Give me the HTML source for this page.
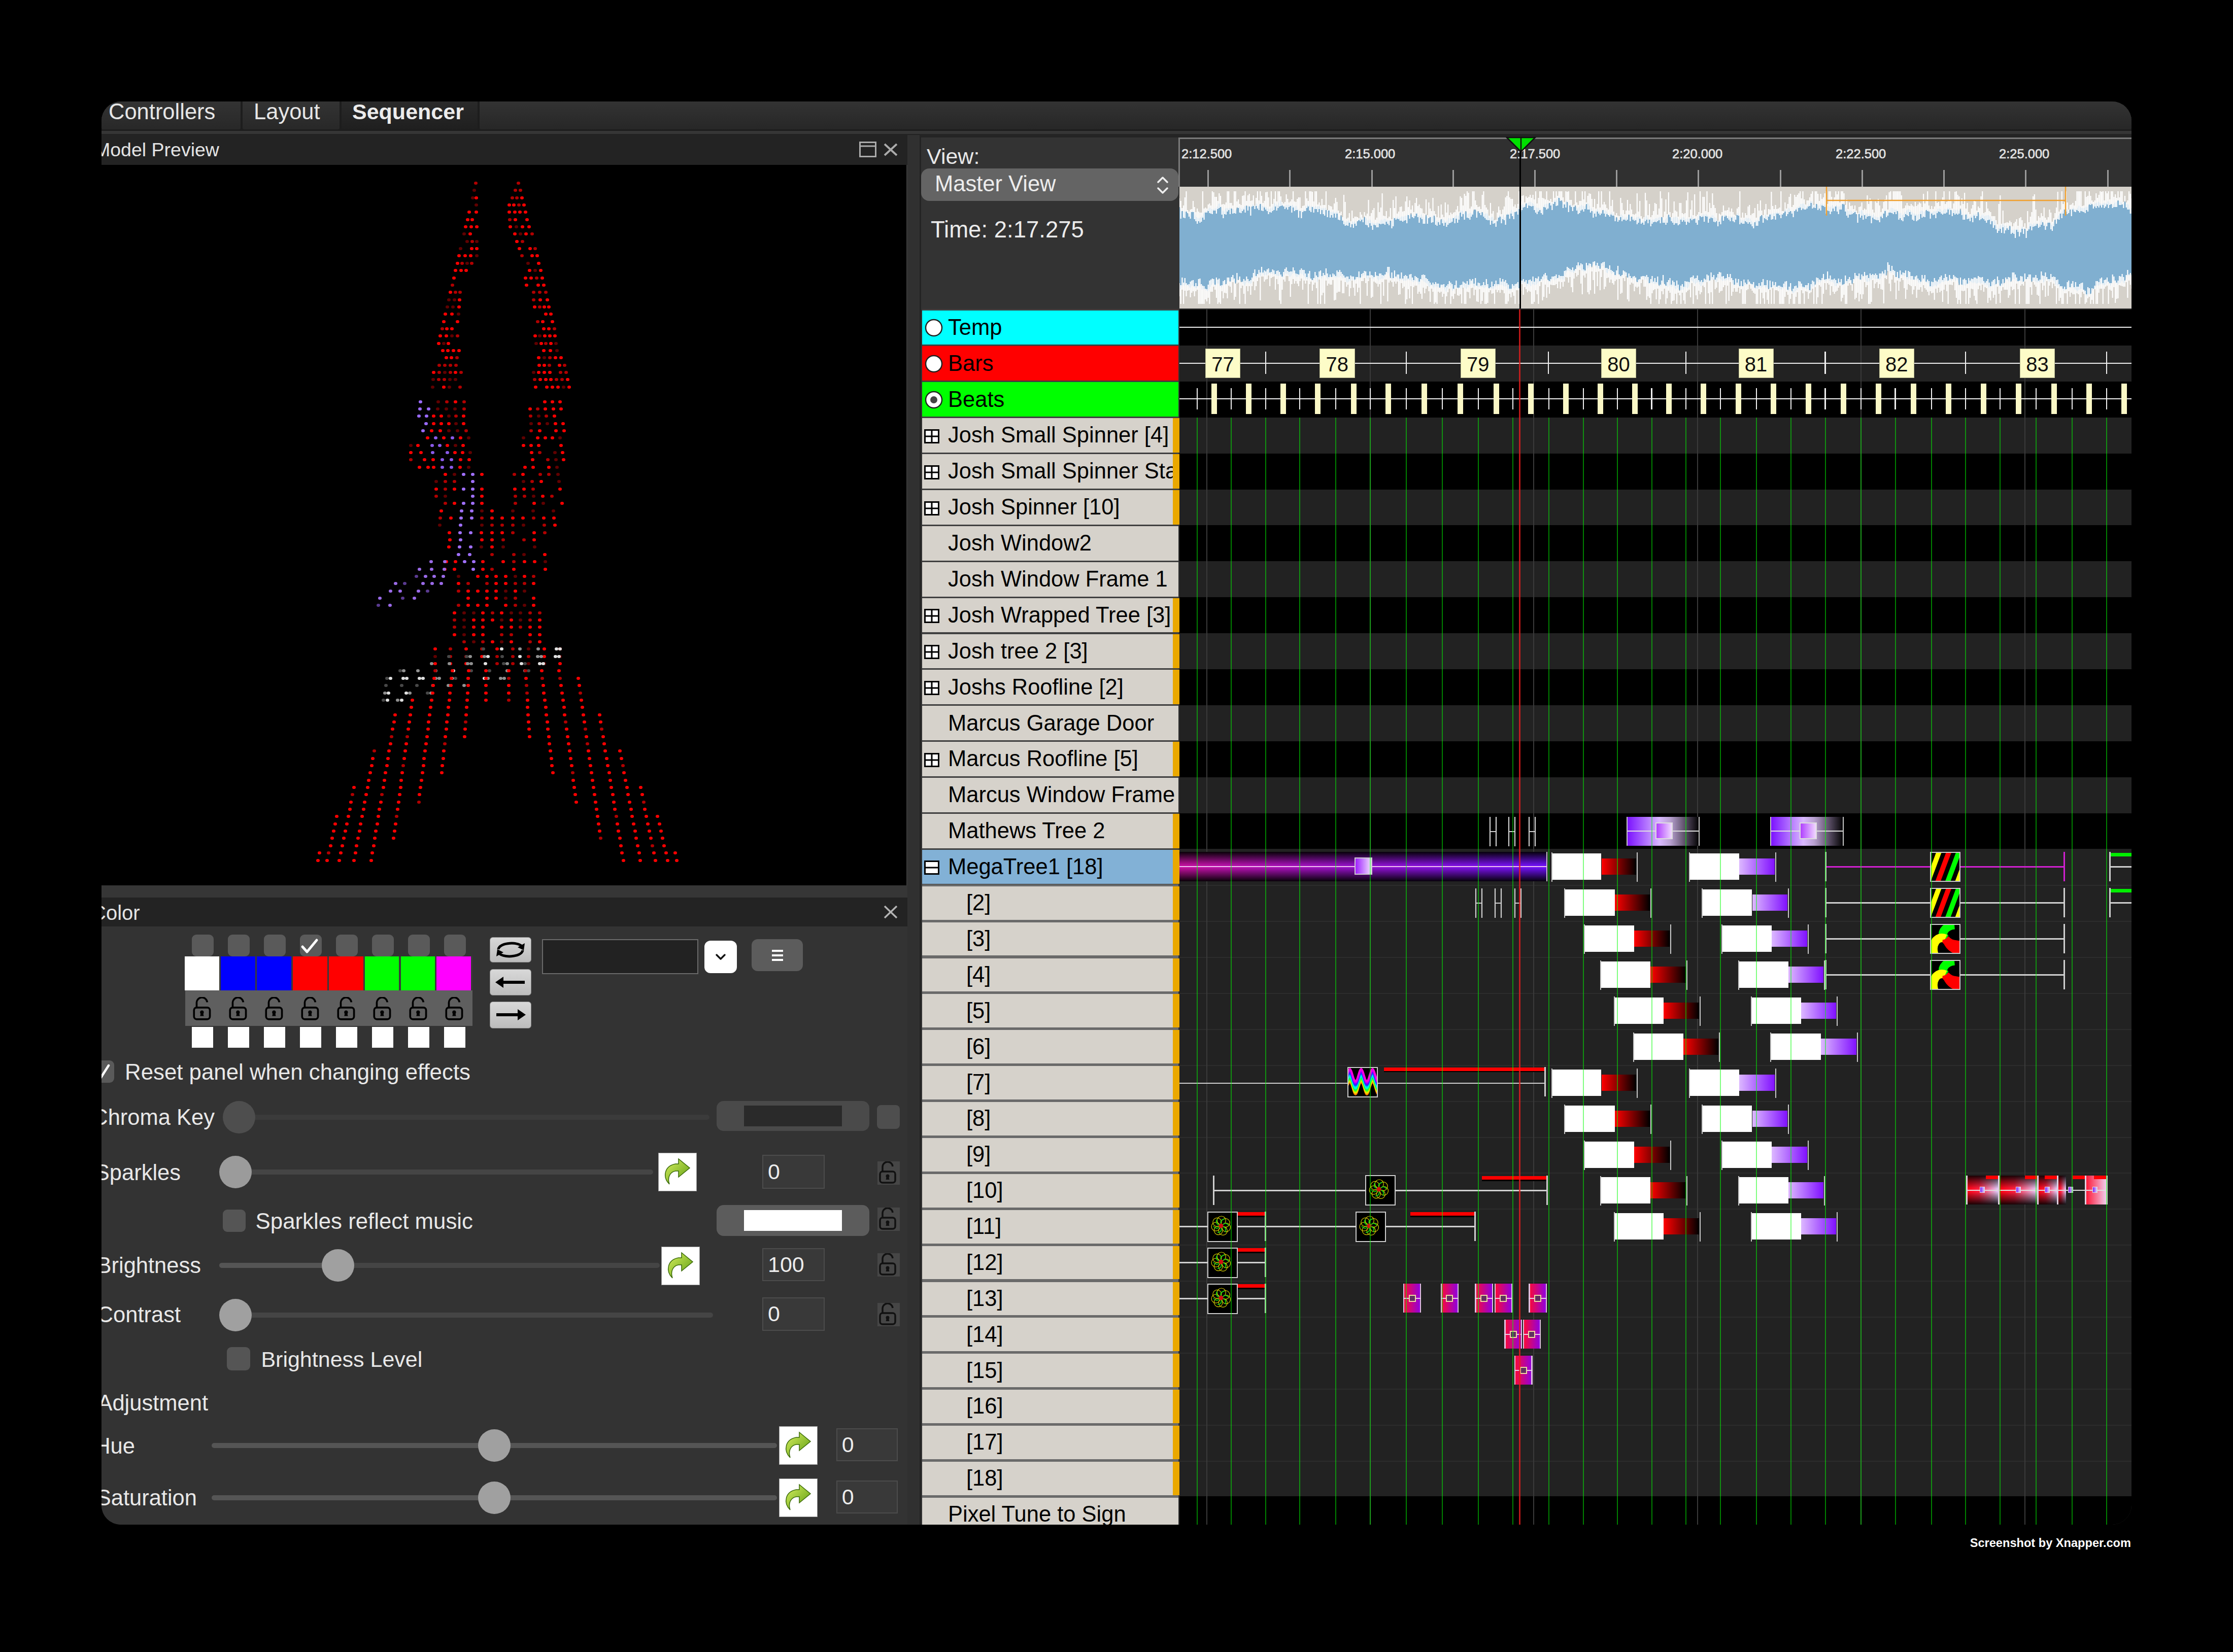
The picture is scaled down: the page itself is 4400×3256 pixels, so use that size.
<!DOCTYPE html>
<html><head><meta charset="utf-8"><style>
html,body{margin:0;padding:0;background:#000;}
body{width:4400px;height:3256px;position:relative;overflow:hidden;font-family:"Liberation Sans",sans-serif;}
body div, body svg{position:absolute;}
#win{left:0;top:0;width:4400px;height:3256px;background:#333;clip-path:inset(200px 200px 251px 200px round 38px);}
.t{white-space:nowrap;}
</style></head><body>
<div id="win">
<div style="left:200.0px;top:200.0px;width:4000.0px;height:66.0px;background:#1d1d1d;"></div>
<div style="left:200px;top:200px;width:274px;height:55px;background:linear-gradient(180deg,#333,#282828);border-radius:0 0 3px 3px"></div>
<div style="left:478px;top:200px;width:191px;height:55px;background:linear-gradient(180deg,#333,#282828);border-radius:0 0 3px 3px"></div>
<div style="left:673px;top:200px;width:268px;height:55px;background:linear-gradient(180deg,#2a2a2a,#1f1f1f);border-radius:0 0 3px 3px"></div>
<div style="left:945px;top:200px;width:3255px;height:55px;background:linear-gradient(180deg,#333,#272727);border-radius:0 0 3px 3px"></div>
<div class="t" style="left:214.0px;top:198.7px;font-size:43.5px;line-height:43.5px;color:#e6e6e6;font-weight:400;">Controllers</div>
<div class="t" style="left:500.0px;top:198.7px;font-size:43.5px;line-height:43.5px;color:#e6e6e6;font-weight:400;">Layout</div>
<div class="t" style="left:694.0px;top:199.1px;font-size:43px;line-height:43px;color:#ececec;font-weight:700;">Sequencer</div>
<div style="left:200.0px;top:258.0px;width:4000.0px;height:6.0px;background:#363636;"></div>
<div style="left:200.0px;top:264.0px;width:4000.0px;height:2.0px;background:#222;"></div>
<div style="left:200.0px;top:266.0px;width:1588.0px;height:59.0px;background:#232323;"></div>
<div class="t" style="left:186.0px;top:277.3px;font-size:37.5px;line-height:37.5px;color:#e4e4e4;font-weight:400;">Model Preview</div>
<svg style="left:1693px;top:279px" width="34" height="31"><rect x="1.5" y="1.5" width="31" height="28" fill="none" stroke="#ababab" stroke-width="3"/><line x1="1" y1="9" x2="33" y2="9" stroke="#ababab" stroke-width="3"/></svg>
<svg style="left:1740px;top:281px" width="30" height="28"><path d="M3 3 L27 25 M27 3 L3 25" stroke="#ababab" stroke-width="3.8" fill="none"/></svg>
<div style="left:200.0px;top:325.0px;width:1587.0px;height:1420.0px;background:#000;"></div>
<div style="left:1786.0px;top:325.0px;width:2.5px;height:1420.0px;background:#3a3a3a;"></div>
<div style="left:200.0px;top:1745.0px;width:1588.0px;height:24.0px;background:#363636;"></div>
<div style="left:200.0px;top:1769.0px;width:1588.0px;height:57.0px;background:#232323;"></div>
<div class="t" style="left:180.0px;top:1779.1px;font-size:40px;line-height:40px;color:#e4e4e4;font-weight:400;">Color</div>
<svg style="left:1740px;top:1783px" width="30" height="29"><path d="M3 3 L27 26 M27 3 L3 26" stroke="#b4b4b4" stroke-width="3.5" fill="none"/></svg>
<div style="left:200.0px;top:1826.0px;width:1588.0px;height:1179.0px;background:#333333;"></div>
<div style="left:1788.0px;top:266.0px;width:24.0px;height:2739.0px;background:#303030;"></div>
<div style="left:1812.0px;top:266.0px;width:3.0px;height:2739.0px;background:#232323;"></div>
<svg style="left:200px;top:325px" width="1586" height="1416"><rect x="734" y="33" width="7" height="6" rx="3" fill="#b00000"/><rect x="731" y="47" width="7" height="6" rx="3" fill="#600000"/><rect x="728" y="62" width="7" height="6" rx="3" fill="#600000"/><rect x="735" y="62" width="7" height="6" rx="3" fill="#ff0000"/><rect x="735" y="76" width="7" height="6" rx="3" fill="#600000"/><rect x="721" y="90" width="7" height="6" rx="3" fill="#ff0000"/><rect x="735" y="90" width="7" height="6" rx="3" fill="#ff0000"/><rect x="718" y="105" width="7" height="6" rx="3" fill="#ff0000"/><rect x="727" y="105" width="7" height="6" rx="3" fill="#ff0000"/><rect x="714" y="119" width="7" height="6" rx="3" fill="#ff0000"/><rect x="725" y="119" width="7" height="6" rx="3" fill="#ff0000"/><rect x="736" y="119" width="7" height="6" rx="3" fill="#ff0000"/><rect x="711" y="133" width="7" height="6" rx="3" fill="#600000"/><rect x="723" y="133" width="7" height="6" rx="3" fill="#ff0000"/><rect x="717" y="148" width="7" height="6" rx="3" fill="#600000"/><rect x="727" y="148" width="7" height="6" rx="3" fill="#b00000"/><rect x="736" y="148" width="7" height="6" rx="3" fill="#600000"/><rect x="704" y="162" width="7" height="6" rx="3" fill="#600000"/><rect x="726" y="162" width="7" height="6" rx="3" fill="#ff0000"/><rect x="736" y="162" width="7" height="6" rx="3" fill="#ff0000"/><rect x="701" y="176" width="7" height="6" rx="3" fill="#ff0000"/><rect x="713" y="176" width="7" height="6" rx="3" fill="#ff0000"/><rect x="724" y="176" width="7" height="6" rx="3" fill="#ff0000"/><rect x="736" y="176" width="7" height="6" rx="3" fill="#600000"/><rect x="698" y="191" width="7" height="6" rx="3" fill="#ff0000"/><rect x="707" y="191" width="7" height="6" rx="3" fill="#b00000"/><rect x="717" y="191" width="7" height="6" rx="3" fill="#600000"/><rect x="726" y="191" width="7" height="6" rx="3" fill="#b00000"/><rect x="694" y="205" width="7" height="6" rx="3" fill="#ff0000"/><rect x="705" y="205" width="7" height="6" rx="3" fill="#ff0000"/><rect x="715" y="205" width="7" height="6" rx="3" fill="#ff0000"/><rect x="691" y="220" width="7" height="6" rx="3" fill="#ff0000"/><rect x="688" y="234" width="7" height="6" rx="3" fill="#b00000"/><rect x="684" y="248" width="7" height="6" rx="3" fill="#ff0000"/><rect x="694" y="248" width="7" height="6" rx="3" fill="#b00000"/><rect x="703" y="248" width="7" height="6" rx="3" fill="#b00000"/><rect x="681" y="263" width="7" height="6" rx="3" fill="#600000"/><rect x="692" y="263" width="7" height="6" rx="3" fill="#600000"/><rect x="702" y="263" width="7" height="6" rx="3" fill="#ff0000"/><rect x="678" y="277" width="7" height="6" rx="3" fill="#600000"/><rect x="689" y="277" width="7" height="6" rx="3" fill="#600000"/><rect x="701" y="277" width="7" height="6" rx="3" fill="#ff0000"/><rect x="674" y="291" width="7" height="6" rx="3" fill="#ff0000"/><rect x="687" y="291" width="7" height="6" rx="3" fill="#ff0000"/><rect x="700" y="291" width="7" height="6" rx="3" fill="#600000"/><rect x="671" y="306" width="7" height="6" rx="3" fill="#ff0000"/><rect x="698" y="306" width="7" height="6" rx="3" fill="#ff0000"/><rect x="668" y="320" width="7" height="6" rx="3" fill="#b00000"/><rect x="677" y="320" width="7" height="6" rx="3" fill="#ff0000"/><rect x="687" y="320" width="7" height="6" rx="3" fill="#ff0000"/><rect x="664" y="334" width="7" height="6" rx="3" fill="#ff0000"/><rect x="676" y="334" width="7" height="6" rx="3" fill="#ff0000"/><rect x="687" y="334" width="7" height="6" rx="3" fill="#600000"/><rect x="698" y="334" width="7" height="6" rx="3" fill="#b00000"/><rect x="661" y="349" width="7" height="6" rx="3" fill="#ff0000"/><rect x="671" y="349" width="7" height="6" rx="3" fill="#600000"/><rect x="680" y="349" width="7" height="6" rx="3" fill="#ff0000"/><rect x="669" y="363" width="7" height="6" rx="3" fill="#ff0000"/><rect x="679" y="363" width="7" height="6" rx="3" fill="#ff0000"/><rect x="690" y="363" width="7" height="6" rx="3" fill="#ff0000"/><rect x="701" y="363" width="7" height="6" rx="3" fill="#ff0000"/><rect x="676" y="377" width="7" height="6" rx="3" fill="#ff0000"/><rect x="686" y="377" width="7" height="6" rx="3" fill="#ff0000"/><rect x="697" y="377" width="7" height="6" rx="3" fill="#b00000"/><rect x="662" y="392" width="7" height="6" rx="3" fill="#b00000"/><rect x="673" y="392" width="7" height="6" rx="3" fill="#b00000"/><rect x="684" y="392" width="7" height="6" rx="3" fill="#b00000"/><rect x="695" y="392" width="7" height="6" rx="3" fill="#b00000"/><rect x="651" y="406" width="7" height="6" rx="3" fill="#ff0000"/><rect x="662" y="406" width="7" height="6" rx="3" fill="#b00000"/><rect x="673" y="406" width="7" height="6" rx="3" fill="#600000"/><rect x="684" y="406" width="7" height="6" rx="3" fill="#b00000"/><rect x="694" y="406" width="7" height="6" rx="3" fill="#ff0000"/><rect x="705" y="406" width="7" height="6" rx="3" fill="#b00000"/><rect x="650" y="420" width="7" height="6" rx="3" fill="#600000"/><rect x="661" y="420" width="7" height="6" rx="3" fill="#b00000"/><rect x="672" y="420" width="7" height="6" rx="3" fill="#b00000"/><rect x="683" y="420" width="7" height="6" rx="3" fill="#600000"/><rect x="694" y="420" width="7" height="6" rx="3" fill="#600000"/><rect x="649" y="435" width="7" height="6" rx="3" fill="#600000"/><rect x="671" y="435" width="7" height="6" rx="3" fill="#ff0000"/><rect x="682" y="435" width="7" height="6" rx="3" fill="#600000"/><rect x="703" y="435" width="7" height="6" rx="3" fill="#b00000"/><rect x="818" y="33" width="7" height="6" rx="3" fill="#b00000"/><rect x="812" y="47" width="7" height="6" rx="3" fill="#b00000"/><rect x="822" y="47" width="7" height="6" rx="3" fill="#b00000"/><rect x="806" y="62" width="7" height="6" rx="3" fill="#b00000"/><rect x="815" y="62" width="7" height="6" rx="3" fill="#b00000"/><rect x="825" y="62" width="7" height="6" rx="3" fill="#ff0000"/><rect x="800" y="76" width="7" height="6" rx="3" fill="#ff0000"/><rect x="809" y="76" width="7" height="6" rx="3" fill="#ff0000"/><rect x="819" y="76" width="7" height="6" rx="3" fill="#b00000"/><rect x="829" y="76" width="7" height="6" rx="3" fill="#ff0000"/><rect x="800" y="90" width="7" height="6" rx="3" fill="#ff0000"/><rect x="811" y="90" width="7" height="6" rx="3" fill="#ff0000"/><rect x="821" y="90" width="7" height="6" rx="3" fill="#ff0000"/><rect x="832" y="90" width="7" height="6" rx="3" fill="#ff0000"/><rect x="801" y="105" width="7" height="6" rx="3" fill="#b00000"/><rect x="812" y="105" width="7" height="6" rx="3" fill="#ff0000"/><rect x="835" y="105" width="7" height="6" rx="3" fill="#ff0000"/><rect x="802" y="119" width="7" height="6" rx="3" fill="#ff0000"/><rect x="814" y="119" width="7" height="6" rx="3" fill="#600000"/><rect x="826" y="119" width="7" height="6" rx="3" fill="#ff0000"/><rect x="839" y="119" width="7" height="6" rx="3" fill="#ff0000"/><rect x="811" y="133" width="7" height="6" rx="3" fill="#ff0000"/><rect x="822" y="133" width="7" height="6" rx="3" fill="#600000"/><rect x="833" y="133" width="7" height="6" rx="3" fill="#ff0000"/><rect x="845" y="133" width="7" height="6" rx="3" fill="#b00000"/><rect x="815" y="148" width="7" height="6" rx="3" fill="#ff0000"/><rect x="826" y="148" width="7" height="6" rx="3" fill="#b00000"/><rect x="820" y="162" width="7" height="6" rx="3" fill="#ff0000"/><rect x="841" y="162" width="7" height="6" rx="3" fill="#ff0000"/><rect x="851" y="162" width="7" height="6" rx="3" fill="#b00000"/><rect x="825" y="176" width="7" height="6" rx="3" fill="#b00000"/><rect x="845" y="176" width="7" height="6" rx="3" fill="#ff0000"/><rect x="855" y="176" width="7" height="6" rx="3" fill="#ff0000"/><rect x="837" y="191" width="7" height="6" rx="3" fill="#600000"/><rect x="858" y="191" width="7" height="6" rx="3" fill="#ff0000"/><rect x="840" y="205" width="7" height="6" rx="3" fill="#ff0000"/><rect x="851" y="205" width="7" height="6" rx="3" fill="#600000"/><rect x="862" y="205" width="7" height="6" rx="3" fill="#ff0000"/><rect x="832" y="220" width="7" height="6" rx="3" fill="#ff0000"/><rect x="843" y="220" width="7" height="6" rx="3" fill="#ff0000"/><rect x="854" y="220" width="7" height="6" rx="3" fill="#b00000"/><rect x="865" y="220" width="7" height="6" rx="3" fill="#ff0000"/><rect x="834" y="234" width="7" height="6" rx="3" fill="#ff0000"/><rect x="857" y="234" width="7" height="6" rx="3" fill="#ff0000"/><rect x="868" y="234" width="7" height="6" rx="3" fill="#ff0000"/><rect x="848" y="248" width="7" height="6" rx="3" fill="#b00000"/><rect x="860" y="248" width="7" height="6" rx="3" fill="#b00000"/><rect x="872" y="248" width="7" height="6" rx="3" fill="#b00000"/><rect x="848" y="263" width="7" height="6" rx="3" fill="#b00000"/><rect x="861" y="263" width="7" height="6" rx="3" fill="#ff0000"/><rect x="875" y="263" width="7" height="6" rx="3" fill="#ff0000"/><rect x="850" y="277" width="7" height="6" rx="3" fill="#ff0000"/><rect x="860" y="277" width="7" height="6" rx="3" fill="#b00000"/><rect x="869" y="277" width="7" height="6" rx="3" fill="#ff0000"/><rect x="878" y="277" width="7" height="6" rx="3" fill="#ff0000"/><rect x="872" y="291" width="7" height="6" rx="3" fill="#ff0000"/><rect x="882" y="291" width="7" height="6" rx="3" fill="#ff0000"/><rect x="856" y="306" width="7" height="6" rx="3" fill="#b00000"/><rect x="866" y="306" width="7" height="6" rx="3" fill="#ff0000"/><rect x="885" y="306" width="7" height="6" rx="3" fill="#ff0000"/><rect x="868" y="320" width="7" height="6" rx="3" fill="#ff0000"/><rect x="878" y="320" width="7" height="6" rx="3" fill="#ff0000"/><rect x="889" y="320" width="7" height="6" rx="3" fill="#b00000"/><rect x="851" y="334" width="7" height="6" rx="3" fill="#ff0000"/><rect x="860" y="334" width="7" height="6" rx="3" fill="#600000"/><rect x="870" y="334" width="7" height="6" rx="3" fill="#ff0000"/><rect x="880" y="334" width="7" height="6" rx="3" fill="#ff0000"/><rect x="890" y="334" width="7" height="6" rx="3" fill="#ff0000"/><rect x="853" y="349" width="7" height="6" rx="3" fill="#600000"/><rect x="863" y="349" width="7" height="6" rx="3" fill="#ff0000"/><rect x="872" y="349" width="7" height="6" rx="3" fill="#b00000"/><rect x="882" y="349" width="7" height="6" rx="3" fill="#ff0000"/><rect x="892" y="349" width="7" height="6" rx="3" fill="#600000"/><rect x="868" y="363" width="7" height="6" rx="3" fill="#ff0000"/><rect x="881" y="363" width="7" height="6" rx="3" fill="#ff0000"/><rect x="894" y="363" width="7" height="6" rx="3" fill="#600000"/><rect x="858" y="377" width="7" height="6" rx="3" fill="#ff0000"/><rect x="869" y="377" width="7" height="6" rx="3" fill="#600000"/><rect x="880" y="377" width="7" height="6" rx="3" fill="#b00000"/><rect x="891" y="377" width="7" height="6" rx="3" fill="#ff0000"/><rect x="902" y="377" width="7" height="6" rx="3" fill="#ff0000"/><rect x="859" y="392" width="7" height="6" rx="3" fill="#ff0000"/><rect x="869" y="392" width="7" height="6" rx="3" fill="#ff0000"/><rect x="879" y="392" width="7" height="6" rx="3" fill="#b00000"/><rect x="899" y="392" width="7" height="6" rx="3" fill="#ff0000"/><rect x="909" y="392" width="7" height="6" rx="3" fill="#b00000"/><rect x="848" y="406" width="7" height="6" rx="3" fill="#600000"/><rect x="858" y="406" width="7" height="6" rx="3" fill="#ff0000"/><rect x="869" y="406" width="7" height="6" rx="3" fill="#ff0000"/><rect x="880" y="406" width="7" height="6" rx="3" fill="#ff0000"/><rect x="901" y="406" width="7" height="6" rx="3" fill="#b00000"/><rect x="912" y="406" width="7" height="6" rx="3" fill="#b00000"/><rect x="850" y="420" width="7" height="6" rx="3" fill="#b00000"/><rect x="861" y="420" width="7" height="6" rx="3" fill="#ff0000"/><rect x="872" y="420" width="7" height="6" rx="3" fill="#ff0000"/><rect x="882" y="420" width="7" height="6" rx="3" fill="#ff0000"/><rect x="893" y="420" width="7" height="6" rx="3" fill="#b00000"/><rect x="904" y="420" width="7" height="6" rx="3" fill="#b00000"/><rect x="915" y="420" width="7" height="6" rx="3" fill="#ff0000"/><rect x="852" y="435" width="7" height="6" rx="3" fill="#ff0000"/><rect x="874" y="435" width="7" height="6" rx="3" fill="#ff0000"/><rect x="885" y="435" width="7" height="6" rx="3" fill="#ff0000"/><rect x="896" y="435" width="7" height="6" rx="3" fill="#ff0000"/><rect x="907" y="435" width="7" height="6" rx="3" fill="#600000"/><rect x="918" y="435" width="7" height="6" rx="3" fill="#ff0000"/><rect x="625" y="464" width="7" height="6" rx="3" fill="#9a6aff"/><rect x="660" y="464" width="7" height="6" rx="3" fill="#600000"/><rect x="677" y="464" width="7" height="6" rx="3" fill="#b00000"/><rect x="694" y="464" width="7" height="6" rx="3" fill="#ff0000"/><rect x="711" y="464" width="7" height="6" rx="3" fill="#b00000"/><rect x="624" y="478" width="7" height="6" rx="3" fill="#9a6aff"/><rect x="641" y="478" width="7" height="6" rx="3" fill="#9a6aff"/><rect x="659" y="478" width="7" height="6" rx="3" fill="#600000"/><rect x="676" y="478" width="7" height="6" rx="3" fill="#600000"/><rect x="693" y="478" width="7" height="6" rx="3" fill="#600000"/><rect x="711" y="478" width="7" height="6" rx="3" fill="#b00000"/><rect x="622" y="492" width="7" height="6" rx="3" fill="#9a6aff"/><rect x="637" y="492" width="7" height="6" rx="3" fill="#9a6aff"/><rect x="651" y="492" width="7" height="6" rx="3" fill="#ff0000"/><rect x="666" y="492" width="7" height="6" rx="3" fill="#ff0000"/><rect x="681" y="492" width="7" height="6" rx="3" fill="#600000"/><rect x="695" y="492" width="7" height="6" rx="3" fill="#b00000"/><rect x="710" y="492" width="7" height="6" rx="3" fill="#ff0000"/><rect x="636" y="507" width="7" height="6" rx="3" fill="#9a6aff"/><rect x="651" y="507" width="7" height="6" rx="3" fill="#ff0000"/><rect x="666" y="507" width="7" height="6" rx="3" fill="#ff0000"/><rect x="681" y="507" width="7" height="6" rx="3" fill="#ff0000"/><rect x="695" y="507" width="7" height="6" rx="3" fill="#600000"/><rect x="710" y="507" width="7" height="6" rx="3" fill="#ff0000"/><rect x="630" y="521" width="7" height="6" rx="3" fill="#9a6aff"/><rect x="647" y="521" width="7" height="6" rx="3" fill="#ff0000"/><rect x="664" y="521" width="7" height="6" rx="3" fill="#ff0000"/><rect x="681" y="521" width="7" height="6" rx="3" fill="#600000"/><rect x="698" y="521" width="7" height="6" rx="3" fill="#600000"/><rect x="715" y="521" width="7" height="6" rx="3" fill="#b00000"/><rect x="639" y="535" width="7" height="6" rx="3" fill="#ff0000"/><rect x="655" y="535" width="7" height="6" rx="3" fill="#8a5ae8"/><rect x="671" y="535" width="7" height="6" rx="3" fill="#ff0000"/><rect x="688" y="535" width="7" height="6" rx="3" fill="#8a5ae8"/><rect x="704" y="535" width="7" height="6" rx="3" fill="#ff0000"/><rect x="720" y="535" width="7" height="6" rx="3" fill="#600000"/><rect x="648" y="550" width="7" height="6" rx="3" fill="#8a5ae8"/><rect x="663" y="550" width="7" height="6" rx="3" fill="#8a5ae8"/><rect x="678" y="550" width="7" height="6" rx="3" fill="#ff0000"/><rect x="694" y="550" width="7" height="6" rx="3" fill="#600000"/><rect x="709" y="550" width="7" height="6" rx="3" fill="#ff0000"/><rect x="649" y="564" width="7" height="6" rx="3" fill="#8a5ae8"/><rect x="678" y="564" width="7" height="6" rx="3" fill="#8a5ae8"/><rect x="693" y="564" width="7" height="6" rx="3" fill="#ff0000"/><rect x="708" y="564" width="7" height="6" rx="3" fill="#ff0000"/><rect x="723" y="564" width="7" height="6" rx="3" fill="#600000"/><rect x="650" y="578" width="7" height="6" rx="3" fill="#ff0000"/><rect x="668" y="578" width="7" height="6" rx="3" fill="#8a5ae8"/><rect x="686" y="578" width="7" height="6" rx="3" fill="#8a5ae8"/><rect x="704" y="578" width="7" height="6" rx="3" fill="#ff0000"/><rect x="721" y="578" width="7" height="6" rx="3" fill="#ff0000"/><rect x="651" y="593" width="7" height="6" rx="3" fill="#ff0000"/><rect x="668" y="593" width="7" height="6" rx="3" fill="#8a5ae8"/><rect x="686" y="593" width="7" height="6" rx="3" fill="#8a5ae8"/><rect x="703" y="593" width="7" height="6" rx="3" fill="#ff0000"/><rect x="720" y="593" width="7" height="6" rx="3" fill="#600000"/><rect x="606" y="550" width="7" height="6" rx="3" fill="#600000"/><rect x="620" y="550" width="7" height="6" rx="3" fill="#ff0000"/><rect x="606" y="564" width="7" height="6" rx="3" fill="#ff0000"/><rect x="626" y="564" width="7" height="6" rx="3" fill="#ff0000"/><rect x="606" y="578" width="7" height="6" rx="3" fill="#b00000"/><rect x="633" y="578" width="7" height="6" rx="3" fill="#ff0000"/><rect x="623" y="593" width="7" height="6" rx="3" fill="#ff0000"/><rect x="640" y="593" width="7" height="6" rx="3" fill="#ff0000"/><rect x="870" y="464" width="7" height="6" rx="3" fill="#ff0000"/><rect x="885" y="464" width="7" height="6" rx="3" fill="#ff0000"/><rect x="900" y="464" width="7" height="6" rx="3" fill="#ff0000"/><rect x="841" y="478" width="7" height="6" rx="3" fill="#ff0000"/><rect x="856" y="478" width="7" height="6" rx="3" fill="#b00000"/><rect x="871" y="478" width="7" height="6" rx="3" fill="#ff0000"/><rect x="887" y="478" width="7" height="6" rx="3" fill="#ff0000"/><rect x="902" y="478" width="7" height="6" rx="3" fill="#ff0000"/><rect x="842" y="492" width="7" height="6" rx="3" fill="#b00000"/><rect x="858" y="492" width="7" height="6" rx="3" fill="#600000"/><rect x="873" y="492" width="7" height="6" rx="3" fill="#b00000"/><rect x="889" y="492" width="7" height="6" rx="3" fill="#ff0000"/><rect x="843" y="507" width="7" height="6" rx="3" fill="#600000"/><rect x="859" y="507" width="7" height="6" rx="3" fill="#b00000"/><rect x="875" y="507" width="7" height="6" rx="3" fill="#600000"/><rect x="891" y="507" width="7" height="6" rx="3" fill="#ff0000"/><rect x="906" y="507" width="7" height="6" rx="3" fill="#ff0000"/><rect x="843" y="521" width="7" height="6" rx="3" fill="#b00000"/><rect x="860" y="521" width="7" height="6" rx="3" fill="#ff0000"/><rect x="892" y="521" width="7" height="6" rx="3" fill="#ff0000"/><rect x="908" y="521" width="7" height="6" rx="3" fill="#ff0000"/><rect x="828" y="535" width="7" height="6" rx="3" fill="#600000"/><rect x="856" y="535" width="7" height="6" rx="3" fill="#ff0000"/><rect x="871" y="535" width="7" height="6" rx="3" fill="#ff0000"/><rect x="885" y="535" width="7" height="6" rx="3" fill="#ff0000"/><rect x="900" y="535" width="7" height="6" rx="3" fill="#600000"/><rect x="828" y="550" width="7" height="6" rx="3" fill="#ff0000"/><rect x="843" y="550" width="7" height="6" rx="3" fill="#ff0000"/><rect x="858" y="550" width="7" height="6" rx="3" fill="#ff0000"/><rect x="902" y="550" width="7" height="6" rx="3" fill="#ff0000"/><rect x="844" y="564" width="7" height="6" rx="3" fill="#ff0000"/><rect x="860" y="564" width="7" height="6" rx="3" fill="#b00000"/><rect x="890" y="564" width="7" height="6" rx="3" fill="#600000"/><rect x="905" y="564" width="7" height="6" rx="3" fill="#ff0000"/><rect x="846" y="578" width="7" height="6" rx="3" fill="#ff0000"/><rect x="876" y="578" width="7" height="6" rx="3" fill="#b00000"/><rect x="892" y="578" width="7" height="6" rx="3" fill="#600000"/><rect x="907" y="578" width="7" height="6" rx="3" fill="#ff0000"/><rect x="831" y="593" width="7" height="6" rx="3" fill="#ff0000"/><rect x="847" y="593" width="7" height="6" rx="3" fill="#ff0000"/><rect x="878" y="593" width="7" height="6" rx="3" fill="#ff0000"/><rect x="894" y="593" width="7" height="6" rx="3" fill="#600000"/><rect x="674" y="607" width="7" height="6" rx="3" fill="#ff0000"/><rect x="692" y="607" width="7" height="6" rx="3" fill="#600000"/><rect x="710" y="607" width="7" height="6" rx="3" fill="#a070ff"/><rect x="728" y="607" width="7" height="6" rx="3" fill="#a070ff"/><rect x="746" y="607" width="7" height="6" rx="3" fill="#ff0000"/><rect x="656" y="621" width="7" height="6" rx="3" fill="#600000"/><rect x="674" y="621" width="7" height="6" rx="3" fill="#b00000"/><rect x="692" y="621" width="7" height="6" rx="3" fill="#b00000"/><rect x="728" y="621" width="7" height="6" rx="3" fill="#a070ff"/><rect x="656" y="636" width="7" height="6" rx="3" fill="#ff0000"/><rect x="674" y="636" width="7" height="6" rx="3" fill="#b00000"/><rect x="692" y="636" width="7" height="6" rx="3" fill="#ff0000"/><rect x="710" y="636" width="7" height="6" rx="3" fill="#a070ff"/><rect x="728" y="636" width="7" height="6" rx="3" fill="#a070ff"/><rect x="746" y="636" width="7" height="6" rx="3" fill="#ff0000"/><rect x="656" y="650" width="7" height="6" rx="3" fill="#b00000"/><rect x="674" y="650" width="7" height="6" rx="3" fill="#600000"/><rect x="728" y="650" width="7" height="6" rx="3" fill="#a070ff"/><rect x="746" y="650" width="7" height="6" rx="3" fill="#ff0000"/><rect x="674" y="664" width="7" height="6" rx="3" fill="#b00000"/><rect x="692" y="664" width="7" height="6" rx="3" fill="#ff0000"/><rect x="710" y="664" width="7" height="6" rx="3" fill="#a070ff"/><rect x="728" y="664" width="7" height="6" rx="3" fill="#a070ff"/><rect x="746" y="664" width="7" height="6" rx="3" fill="#ff0000"/><rect x="810" y="607" width="7" height="6" rx="3" fill="#b00000"/><rect x="827" y="607" width="7" height="6" rx="3" fill="#ff0000"/><rect x="861" y="607" width="7" height="6" rx="3" fill="#b00000"/><rect x="878" y="607" width="7" height="6" rx="3" fill="#b00000"/><rect x="896" y="607" width="7" height="6" rx="3" fill="#600000"/><rect x="828" y="621" width="7" height="6" rx="3" fill="#600000"/><rect x="845" y="621" width="7" height="6" rx="3" fill="#b00000"/><rect x="863" y="621" width="7" height="6" rx="3" fill="#ff0000"/><rect x="898" y="621" width="7" height="6" rx="3" fill="#600000"/><rect x="811" y="636" width="7" height="6" rx="3" fill="#ff0000"/><rect x="829" y="636" width="7" height="6" rx="3" fill="#ff0000"/><rect x="847" y="636" width="7" height="6" rx="3" fill="#b00000"/><rect x="900" y="636" width="7" height="6" rx="3" fill="#ff0000"/><rect x="812" y="650" width="7" height="6" rx="3" fill="#b00000"/><rect x="830" y="650" width="7" height="6" rx="3" fill="#b00000"/><rect x="848" y="650" width="7" height="6" rx="3" fill="#600000"/><rect x="866" y="650" width="7" height="6" rx="3" fill="#ff0000"/><rect x="884" y="650" width="7" height="6" rx="3" fill="#b00000"/><rect x="812" y="664" width="7" height="6" rx="3" fill="#b00000"/><rect x="849" y="664" width="7" height="6" rx="3" fill="#ff0000"/><rect x="867" y="664" width="7" height="6" rx="3" fill="#600000"/><rect x="904" y="664" width="7" height="6" rx="3" fill="#ff0000"/><rect x="666" y="679" width="7" height="6" rx="3" fill="#ff0000"/><rect x="706" y="679" width="7" height="6" rx="3" fill="#a070ff"/><rect x="726" y="679" width="7" height="6" rx="3" fill="#a070ff"/><rect x="746" y="679" width="7" height="6" rx="3" fill="#600000"/><rect x="766" y="679" width="7" height="6" rx="3" fill="#ff0000"/><rect x="664" y="693" width="7" height="6" rx="3" fill="#b00000"/><rect x="685" y="693" width="7" height="6" rx="3" fill="#ff0000"/><rect x="705" y="693" width="7" height="6" rx="3" fill="#a070ff"/><rect x="726" y="693" width="7" height="6" rx="3" fill="#a070ff"/><rect x="746" y="693" width="7" height="6" rx="3" fill="#b00000"/><rect x="766" y="693" width="7" height="6" rx="3" fill="#ff0000"/><rect x="663" y="707" width="7" height="6" rx="3" fill="#600000"/><rect x="704" y="707" width="7" height="6" rx="3" fill="#a070ff"/><rect x="746" y="707" width="7" height="6" rx="3" fill="#600000"/><rect x="766" y="707" width="7" height="6" rx="3" fill="#b00000"/><rect x="682" y="722" width="7" height="6" rx="3" fill="#ff0000"/><rect x="703" y="722" width="7" height="6" rx="3" fill="#a070ff"/><rect x="724" y="722" width="7" height="6" rx="3" fill="#a070ff"/><rect x="745" y="722" width="7" height="6" rx="3" fill="#ff0000"/><rect x="766" y="722" width="7" height="6" rx="3" fill="#ff0000"/><rect x="807" y="679" width="7" height="6" rx="3" fill="#600000"/><rect x="847" y="679" width="7" height="6" rx="3" fill="#600000"/><rect x="887" y="679" width="7" height="6" rx="3" fill="#600000"/><rect x="786" y="693" width="7" height="6" rx="3" fill="#ff0000"/><rect x="807" y="693" width="7" height="6" rx="3" fill="#ff0000"/><rect x="827" y="693" width="7" height="6" rx="3" fill="#ff0000"/><rect x="848" y="693" width="7" height="6" rx="3" fill="#b00000"/><rect x="868" y="693" width="7" height="6" rx="3" fill="#ff0000"/><rect x="888" y="693" width="7" height="6" rx="3" fill="#ff0000"/><rect x="786" y="707" width="7" height="6" rx="3" fill="#b00000"/><rect x="807" y="707" width="7" height="6" rx="3" fill="#b00000"/><rect x="828" y="707" width="7" height="6" rx="3" fill="#600000"/><rect x="869" y="707" width="7" height="6" rx="3" fill="#b00000"/><rect x="890" y="707" width="7" height="6" rx="3" fill="#ff0000"/><rect x="786" y="722" width="7" height="6" rx="3" fill="#ff0000"/><rect x="807" y="722" width="7" height="6" rx="3" fill="#b00000"/><rect x="849" y="722" width="7" height="6" rx="3" fill="#ff0000"/><rect x="870" y="722" width="7" height="6" rx="3" fill="#b00000"/><rect x="683" y="736" width="7" height="6" rx="3" fill="#ff0000"/><rect x="704" y="736" width="7" height="6" rx="3" fill="#a070ff"/><rect x="746" y="736" width="7" height="6" rx="3" fill="#ff0000"/><rect x="766" y="736" width="7" height="6" rx="3" fill="#ff0000"/><rect x="681" y="750" width="7" height="6" rx="3" fill="#ff0000"/><rect x="702" y="750" width="7" height="6" rx="3" fill="#a070ff"/><rect x="724" y="750" width="7" height="6" rx="3" fill="#a070ff"/><rect x="745" y="750" width="7" height="6" rx="3" fill="#600000"/><rect x="766" y="750" width="7" height="6" rx="3" fill="#ff0000"/><rect x="700" y="765" width="7" height="6" rx="3" fill="#a070ff"/><rect x="722" y="765" width="7" height="6" rx="3" fill="#a070ff"/><rect x="766" y="765" width="7" height="6" rx="3" fill="#b00000"/><rect x="676" y="779" width="7" height="6" rx="3" fill="#ff0000"/><rect x="694" y="779" width="7" height="6" rx="3" fill="#ff0000"/><rect x="712" y="779" width="7" height="6" rx="3" fill="#a070ff"/><rect x="730" y="779" width="7" height="6" rx="3" fill="#a070ff"/><rect x="748" y="779" width="7" height="6" rx="3" fill="#ff0000"/><rect x="673" y="794" width="7" height="6" rx="3" fill="#ff0000"/><rect x="692" y="794" width="7" height="6" rx="3" fill="#ff0000"/><rect x="729" y="794" width="7" height="6" rx="3" fill="#a070ff"/><rect x="748" y="794" width="7" height="6" rx="3" fill="#ff0000"/><rect x="766" y="794" width="7" height="6" rx="3" fill="#b00000"/><rect x="788" y="736" width="7" height="6" rx="3" fill="#b00000"/><rect x="829" y="736" width="7" height="6" rx="3" fill="#b00000"/><rect x="849" y="736" width="7" height="6" rx="3" fill="#ff0000"/><rect x="788" y="750" width="7" height="6" rx="3" fill="#600000"/><rect x="850" y="750" width="7" height="6" rx="3" fill="#600000"/><rect x="809" y="765" width="7" height="6" rx="3" fill="#b00000"/><rect x="829" y="765" width="7" height="6" rx="3" fill="#600000"/><rect x="870" y="765" width="7" height="6" rx="3" fill="#ff0000"/><rect x="788" y="779" width="7" height="6" rx="3" fill="#ff0000"/><rect x="809" y="779" width="7" height="6" rx="3" fill="#b00000"/><rect x="830" y="779" width="7" height="6" rx="3" fill="#ff0000"/><rect x="850" y="779" width="7" height="6" rx="3" fill="#ff0000"/><rect x="871" y="779" width="7" height="6" rx="3" fill="#600000"/><rect x="809" y="794" width="7" height="6" rx="3" fill="#ff0000"/><rect x="871" y="794" width="7" height="6" rx="3" fill="#ff0000"/><rect x="700" y="808" width="7" height="6" rx="3" fill="#600000"/><rect x="738" y="808" width="7" height="6" rx="3" fill="#ff0000"/><rect x="756" y="808" width="7" height="6" rx="3" fill="#ff0000"/><rect x="774" y="808" width="7" height="6" rx="3" fill="#ff0000"/><rect x="793" y="808" width="7" height="6" rx="3" fill="#ff0000"/><rect x="812" y="808" width="7" height="6" rx="3" fill="#600000"/><rect x="830" y="808" width="7" height="6" rx="3" fill="#ff0000"/><rect x="848" y="808" width="7" height="6" rx="3" fill="#b00000"/><rect x="700" y="822" width="7" height="6" rx="3" fill="#ff0000"/><rect x="719" y="822" width="7" height="6" rx="3" fill="#b00000"/><rect x="756" y="822" width="7" height="6" rx="3" fill="#b00000"/><rect x="774" y="822" width="7" height="6" rx="3" fill="#ff0000"/><rect x="793" y="822" width="7" height="6" rx="3" fill="#ff0000"/><rect x="812" y="822" width="7" height="6" rx="3" fill="#b00000"/><rect x="830" y="822" width="7" height="6" rx="3" fill="#b00000"/><rect x="848" y="822" width="7" height="6" rx="3" fill="#ff0000"/><rect x="700" y="837" width="7" height="6" rx="3" fill="#b00000"/><rect x="719" y="837" width="7" height="6" rx="3" fill="#ff0000"/><rect x="738" y="837" width="7" height="6" rx="3" fill="#ff0000"/><rect x="756" y="837" width="7" height="6" rx="3" fill="#ff0000"/><rect x="774" y="837" width="7" height="6" rx="3" fill="#ff0000"/><rect x="793" y="837" width="7" height="6" rx="3" fill="#600000"/><rect x="812" y="837" width="7" height="6" rx="3" fill="#ff0000"/><rect x="830" y="837" width="7" height="6" rx="3" fill="#600000"/><rect x="719" y="851" width="7" height="6" rx="3" fill="#ff0000"/><rect x="756" y="851" width="7" height="6" rx="3" fill="#ff0000"/><rect x="774" y="851" width="7" height="6" rx="3" fill="#ff0000"/><rect x="793" y="851" width="7" height="6" rx="3" fill="#600000"/><rect x="812" y="851" width="7" height="6" rx="3" fill="#b00000"/><rect x="848" y="851" width="7" height="6" rx="3" fill="#ff0000"/><rect x="700" y="865" width="7" height="6" rx="3" fill="#b00000"/><rect x="719" y="865" width="7" height="6" rx="3" fill="#ff0000"/><rect x="738" y="865" width="7" height="6" rx="3" fill="#ff0000"/><rect x="756" y="865" width="7" height="6" rx="3" fill="#ff0000"/><rect x="793" y="865" width="7" height="6" rx="3" fill="#ff0000"/><rect x="812" y="865" width="7" height="6" rx="3" fill="#b00000"/><rect x="830" y="865" width="7" height="6" rx="3" fill="#600000"/><rect x="848" y="865" width="7" height="6" rx="3" fill="#ff0000"/><rect x="692" y="880" width="7" height="6" rx="3" fill="#ff0000"/><rect x="711" y="880" width="7" height="6" rx="3" fill="#600000"/><rect x="730" y="880" width="7" height="6" rx="3" fill="#600000"/><rect x="748" y="880" width="7" height="6" rx="3" fill="#ff0000"/><rect x="767" y="880" width="7" height="6" rx="3" fill="#b00000"/><rect x="785" y="880" width="7" height="6" rx="3" fill="#ff0000"/><rect x="804" y="880" width="7" height="6" rx="3" fill="#600000"/><rect x="822" y="880" width="7" height="6" rx="3" fill="#600000"/><rect x="841" y="880" width="7" height="6" rx="3" fill="#b00000"/><rect x="860" y="880" width="7" height="6" rx="3" fill="#b00000"/><rect x="692" y="894" width="7" height="6" rx="3" fill="#b00000"/><rect x="711" y="894" width="7" height="6" rx="3" fill="#600000"/><rect x="730" y="894" width="7" height="6" rx="3" fill="#ff0000"/><rect x="748" y="894" width="7" height="6" rx="3" fill="#ff0000"/><rect x="767" y="894" width="7" height="6" rx="3" fill="#ff0000"/><rect x="785" y="894" width="7" height="6" rx="3" fill="#600000"/><rect x="804" y="894" width="7" height="6" rx="3" fill="#ff0000"/><rect x="822" y="894" width="7" height="6" rx="3" fill="#600000"/><rect x="841" y="894" width="7" height="6" rx="3" fill="#b00000"/><rect x="860" y="894" width="7" height="6" rx="3" fill="#ff0000"/><rect x="692" y="908" width="7" height="6" rx="3" fill="#b00000"/><rect x="711" y="908" width="7" height="6" rx="3" fill="#600000"/><rect x="730" y="908" width="7" height="6" rx="3" fill="#ff0000"/><rect x="748" y="908" width="7" height="6" rx="3" fill="#ff0000"/><rect x="785" y="908" width="7" height="6" rx="3" fill="#ff0000"/><rect x="804" y="908" width="7" height="6" rx="3" fill="#ff0000"/><rect x="822" y="908" width="7" height="6" rx="3" fill="#b00000"/><rect x="841" y="908" width="7" height="6" rx="3" fill="#ff0000"/><rect x="860" y="908" width="7" height="6" rx="3" fill="#ff0000"/><rect x="692" y="923" width="7" height="6" rx="3" fill="#ff0000"/><rect x="711" y="923" width="7" height="6" rx="3" fill="#600000"/><rect x="730" y="923" width="7" height="6" rx="3" fill="#ff0000"/><rect x="748" y="923" width="7" height="6" rx="3" fill="#ff0000"/><rect x="785" y="923" width="7" height="6" rx="3" fill="#b00000"/><rect x="804" y="923" width="7" height="6" rx="3" fill="#b00000"/><rect x="841" y="923" width="7" height="6" rx="3" fill="#ff0000"/><rect x="860" y="923" width="7" height="6" rx="3" fill="#ff0000"/><rect x="711" y="937" width="7" height="6" rx="3" fill="#b00000"/><rect x="730" y="937" width="7" height="6" rx="3" fill="#600000"/><rect x="748" y="937" width="7" height="6" rx="3" fill="#b00000"/><rect x="767" y="937" width="7" height="6" rx="3" fill="#ff0000"/><rect x="785" y="937" width="7" height="6" rx="3" fill="#600000"/><rect x="804" y="937" width="7" height="6" rx="3" fill="#ff0000"/><rect x="841" y="937" width="7" height="6" rx="3" fill="#b00000"/><rect x="860" y="937" width="7" height="6" rx="3" fill="#ff0000"/><rect x="646" y="779" width="7" height="6" rx="3" fill="#9a6ae8"/><rect x="673" y="779" width="7" height="6" rx="3" fill="#9a6ae8"/><rect x="623" y="794" width="7" height="6" rx="3" fill="#9a6ae8"/><rect x="647" y="794" width="7" height="6" rx="3" fill="#9a6ae8"/><rect x="672" y="794" width="7" height="6" rx="3" fill="#9a6ae8"/><rect x="617" y="808" width="7" height="6" rx="3" fill="#5a3a90"/><rect x="635" y="808" width="7" height="6" rx="3" fill="#9a6ae8"/><rect x="652" y="808" width="7" height="6" rx="3" fill="#9a6ae8"/><rect x="670" y="808" width="7" height="6" rx="3" fill="#9a6ae8"/><rect x="576" y="822" width="7" height="6" rx="3" fill="#9a6ae8"/><rect x="594" y="822" width="7" height="6" rx="3" fill="#5a3a90"/><rect x="630" y="822" width="7" height="6" rx="3" fill="#9a6ae8"/><rect x="648" y="822" width="7" height="6" rx="3" fill="#9a6ae8"/><rect x="666" y="822" width="7" height="6" rx="3" fill="#9a6ae8"/><rect x="566" y="837" width="7" height="6" rx="3" fill="#9a6ae8"/><rect x="585" y="837" width="7" height="6" rx="3" fill="#9a6ae8"/><rect x="621" y="837" width="7" height="6" rx="3" fill="#9a6ae8"/><rect x="639" y="837" width="7" height="6" rx="3" fill="#5a3a90"/><rect x="545" y="851" width="7" height="6" rx="3" fill="#9a6ae8"/><rect x="590" y="851" width="7" height="6" rx="3" fill="#5a3a90"/><rect x="613" y="851" width="7" height="6" rx="3" fill="#9a6ae8"/><rect x="542" y="865" width="7" height="6" rx="3" fill="#5a3a90"/><rect x="565" y="865" width="7" height="6" rx="3" fill="#9a6ae8"/><rect x="654" y="951" width="7" height="6" rx="3" fill="#ff0000"/><rect x="684" y="951" width="7" height="6" rx="3" fill="#b00000"/><rect x="715" y="951" width="7" height="6" rx="3" fill="#ff0000"/><rect x="746" y="951" width="7" height="6" rx="3" fill="#b00000"/><rect x="776" y="951" width="7" height="6" rx="3" fill="#ff0000"/><rect x="807" y="951" width="7" height="6" rx="3" fill="#b00000"/><rect x="838" y="951" width="7" height="6" rx="3" fill="#600000"/><rect x="869" y="951" width="7" height="6" rx="3" fill="#ff0000"/><rect x="900" y="951" width="7" height="6" rx="3" fill="#ff0000"/><rect x="654" y="966" width="7" height="6" rx="3" fill="#600000"/><rect x="684" y="966" width="7" height="6" rx="3" fill="#b00000"/><rect x="715" y="966" width="7" height="6" rx="3" fill="#b00000"/><rect x="746" y="966" width="7" height="6" rx="3" fill="#ff0000"/><rect x="776" y="966" width="7" height="6" rx="3" fill="#b00000"/><rect x="807" y="966" width="7" height="6" rx="3" fill="#b00000"/><rect x="838" y="966" width="7" height="6" rx="3" fill="#b00000"/><rect x="869" y="966" width="7" height="6" rx="3" fill="#ff0000"/><rect x="900" y="966" width="7" height="6" rx="3" fill="#600000"/><rect x="654" y="980" width="7" height="6" rx="3" fill="#ff0000"/><rect x="684" y="980" width="7" height="6" rx="3" fill="#ff0000"/><rect x="715" y="980" width="7" height="6" rx="3" fill="#ff0000"/><rect x="776" y="980" width="7" height="6" rx="3" fill="#b00000"/><rect x="807" y="980" width="7" height="6" rx="3" fill="#b00000"/><rect x="838" y="980" width="7" height="6" rx="3" fill="#600000"/><rect x="869" y="980" width="7" height="6" rx="3" fill="#600000"/><rect x="900" y="980" width="7" height="6" rx="3" fill="#ff0000"/><rect x="749" y="951" width="7" height="6" rx="3" fill="#484848"/><rect x="785" y="951" width="7" height="6" rx="3" fill="#e0e0e0"/><rect x="821" y="951" width="7" height="6" rx="3" fill="#909090"/><rect x="857" y="951" width="7" height="6" rx="3" fill="#909090"/><rect x="893" y="951" width="7" height="6" rx="3" fill="#e0e0e0"/><rect x="900" y="951" width="7" height="6" rx="3" fill="#e0e0e0"/><rect x="681" y="966" width="7" height="6" rx="3" fill="#484848"/><rect x="716" y="966" width="7" height="6" rx="3" fill="#484848"/><rect x="723" y="966" width="7" height="6" rx="3" fill="#909090"/><rect x="751" y="966" width="7" height="6" rx="3" fill="#909090"/><rect x="758" y="966" width="7" height="6" rx="3" fill="#e0e0e0"/><rect x="786" y="966" width="7" height="6" rx="3" fill="#484848"/><rect x="821" y="966" width="7" height="6" rx="3" fill="#e0e0e0"/><rect x="856" y="966" width="7" height="6" rx="3" fill="#909090"/><rect x="863" y="966" width="7" height="6" rx="3" fill="#909090"/><rect x="891" y="966" width="7" height="6" rx="3" fill="#e0e0e0"/><rect x="898" y="966" width="7" height="6" rx="3" fill="#e0e0e0"/><rect x="647" y="980" width="7" height="6" rx="3" fill="#909090"/><rect x="682" y="980" width="7" height="6" rx="3" fill="#909090"/><rect x="718" y="980" width="7" height="6" rx="3" fill="#909090"/><rect x="725" y="980" width="7" height="6" rx="3" fill="#909090"/><rect x="753" y="980" width="7" height="6" rx="3" fill="#e0e0e0"/><rect x="789" y="980" width="7" height="6" rx="3" fill="#484848"/><rect x="796" y="980" width="7" height="6" rx="3" fill="#909090"/><rect x="824" y="980" width="7" height="6" rx="3" fill="#e0e0e0"/><rect x="831" y="980" width="7" height="6" rx="3" fill="#484848"/><rect x="860" y="980" width="7" height="6" rx="3" fill="#e0e0e0"/><rect x="867" y="980" width="7" height="6" rx="3" fill="#e0e0e0"/><rect x="585" y="994" width="7" height="6" rx="3" fill="#484848"/><rect x="592" y="994" width="7" height="6" rx="3" fill="#909090"/><rect x="620" y="994" width="7" height="6" rx="3" fill="#909090"/><rect x="655" y="994" width="7" height="6" rx="3" fill="#909090"/><rect x="690" y="994" width="7" height="6" rx="3" fill="#e0e0e0"/><rect x="725" y="994" width="7" height="6" rx="3" fill="#484848"/><rect x="761" y="994" width="7" height="6" rx="3" fill="#484848"/><rect x="796" y="994" width="7" height="6" rx="3" fill="#909090"/><rect x="831" y="994" width="7" height="6" rx="3" fill="#909090"/><rect x="838" y="994" width="7" height="6" rx="3" fill="#484848"/><rect x="559" y="1009" width="7" height="6" rx="3" fill="#484848"/><rect x="566" y="1009" width="7" height="6" rx="3" fill="#e0e0e0"/><rect x="591" y="1009" width="7" height="6" rx="3" fill="#e0e0e0"/><rect x="598" y="1009" width="7" height="6" rx="3" fill="#e0e0e0"/><rect x="623" y="1009" width="7" height="6" rx="3" fill="#e0e0e0"/><rect x="630" y="1009" width="7" height="6" rx="3" fill="#e0e0e0"/><rect x="655" y="1009" width="7" height="6" rx="3" fill="#909090"/><rect x="662" y="1009" width="7" height="6" rx="3" fill="#909090"/><rect x="687" y="1009" width="7" height="6" rx="3" fill="#e0e0e0"/><rect x="694" y="1009" width="7" height="6" rx="3" fill="#484848"/><rect x="719" y="1009" width="7" height="6" rx="3" fill="#484848"/><rect x="751" y="1009" width="7" height="6" rx="3" fill="#e0e0e0"/><rect x="758" y="1009" width="7" height="6" rx="3" fill="#909090"/><rect x="783" y="1009" width="7" height="6" rx="3" fill="#909090"/><rect x="790" y="1009" width="7" height="6" rx="3" fill="#909090"/><rect x="557" y="1023" width="7" height="6" rx="3" fill="#484848"/><rect x="588" y="1023" width="7" height="6" rx="3" fill="#484848"/><rect x="618" y="1023" width="7" height="6" rx="3" fill="#484848"/><rect x="649" y="1023" width="7" height="6" rx="3" fill="#484848"/><rect x="680" y="1023" width="7" height="6" rx="3" fill="#909090"/><rect x="711" y="1023" width="7" height="6" rx="3" fill="#909090"/><rect x="555" y="1038" width="7" height="6" rx="3" fill="#909090"/><rect x="562" y="1038" width="7" height="6" rx="3" fill="#e0e0e0"/><rect x="597" y="1038" width="7" height="6" rx="3" fill="#e0e0e0"/><rect x="604" y="1038" width="7" height="6" rx="3" fill="#909090"/><rect x="639" y="1038" width="7" height="6" rx="3" fill="#484848"/><rect x="646" y="1038" width="7" height="6" rx="3" fill="#909090"/><rect x="552" y="1052" width="7" height="6" rx="3" fill="#484848"/><rect x="560" y="1052" width="7" height="6" rx="3" fill="#e0e0e0"/><rect x="580" y="1052" width="7" height="6" rx="3" fill="#909090"/><rect x="588" y="1052" width="7" height="6" rx="3" fill="#e0e0e0"/><rect x="426" y="1353" width="7" height="6" rx="3" fill="#ff0000"/><rect x="423" y="1368" width="7" height="6" rx="3" fill="#ff0000"/><rect x="460" y="1281" width="7" height="6" rx="3" fill="#ff0000"/><rect x="457" y="1296" width="7" height="6" rx="3" fill="#ff0000"/><rect x="454" y="1310" width="7" height="6" rx="3" fill="#ff0000"/><rect x="451" y="1324" width="7" height="6" rx="3" fill="#ff0000"/><rect x="448" y="1339" width="7" height="6" rx="3" fill="#ff0000"/><rect x="444" y="1353" width="7" height="6" rx="3" fill="#b00000"/><rect x="441" y="1368" width="7" height="6" rx="3" fill="#ff0000"/><rect x="494" y="1224" width="7" height="6" rx="3" fill="#ff0000"/><rect x="491" y="1238" width="7" height="6" rx="3" fill="#b00000"/><rect x="488" y="1253" width="7" height="6" rx="3" fill="#ff0000"/><rect x="486" y="1267" width="7" height="6" rx="3" fill="#ff0000"/><rect x="483" y="1281" width="7" height="6" rx="3" fill="#ff0000"/><rect x="480" y="1296" width="7" height="6" rx="3" fill="#ff0000"/><rect x="477" y="1310" width="7" height="6" rx="3" fill="#ff0000"/><rect x="474" y="1324" width="7" height="6" rx="3" fill="#ff0000"/><rect x="471" y="1339" width="7" height="6" rx="3" fill="#ff0000"/><rect x="468" y="1353" width="7" height="6" rx="3" fill="#ff0000"/><rect x="465" y="1368" width="7" height="6" rx="3" fill="#ff0000"/><rect x="534" y="1152" width="7" height="6" rx="3" fill="#b00000"/><rect x="531" y="1167" width="7" height="6" rx="3" fill="#ff0000"/><rect x="529" y="1181" width="7" height="6" rx="3" fill="#ff0000"/><rect x="526" y="1195" width="7" height="6" rx="3" fill="#ff0000"/><rect x="523" y="1210" width="7" height="6" rx="3" fill="#ff0000"/><rect x="521" y="1224" width="7" height="6" rx="3" fill="#ff0000"/><rect x="518" y="1238" width="7" height="6" rx="3" fill="#ff0000"/><rect x="515" y="1253" width="7" height="6" rx="3" fill="#ff0000"/><rect x="513" y="1267" width="7" height="6" rx="3" fill="#ff0000"/><rect x="510" y="1281" width="7" height="6" rx="3" fill="#ff0000"/><rect x="507" y="1296" width="7" height="6" rx="3" fill="#ff0000"/><rect x="505" y="1310" width="7" height="6" rx="3" fill="#ff0000"/><rect x="502" y="1324" width="7" height="6" rx="3" fill="#ff0000"/><rect x="499" y="1339" width="7" height="6" rx="3" fill="#ff0000"/><rect x="497" y="1353" width="7" height="6" rx="3" fill="#ff0000"/><rect x="494" y="1368" width="7" height="6" rx="3" fill="#ff0000"/><rect x="575" y="1081" width="7" height="6" rx="3" fill="#ff0000"/><rect x="573" y="1095" width="7" height="6" rx="3" fill="#ff0000"/><rect x="570" y="1109" width="7" height="6" rx="3" fill="#ff0000"/><rect x="568" y="1124" width="7" height="6" rx="3" fill="#b00000"/><rect x="566" y="1138" width="7" height="6" rx="3" fill="#ff0000"/><rect x="563" y="1152" width="7" height="6" rx="3" fill="#ff0000"/><rect x="561" y="1167" width="7" height="6" rx="3" fill="#ff0000"/><rect x="559" y="1181" width="7" height="6" rx="3" fill="#ff0000"/><rect x="556" y="1195" width="7" height="6" rx="3" fill="#ff0000"/><rect x="554" y="1210" width="7" height="6" rx="3" fill="#ff0000"/><rect x="552" y="1224" width="7" height="6" rx="3" fill="#ff0000"/><rect x="549" y="1238" width="7" height="6" rx="3" fill="#b00000"/><rect x="547" y="1253" width="7" height="6" rx="3" fill="#ff0000"/><rect x="544" y="1267" width="7" height="6" rx="3" fill="#ff0000"/><rect x="542" y="1281" width="7" height="6" rx="3" fill="#ff0000"/><rect x="540" y="1296" width="7" height="6" rx="3" fill="#ff0000"/><rect x="537" y="1310" width="7" height="6" rx="3" fill="#ff0000"/><rect x="535" y="1324" width="7" height="6" rx="3" fill="#ff0000"/><rect x="533" y="1339" width="7" height="6" rx="3" fill="#ff0000"/><rect x="530" y="1353" width="7" height="6" rx="3" fill="#ff0000"/><rect x="528" y="1368" width="7" height="6" rx="3" fill="#ff0000"/><rect x="609" y="1052" width="7" height="6" rx="3" fill="#ff0000"/><rect x="607" y="1066" width="7" height="6" rx="3" fill="#ff0000"/><rect x="605" y="1081" width="7" height="6" rx="3" fill="#ff0000"/><rect x="603" y="1095" width="7" height="6" rx="3" fill="#ff0000"/><rect x="601" y="1109" width="7" height="6" rx="3" fill="#ff0000"/><rect x="599" y="1124" width="7" height="6" rx="3" fill="#b00000"/><rect x="597" y="1138" width="7" height="6" rx="3" fill="#ff0000"/><rect x="595" y="1152" width="7" height="6" rx="3" fill="#ff0000"/><rect x="593" y="1167" width="7" height="6" rx="3" fill="#ff0000"/><rect x="591" y="1181" width="7" height="6" rx="3" fill="#b00000"/><rect x="589" y="1195" width="7" height="6" rx="3" fill="#ff0000"/><rect x="587" y="1210" width="7" height="6" rx="3" fill="#ff0000"/><rect x="586" y="1224" width="7" height="6" rx="3" fill="#ff0000"/><rect x="584" y="1238" width="7" height="6" rx="3" fill="#ff0000"/><rect x="582" y="1253" width="7" height="6" rx="3" fill="#ff0000"/><rect x="580" y="1267" width="7" height="6" rx="3" fill="#ff0000"/><rect x="578" y="1281" width="7" height="6" rx="3" fill="#b00000"/><rect x="576" y="1296" width="7" height="6" rx="3" fill="#ff0000"/><rect x="574" y="1310" width="7" height="6" rx="3" fill="#ff0000"/><rect x="572" y="1324" width="7" height="6" rx="3" fill="#ff0000"/><rect x="654" y="994" width="7" height="6" rx="3" fill="#b00000"/><rect x="652" y="1009" width="7" height="6" rx="3" fill="#ff0000"/><rect x="650" y="1023" width="7" height="6" rx="3" fill="#ff0000"/><rect x="649" y="1038" width="7" height="6" rx="3" fill="#ff0000"/><rect x="647" y="1052" width="7" height="6" rx="3" fill="#ff0000"/><rect x="645" y="1066" width="7" height="6" rx="3" fill="#ff0000"/><rect x="643" y="1081" width="7" height="6" rx="3" fill="#ff0000"/><rect x="641" y="1095" width="7" height="6" rx="3" fill="#ff0000"/><rect x="640" y="1109" width="7" height="6" rx="3" fill="#ff0000"/><rect x="638" y="1124" width="7" height="6" rx="3" fill="#ff0000"/><rect x="636" y="1138" width="7" height="6" rx="3" fill="#ff0000"/><rect x="634" y="1152" width="7" height="6" rx="3" fill="#ff0000"/><rect x="632" y="1167" width="7" height="6" rx="3" fill="#ff0000"/><rect x="631" y="1181" width="7" height="6" rx="3" fill="#ff0000"/><rect x="629" y="1195" width="7" height="6" rx="3" fill="#ff0000"/><rect x="627" y="1210" width="7" height="6" rx="3" fill="#ff0000"/><rect x="625" y="1224" width="7" height="6" rx="3" fill="#ff0000"/><rect x="623" y="1238" width="7" height="6" rx="3" fill="#ff0000"/><rect x="622" y="1253" width="7" height="6" rx="3" fill="#b00000"/><rect x="688" y="994" width="7" height="6" rx="3" fill="#ff0000"/><rect x="686" y="1009" width="7" height="6" rx="3" fill="#ff0000"/><rect x="685" y="1023" width="7" height="6" rx="3" fill="#ff0000"/><rect x="683" y="1038" width="7" height="6" rx="3" fill="#ff0000"/><rect x="682" y="1052" width="7" height="6" rx="3" fill="#ff0000"/><rect x="680" y="1066" width="7" height="6" rx="3" fill="#ff0000"/><rect x="679" y="1081" width="7" height="6" rx="3" fill="#ff0000"/><rect x="677" y="1095" width="7" height="6" rx="3" fill="#ff0000"/><rect x="676" y="1109" width="7" height="6" rx="3" fill="#ff0000"/><rect x="674" y="1124" width="7" height="6" rx="3" fill="#ff0000"/><rect x="673" y="1138" width="7" height="6" rx="3" fill="#b00000"/><rect x="671" y="1152" width="7" height="6" rx="3" fill="#ff0000"/><rect x="670" y="1167" width="7" height="6" rx="3" fill="#ff0000"/><rect x="668" y="1181" width="7" height="6" rx="3" fill="#ff0000"/><rect x="667" y="1195" width="7" height="6" rx="3" fill="#ff0000"/><rect x="720" y="994" width="7" height="6" rx="3" fill="#ff0000"/><rect x="719" y="1009" width="7" height="6" rx="3" fill="#ff0000"/><rect x="719" y="1023" width="7" height="6" rx="3" fill="#ff0000"/><rect x="718" y="1038" width="7" height="6" rx="3" fill="#ff0000"/><rect x="717" y="1052" width="7" height="6" rx="3" fill="#ff0000"/><rect x="716" y="1066" width="7" height="6" rx="3" fill="#ff0000"/><rect x="715" y="1081" width="7" height="6" rx="3" fill="#ff0000"/><rect x="714" y="1095" width="7" height="6" rx="3" fill="#b00000"/><rect x="713" y="1109" width="7" height="6" rx="3" fill="#ff0000"/><rect x="712" y="1124" width="7" height="6" rx="3" fill="#ff0000"/><rect x="754" y="994" width="7" height="6" rx="3" fill="#ff0000"/><rect x="754" y="1009" width="7" height="6" rx="3" fill="#ff0000"/><rect x="754" y="1023" width="7" height="6" rx="3" fill="#ff0000"/><rect x="754" y="1038" width="7" height="6" rx="3" fill="#ff0000"/><rect x="754" y="1052" width="7" height="6" rx="3" fill="#ff0000"/><rect x="799" y="994" width="7" height="6" rx="3" fill="#ff0000"/><rect x="799" y="1009" width="7" height="6" rx="3" fill="#b00000"/><rect x="799" y="1023" width="7" height="6" rx="3" fill="#ff0000"/><rect x="799" y="1038" width="7" height="6" rx="3" fill="#ff0000"/><rect x="799" y="1052" width="7" height="6" rx="3" fill="#b00000"/><rect x="832" y="994" width="7" height="6" rx="3" fill="#b00000"/><rect x="833" y="1009" width="7" height="6" rx="3" fill="#ff0000"/><rect x="834" y="1023" width="7" height="6" rx="3" fill="#b00000"/><rect x="835" y="1038" width="7" height="6" rx="3" fill="#b00000"/><rect x="836" y="1052" width="7" height="6" rx="3" fill="#ff0000"/><rect x="836" y="1066" width="7" height="6" rx="3" fill="#ff0000"/><rect x="837" y="1081" width="7" height="6" rx="3" fill="#ff0000"/><rect x="838" y="1095" width="7" height="6" rx="3" fill="#ff0000"/><rect x="839" y="1109" width="7" height="6" rx="3" fill="#ff0000"/><rect x="840" y="1124" width="7" height="6" rx="3" fill="#ff0000"/><rect x="864" y="994" width="7" height="6" rx="3" fill="#ff0000"/><rect x="865" y="1009" width="7" height="6" rx="3" fill="#b00000"/><rect x="867" y="1023" width="7" height="6" rx="3" fill="#ff0000"/><rect x="868" y="1038" width="7" height="6" rx="3" fill="#ff0000"/><rect x="870" y="1052" width="7" height="6" rx="3" fill="#ff0000"/><rect x="872" y="1066" width="7" height="6" rx="3" fill="#ff0000"/><rect x="873" y="1081" width="7" height="6" rx="3" fill="#ff0000"/><rect x="875" y="1095" width="7" height="6" rx="3" fill="#ff0000"/><rect x="876" y="1109" width="7" height="6" rx="3" fill="#ff0000"/><rect x="878" y="1124" width="7" height="6" rx="3" fill="#ff0000"/><rect x="879" y="1138" width="7" height="6" rx="3" fill="#ff0000"/><rect x="881" y="1152" width="7" height="6" rx="3" fill="#ff0000"/><rect x="883" y="1167" width="7" height="6" rx="3" fill="#ff0000"/><rect x="884" y="1181" width="7" height="6" rx="3" fill="#ff0000"/><rect x="886" y="1195" width="7" height="6" rx="3" fill="#ff0000"/><rect x="898" y="994" width="7" height="6" rx="3" fill="#ff0000"/><rect x="900" y="1009" width="7" height="6" rx="3" fill="#b00000"/><rect x="902" y="1023" width="7" height="6" rx="3" fill="#ff0000"/><rect x="904" y="1038" width="7" height="6" rx="3" fill="#ff0000"/><rect x="906" y="1052" width="7" height="6" rx="3" fill="#ff0000"/><rect x="908" y="1066" width="7" height="6" rx="3" fill="#ff0000"/><rect x="909" y="1081" width="7" height="6" rx="3" fill="#ff0000"/><rect x="911" y="1095" width="7" height="6" rx="3" fill="#b00000"/><rect x="913" y="1109" width="7" height="6" rx="3" fill="#ff0000"/><rect x="915" y="1124" width="7" height="6" rx="3" fill="#ff0000"/><rect x="917" y="1138" width="7" height="6" rx="3" fill="#ff0000"/><rect x="919" y="1152" width="7" height="6" rx="3" fill="#ff0000"/><rect x="921" y="1167" width="7" height="6" rx="3" fill="#ff0000"/><rect x="923" y="1181" width="7" height="6" rx="3" fill="#ff0000"/><rect x="925" y="1195" width="7" height="6" rx="3" fill="#b00000"/><rect x="926" y="1210" width="7" height="6" rx="3" fill="#ff0000"/><rect x="928" y="1224" width="7" height="6" rx="3" fill="#ff0000"/><rect x="930" y="1238" width="7" height="6" rx="3" fill="#ff0000"/><rect x="932" y="1253" width="7" height="6" rx="3" fill="#ff0000"/><rect x="936" y="1009" width="7" height="6" rx="3" fill="#ff0000"/><rect x="938" y="1023" width="7" height="6" rx="3" fill="#ff0000"/><rect x="940" y="1038" width="7" height="6" rx="3" fill="#b00000"/><rect x="942" y="1052" width="7" height="6" rx="3" fill="#ff0000"/><rect x="944" y="1066" width="7" height="6" rx="3" fill="#ff0000"/><rect x="946" y="1081" width="7" height="6" rx="3" fill="#ff0000"/><rect x="948" y="1095" width="7" height="6" rx="3" fill="#ff0000"/><rect x="950" y="1109" width="7" height="6" rx="3" fill="#b00000"/><rect x="952" y="1124" width="7" height="6" rx="3" fill="#ff0000"/><rect x="954" y="1138" width="7" height="6" rx="3" fill="#b00000"/><rect x="956" y="1152" width="7" height="6" rx="3" fill="#ff0000"/><rect x="958" y="1167" width="7" height="6" rx="3" fill="#ff0000"/><rect x="960" y="1181" width="7" height="6" rx="3" fill="#ff0000"/><rect x="962" y="1195" width="7" height="6" rx="3" fill="#ff0000"/><rect x="964" y="1210" width="7" height="6" rx="3" fill="#ff0000"/><rect x="966" y="1224" width="7" height="6" rx="3" fill="#ff0000"/><rect x="968" y="1238" width="7" height="6" rx="3" fill="#ff0000"/><rect x="970" y="1253" width="7" height="6" rx="3" fill="#ff0000"/><rect x="972" y="1267" width="7" height="6" rx="3" fill="#ff0000"/><rect x="974" y="1281" width="7" height="6" rx="3" fill="#ff0000"/><rect x="976" y="1296" width="7" height="6" rx="3" fill="#ff0000"/><rect x="978" y="1310" width="7" height="6" rx="3" fill="#ff0000"/><rect x="980" y="1324" width="7" height="6" rx="3" fill="#b00000"/><rect x="978" y="1081" width="7" height="6" rx="3" fill="#ff0000"/><rect x="980" y="1095" width="7" height="6" rx="3" fill="#ff0000"/><rect x="982" y="1109" width="7" height="6" rx="3" fill="#b00000"/><rect x="985" y="1124" width="7" height="6" rx="3" fill="#ff0000"/><rect x="987" y="1138" width="7" height="6" rx="3" fill="#ff0000"/><rect x="989" y="1152" width="7" height="6" rx="3" fill="#ff0000"/><rect x="992" y="1167" width="7" height="6" rx="3" fill="#ff0000"/><rect x="994" y="1181" width="7" height="6" rx="3" fill="#ff0000"/><rect x="997" y="1195" width="7" height="6" rx="3" fill="#ff0000"/><rect x="999" y="1210" width="7" height="6" rx="3" fill="#ff0000"/><rect x="1001" y="1224" width="7" height="6" rx="3" fill="#ff0000"/><rect x="1004" y="1238" width="7" height="6" rx="3" fill="#ff0000"/><rect x="1006" y="1253" width="7" height="6" rx="3" fill="#ff0000"/><rect x="1008" y="1267" width="7" height="6" rx="3" fill="#ff0000"/><rect x="1011" y="1281" width="7" height="6" rx="3" fill="#b00000"/><rect x="1013" y="1296" width="7" height="6" rx="3" fill="#ff0000"/><rect x="1015" y="1310" width="7" height="6" rx="3" fill="#ff0000"/><rect x="1018" y="1324" width="7" height="6" rx="3" fill="#ff0000"/><rect x="1020" y="1339" width="7" height="6" rx="3" fill="#ff0000"/><rect x="1022" y="1353" width="7" height="6" rx="3" fill="#ff0000"/><rect x="1025" y="1368" width="7" height="6" rx="3" fill="#ff0000"/><rect x="1018" y="1152" width="7" height="6" rx="3" fill="#ff0000"/><rect x="1021" y="1167" width="7" height="6" rx="3" fill="#ff0000"/><rect x="1024" y="1181" width="7" height="6" rx="3" fill="#b00000"/><rect x="1026" y="1195" width="7" height="6" rx="3" fill="#ff0000"/><rect x="1029" y="1210" width="7" height="6" rx="3" fill="#ff0000"/><rect x="1032" y="1224" width="7" height="6" rx="3" fill="#ff0000"/><rect x="1034" y="1238" width="7" height="6" rx="3" fill="#ff0000"/><rect x="1037" y="1253" width="7" height="6" rx="3" fill="#ff0000"/><rect x="1040" y="1267" width="7" height="6" rx="3" fill="#ff0000"/><rect x="1042" y="1281" width="7" height="6" rx="3" fill="#ff0000"/><rect x="1045" y="1296" width="7" height="6" rx="3" fill="#ff0000"/><rect x="1048" y="1310" width="7" height="6" rx="3" fill="#ff0000"/><rect x="1050" y="1324" width="7" height="6" rx="3" fill="#ff0000"/><rect x="1053" y="1339" width="7" height="6" rx="3" fill="#ff0000"/><rect x="1056" y="1353" width="7" height="6" rx="3" fill="#ff0000"/><rect x="1058" y="1368" width="7" height="6" rx="3" fill="#ff0000"/><rect x="1059" y="1224" width="7" height="6" rx="3" fill="#ff0000"/><rect x="1062" y="1238" width="7" height="6" rx="3" fill="#ff0000"/><rect x="1065" y="1253" width="7" height="6" rx="3" fill="#b00000"/><rect x="1067" y="1267" width="7" height="6" rx="3" fill="#ff0000"/><rect x="1070" y="1281" width="7" height="6" rx="3" fill="#ff0000"/><rect x="1073" y="1296" width="7" height="6" rx="3" fill="#ff0000"/><rect x="1076" y="1310" width="7" height="6" rx="3" fill="#ff0000"/><rect x="1079" y="1324" width="7" height="6" rx="3" fill="#ff0000"/><rect x="1082" y="1339" width="7" height="6" rx="3" fill="#b00000"/><rect x="1085" y="1353" width="7" height="6" rx="3" fill="#ff0000"/><rect x="1088" y="1368" width="7" height="6" rx="3" fill="#ff0000"/><rect x="1092" y="1281" width="7" height="6" rx="3" fill="#ff0000"/><rect x="1096" y="1296" width="7" height="6" rx="3" fill="#ff0000"/><rect x="1099" y="1310" width="7" height="6" rx="3" fill="#ff0000"/><rect x="1102" y="1324" width="7" height="6" rx="3" fill="#ff0000"/><rect x="1105" y="1339" width="7" height="6" rx="3" fill="#ff0000"/><rect x="1109" y="1353" width="7" height="6" rx="3" fill="#ff0000"/><rect x="1112" y="1368" width="7" height="6" rx="3" fill="#ff0000"/><rect x="1127" y="1353" width="7" height="6" rx="3" fill="#ff0000"/><rect x="1130" y="1368" width="7" height="6" rx="3" fill="#ff0000"/></svg>
<div style="left:377.5px;top:1842px;width:43px;height:43px;border-radius:9px;background:#5a5a5a"></div>
<div style="left:448.5px;top:1842px;width:43px;height:43px;border-radius:9px;background:#5a5a5a"></div>
<div style="left:519.5px;top:1842px;width:43px;height:43px;border-radius:9px;background:#5a5a5a"></div>
<div style="left:590.5px;top:1842px;width:43px;height:43px;border-radius:9px;background:#5a5a5a"></div>
<div style="left:661.5px;top:1842px;width:43px;height:43px;border-radius:9px;background:#5a5a5a"></div>
<div style="left:732.5px;top:1842px;width:43px;height:43px;border-radius:9px;background:#5a5a5a"></div>
<div style="left:803.5px;top:1842px;width:43px;height:43px;border-radius:9px;background:#5a5a5a"></div>
<div style="left:874.5px;top:1842px;width:43px;height:43px;border-radius:9px;background:#5a5a5a"></div>
<svg style="left:590px;top:1848px" width="40" height="34"><path d="M6 18 L15 28 L34 5" stroke="#fff" stroke-width="5" fill="none" stroke-linecap="round" stroke-linejoin="round"/></svg>
<div style="left:364.5px;top:1885.0px;width:566.0px;height:67.0px;background:#3a3a3a;"></div>
<div style="left:364.4px;top:1885.0px;width:67.8px;height:67.0px;background:#ffffff;"></div>
<div style="left:435.2px;top:1885.0px;width:67.8px;height:67.0px;background:#0000ff;"></div>
<div style="left:506.1px;top:1885.0px;width:67.8px;height:67.0px;background:#0000ff;"></div>
<div style="left:576.9px;top:1885.0px;width:67.8px;height:67.0px;background:#ff0000;"></div>
<div style="left:647.8px;top:1885.0px;width:67.8px;height:67.0px;background:#ff0000;"></div>
<div style="left:718.6px;top:1885.0px;width:67.8px;height:67.0px;background:#00ff00;"></div>
<div style="left:789.5px;top:1885.0px;width:67.8px;height:67.0px;background:#00ff00;"></div>
<div style="left:860.3px;top:1885.0px;width:67.8px;height:67.0px;background:#ff00ff;"></div>
<div style="left:364.5px;top:1952.0px;width:566.0px;height:70.0px;background:#5f5f5f;"></div>
<svg style="left:376.5px;top:1965.0px" width="46" height="48" viewBox="0 0 44 46"><path d="M10 20 V12 A10 10 0 0 1 30 10" fill="none" stroke="#000" stroke-width="3.5"/><rect x="5" y="20" width="30" height="22" rx="5" fill="none" stroke="#000" stroke-width="3.5"/><circle cx="20" cy="29" r="3.5" fill="#000"/><path d="M18 30 L16.5 36 H23.5 L22 30 Z" fill="#000"/></svg>
<svg style="left:447.5px;top:1965.0px" width="46" height="48" viewBox="0 0 44 46"><path d="M10 20 V12 A10 10 0 0 1 30 10" fill="none" stroke="#000" stroke-width="3.5"/><rect x="5" y="20" width="30" height="22" rx="5" fill="none" stroke="#000" stroke-width="3.5"/><circle cx="20" cy="29" r="3.5" fill="#000"/><path d="M18 30 L16.5 36 H23.5 L22 30 Z" fill="#000"/></svg>
<svg style="left:518.5px;top:1965.0px" width="46" height="48" viewBox="0 0 44 46"><path d="M10 20 V12 A10 10 0 0 1 30 10" fill="none" stroke="#000" stroke-width="3.5"/><rect x="5" y="20" width="30" height="22" rx="5" fill="none" stroke="#000" stroke-width="3.5"/><circle cx="20" cy="29" r="3.5" fill="#000"/><path d="M18 30 L16.5 36 H23.5 L22 30 Z" fill="#000"/></svg>
<svg style="left:589.5px;top:1965.0px" width="46" height="48" viewBox="0 0 44 46"><path d="M10 20 V12 A10 10 0 0 1 30 10" fill="none" stroke="#000" stroke-width="3.5"/><rect x="5" y="20" width="30" height="22" rx="5" fill="none" stroke="#000" stroke-width="3.5"/><circle cx="20" cy="29" r="3.5" fill="#000"/><path d="M18 30 L16.5 36 H23.5 L22 30 Z" fill="#000"/></svg>
<svg style="left:660.5px;top:1965.0px" width="46" height="48" viewBox="0 0 44 46"><path d="M10 20 V12 A10 10 0 0 1 30 10" fill="none" stroke="#000" stroke-width="3.5"/><rect x="5" y="20" width="30" height="22" rx="5" fill="none" stroke="#000" stroke-width="3.5"/><circle cx="20" cy="29" r="3.5" fill="#000"/><path d="M18 30 L16.5 36 H23.5 L22 30 Z" fill="#000"/></svg>
<svg style="left:731.5px;top:1965.0px" width="46" height="48" viewBox="0 0 44 46"><path d="M10 20 V12 A10 10 0 0 1 30 10" fill="none" stroke="#000" stroke-width="3.5"/><rect x="5" y="20" width="30" height="22" rx="5" fill="none" stroke="#000" stroke-width="3.5"/><circle cx="20" cy="29" r="3.5" fill="#000"/><path d="M18 30 L16.5 36 H23.5 L22 30 Z" fill="#000"/></svg>
<svg style="left:802.5px;top:1965.0px" width="46" height="48" viewBox="0 0 44 46"><path d="M10 20 V12 A10 10 0 0 1 30 10" fill="none" stroke="#000" stroke-width="3.5"/><rect x="5" y="20" width="30" height="22" rx="5" fill="none" stroke="#000" stroke-width="3.5"/><circle cx="20" cy="29" r="3.5" fill="#000"/><path d="M18 30 L16.5 36 H23.5 L22 30 Z" fill="#000"/></svg>
<svg style="left:873.5px;top:1965.0px" width="46" height="48" viewBox="0 0 44 46"><path d="M10 20 V12 A10 10 0 0 1 30 10" fill="none" stroke="#000" stroke-width="3.5"/><rect x="5" y="20" width="30" height="22" rx="5" fill="none" stroke="#000" stroke-width="3.5"/><circle cx="20" cy="29" r="3.5" fill="#000"/><path d="M18 30 L16.5 36 H23.5 L22 30 Z" fill="#000"/></svg>
<div style="left:377.5px;top:2024.0px;width:42.0px;height:41.0px;background:#ffffff;"></div>
<div style="left:448.5px;top:2024.0px;width:42.0px;height:41.0px;background:#ffffff;"></div>
<div style="left:519.5px;top:2024.0px;width:42.0px;height:41.0px;background:#ffffff;"></div>
<div style="left:590.5px;top:2024.0px;width:42.0px;height:41.0px;background:#ffffff;"></div>
<div style="left:661.5px;top:2024.0px;width:42.0px;height:41.0px;background:#ffffff;"></div>
<div style="left:732.5px;top:2024.0px;width:42.0px;height:41.0px;background:#ffffff;"></div>
<div style="left:803.5px;top:2024.0px;width:42.0px;height:41.0px;background:#ffffff;"></div>
<div style="left:874.5px;top:2024.0px;width:42.0px;height:41.0px;background:#ffffff;"></div>
<div style="left:965px;top:1847px;width:82px;height:50px;background:linear-gradient(180deg,#d8d8d8,#bcbcbc);border-radius:6px;border:1px solid #888;box-sizing:border-box"></div>
<svg style="left:972px;top:1851px" width="68" height="42"><path d="M10 20 C12 6 52 4 58 16" stroke="#000" stroke-width="5" fill="none"/><path d="M62 8 L60 22 L48 16 Z" fill="#000"/><path d="M58 22 C56 36 16 38 10 26" stroke="#000" stroke-width="5" fill="none"/><path d="M6 34 L8 20 L20 26 Z" fill="#000"/></svg>
<div style="left:965px;top:1910px;width:82px;height:52px;background:linear-gradient(180deg,#d8d8d8,#bcbcbc);border-radius:6px;border:1px solid #888;box-sizing:border-box"></div>
<svg style="left:972px;top:1918px" width="68" height="36"><path d="M62 18 H14" stroke="#000" stroke-width="6"/><path d="M4 18 L20 7 L20 29 Z" fill="#000"/></svg>
<div style="left:965px;top:1974px;width:82px;height:53px;background:linear-gradient(180deg,#d8d8d8,#bcbcbc);border-radius:6px;border:1px solid #888;box-sizing:border-box"></div>
<svg style="left:972px;top:1982px" width="68" height="36"><path d="M6 18 H54" stroke="#000" stroke-width="6"/><path d="M64 18 L48 7 L48 29 Z" fill="#000"/></svg>
<div style="left:1068px;top:1851px;width:308px;height:69px;background:#222;border:2.5px solid #6a6a6a;box-sizing:border-box"></div>
<div style="left:1388px;top:1854px;width:64px;height:64px;background:#fff;border-radius:12px"></div>
<svg style="left:1404px;top:1870px" width="32" height="32"><path d="M8 12 L16 20 L24 12" stroke="#111" stroke-width="3.5" fill="none" stroke-linecap="round" stroke-linejoin="round"/></svg>
<div style="left:1481px;top:1851px;width:101px;height:63px;background:#5c5c5c;border-radius:12px"></div>
<svg style="left:1515px;top:1866px" width="34" height="34"><path d="M6 8 H28 M6 17 H28 M6 26 H28" stroke="#fff" stroke-width="4"/></svg>
<div style="left:180px;top:2090px;width:45px;height:44px;border-radius:9px;background:#5a5a5a"></div>
<svg style="left:190px;top:2094px" width="30" height="36"><path d="M4 20 L10 28 L24 6" stroke="#fff" stroke-width="4.5" fill="none" stroke-linecap="round"/></svg>
<div class="t" style="left:246.0px;top:2090.9px;font-size:43.8px;line-height:43.8px;color:#e8e8e8;font-weight:400;">Reset panel when changing effects</div>
<div class="t" style="right:3977.0px;top:2181.2px;font-size:43.5px;line-height:43.5px;color:#e8e8e8;font-weight:400;text-align:right;">Chroma Key</div>
<div style="left:471.0px;top:2197.0px;width:927.0px;height:10px;border-radius:5px;background:#3b3b3b"></div>
<div style="left:439.0px;top:2170.0px;width:64px;height:64px;border-radius:32px;background:#4e4e4e"></div>
<div style="left:1412px;top:2170px;width:301px;height:59px;background:#4a4a4a;border-radius:14px"></div>
<div style="left:1466.0px;top:2178.5px;width:193.0px;height:41.5px;background:#2a2a2a;"></div>
<div style="left:1728px;top:2178px;width:45px;height:47px;background:#4e4e4e;border-radius:8px"></div>
<div class="t" style="right:4044.0px;top:2290.2px;font-size:43.5px;line-height:43.5px;color:#e8e8e8;font-weight:400;text-align:right;">Sparkles</div>
<div style="left:464.0px;top:2305.0px;width:823.0px;height:10px;border-radius:5px;background:#454545"></div>
<div style="left:432.0px;top:2278.0px;width:64px;height:64px;border-radius:32px;background:#9b9b9b"></div>
<div style="left:1296.7px;top:2272.0px;width:76px;height:76px;background:#fff;border:1px solid #999;box-sizing:border-box"></div>
<svg style="left:1296.7px;top:2272.0px" width="76" height="76" viewBox="0 0 76 76"><defs><linearGradient id="ga" x1="0" y1="0" x2="1" y2="1"><stop offset="0" stop-color="#d8f060"/><stop offset="1" stop-color="#5a9a10"/></linearGradient></defs><path d="M22 62 C8 48 12 26 34 22 L40 22 L40 12 L62 30 L40 48 L40 36 L34 36 C22 38 18 50 22 62 Z" fill="url(#ga)" stroke="#3a6a08" stroke-width="1.5"/></svg>
<div style="left:1502.0px;top:2275.8px;width:123.0px;height:67.2px;background:#393939;border:2px solid #4c4c4c;box-sizing:border-box"></div>
<div class="t" style="left:1513.0px;top:2288.0px;font-size:43px;line-height:43px;color:#ececec;font-weight:400;">0</div>
<svg style="left:1729.0px;top:2289.0px" width="44" height="46" viewBox="0 0 44 46"><rect width="44" height="46" fill="#464646"/><path d="M10 20 V12 A10 10 0 0 1 30 10" fill="none" stroke="#111" stroke-width="3.5"/><rect x="5" y="20" width="30" height="22" rx="5" fill="none" stroke="#111" stroke-width="3.5"/><circle cx="20" cy="29" r="3.5" fill="#111"/><path d="M18 30 L16.5 36 H23.5 L22 30 Z" fill="#111"/></svg>
<div style="left:438.7px;top:2384px;width:45px;height:44px;border-radius:9px;background:#555"></div>
<div class="t" style="left:503.6px;top:2384.9px;font-size:43.8px;line-height:43.8px;color:#e8e8e8;font-weight:400;">Sparkles reflect music</div>
<div style="left:1412px;top:2375px;width:301px;height:61px;background:#5c5c5c;border-radius:14px"></div>
<div style="left:1466.0px;top:2384.6px;width:193.0px;height:41.0px;background:#ffffff;"></div>
<svg style="left:1729.0px;top:2380.0px" width="44" height="46" viewBox="0 0 44 46"><rect width="44" height="46" fill="#464646"/><path d="M10 20 V12 A10 10 0 0 1 30 10" fill="none" stroke="#111" stroke-width="3.5"/><rect x="5" y="20" width="30" height="22" rx="5" fill="none" stroke="#111" stroke-width="3.5"/><circle cx="20" cy="29" r="3.5" fill="#111"/><path d="M18 30 L16.5 36 H23.5 L22 30 Z" fill="#111"/></svg>
<div class="t" style="right:4004.0px;top:2473.2px;font-size:43.5px;line-height:43.5px;color:#e8e8e8;font-weight:400;text-align:right;">Brightness</div>
<div style="left:431.5px;top:2489.0px;width:868.5px;height:10px;border-radius:5px;background:#454545"></div>
<div style="left:431.5px;top:2489.0px;width:248.5px;height:10px;border-radius:5px;background:#555555"></div>
<div style="left:633.8px;top:2462.0px;width:64px;height:64px;border-radius:32px;background:#a0a0a0"></div>
<div style="left:1302.5px;top:2456.7px;width:76px;height:76px;background:#fff;border:1px solid #999;box-sizing:border-box"></div>
<svg style="left:1302.5px;top:2456.7px" width="76" height="76" viewBox="0 0 76 76"><defs><linearGradient id="ga" x1="0" y1="0" x2="1" y2="1"><stop offset="0" stop-color="#d8f060"/><stop offset="1" stop-color="#5a9a10"/></linearGradient></defs><path d="M22 62 C8 48 12 26 34 22 L40 22 L40 12 L62 30 L40 48 L40 36 L34 36 C22 38 18 50 22 62 Z" fill="url(#ga)" stroke="#3a6a08" stroke-width="1.5"/></svg>
<div style="left:1502.0px;top:2459.6px;width:123.0px;height:65.4px;background:#393939;border:2px solid #4c4c4c;box-sizing:border-box"></div>
<div class="t" style="left:1513.0px;top:2470.9px;font-size:43px;line-height:43px;color:#ececec;font-weight:400;">100</div>
<svg style="left:1729.0px;top:2470.0px" width="44" height="46" viewBox="0 0 44 46"><rect width="44" height="46" fill="#464646"/><path d="M10 20 V12 A10 10 0 0 1 30 10" fill="none" stroke="#111" stroke-width="3.5"/><rect x="5" y="20" width="30" height="22" rx="5" fill="none" stroke="#111" stroke-width="3.5"/><circle cx="20" cy="29" r="3.5" fill="#111"/><path d="M18 30 L16.5 36 H23.5 L22 30 Z" fill="#111"/></svg>
<div class="t" style="right:4044.0px;top:2570.2px;font-size:43.5px;line-height:43.5px;color:#e8e8e8;font-weight:400;text-align:right;">Contrast</div>
<div style="left:431.5px;top:2586.5px;width:973.5px;height:10px;border-radius:5px;background:#454545"></div>
<div style="left:432.0px;top:2559.5px;width:64px;height:64px;border-radius:32px;background:#a0a0a0"></div>
<div style="left:1502.0px;top:2557.0px;width:123.0px;height:65.5px;background:#393939;border:2px solid #4c4c4c;box-sizing:border-box"></div>
<div class="t" style="left:1513.0px;top:2568.4px;font-size:43px;line-height:43px;color:#ececec;font-weight:400;">0</div>
<svg style="left:1729.0px;top:2568.0px" width="44" height="46" viewBox="0 0 44 46"><rect width="44" height="46" fill="#464646"/><path d="M10 20 V12 A10 10 0 0 1 30 10" fill="none" stroke="#111" stroke-width="3.5"/><rect x="5" y="20" width="30" height="22" rx="5" fill="none" stroke="#111" stroke-width="3.5"/><circle cx="20" cy="29" r="3.5" fill="#111"/><path d="M18 30 L16.5 36 H23.5 L22 30 Z" fill="#111"/></svg>
<div style="left:447px;top:2655px;width:46px;height:46px;border-radius:9px;background:#555"></div>
<div class="t" style="left:514.4px;top:2658.2px;font-size:43px;line-height:43px;color:#e8e8e8;font-weight:400;">Brightness Level</div>
<div class="t" style="right:3990.0px;top:2744.2px;font-size:43.5px;line-height:43.5px;color:#e8e8e8;font-weight:400;text-align:right;">Adjustment</div>
<div class="t" style="right:4134.0px;top:2828.7px;font-size:43.5px;line-height:43.5px;color:#e8e8e8;font-weight:400;text-align:right;">Hue</div>
<div style="left:417.0px;top:2844.0px;width:1114.0px;height:10px;border-radius:5px;background:#555555"></div>
<div style="left:942.4px;top:2817.0px;width:64px;height:64px;border-radius:32px;background:#a0a0a0"></div>
<div style="left:1534.6px;top:2810.5px;width:76px;height:76px;background:#fff;border:1px solid #999;box-sizing:border-box"></div>
<svg style="left:1534.6px;top:2810.5px" width="76" height="76" viewBox="0 0 76 76"><defs><linearGradient id="ga" x1="0" y1="0" x2="1" y2="1"><stop offset="0" stop-color="#d8f060"/><stop offset="1" stop-color="#5a9a10"/></linearGradient></defs><path d="M22 62 C8 48 12 26 34 22 L40 22 L40 12 L62 30 L40 48 L40 36 L34 36 C22 38 18 50 22 62 Z" fill="url(#ga)" stroke="#3a6a08" stroke-width="1.5"/></svg>
<div style="left:1647.8px;top:2815.0px;width:121.2px;height:65.0px;background:#393939;border:2px solid #4c4c4c;box-sizing:border-box"></div>
<div class="t" style="left:1658.8px;top:2826.1px;font-size:43px;line-height:43px;color:#ececec;font-weight:400;">0</div>
<div class="t" style="right:4012.0px;top:2931.2px;font-size:43.5px;line-height:43.5px;color:#e8e8e8;font-weight:400;text-align:right;">Saturation</div>
<div style="left:417.0px;top:2947.0px;width:1114.0px;height:10px;border-radius:5px;background:#555555"></div>
<div style="left:942.4px;top:2920.0px;width:64px;height:64px;border-radius:32px;background:#a0a0a0"></div>
<div style="left:1534.6px;top:2913.5px;width:76px;height:76px;background:#fff;border:1px solid #999;box-sizing:border-box"></div>
<svg style="left:1534.6px;top:2913.5px" width="76" height="76" viewBox="0 0 76 76"><defs><linearGradient id="ga" x1="0" y1="0" x2="1" y2="1"><stop offset="0" stop-color="#d8f060"/><stop offset="1" stop-color="#5a9a10"/></linearGradient></defs><path d="M22 62 C8 48 12 26 34 22 L40 22 L40 12 L62 30 L40 48 L40 36 L34 36 C22 38 18 50 22 62 Z" fill="url(#ga)" stroke="#3a6a08" stroke-width="1.5"/></svg>
<div style="left:1647.8px;top:2918.0px;width:121.2px;height:65.0px;background:#393939;border:2px solid #4c4c4c;box-sizing:border-box"></div>
<div class="t" style="left:1658.8px;top:2929.1px;font-size:43px;line-height:43px;color:#ececec;font-weight:400;">0</div>
<div style="left:1815.0px;top:266.0px;width:2385.0px;height:344.0px;background:#333333;"></div>
<div class="t" style="left:1826.0px;top:286.6px;font-size:43px;line-height:43px;color:#e8e8e8;font-weight:400;">View:</div>
<div style="left:1815px;top:332px;width:507px;height:64px;background:#646464;border-radius:16px"></div>
<div class="t" style="left:1842.0px;top:341.2px;font-size:43.5px;line-height:43.5px;color:#ececec;font-weight:400;">Master View</div>
<svg style="left:2278px;top:344px" width="26" height="42"><path d="M4 15 L13 6 L22 15 M4 27 L13 36 L22 27" stroke="#eee" stroke-width="3.5" fill="none" stroke-linecap="round" stroke-linejoin="round"/></svg>
<div class="t" style="left:1834.0px;top:429.5px;font-size:45.5px;line-height:45.5px;color:#ececec;font-weight:400;">Time: 2:17.275</div>
<div style="left:2324.0px;top:266.0px;width:1876.0px;height:102.0px;background:#303030;"></div>
<div style="left:1813.0px;top:264.0px;width:2387.0px;height:7.0px;background:#242424;"></div>
<div style="left:2324.0px;top:271.0px;width:1876.0px;height:3.0px;background:#7a7a7a;"></div>
<div style="left:2322.0px;top:271.0px;width:3.0px;height:97.0px;background:#7a7a7a;"></div>
<div class="t" style="left:2328.0px;top:291.4px;font-size:25.5px;line-height:25.5px;color:#e4e4e4;font-weight:400;-webkit-text-stroke:0.6px #e4e4e4;">2:12.500</div>
<div class="t" style="left:2650.0px;top:291.4px;font-size:25.5px;line-height:25.5px;color:#e4e4e4;font-weight:400;-webkit-text-stroke:0.6px #e4e4e4;">2:15.000</div>
<div class="t" style="left:2975.0px;top:291.4px;font-size:25.5px;line-height:25.5px;color:#e4e4e4;font-weight:400;-webkit-text-stroke:0.6px #e4e4e4;">2:17.500</div>
<div class="t" style="left:3295.0px;top:291.4px;font-size:25.5px;line-height:25.5px;color:#e4e4e4;font-weight:400;-webkit-text-stroke:0.6px #e4e4e4;">2:20.000</div>
<div class="t" style="left:3617.0px;top:291.4px;font-size:25.5px;line-height:25.5px;color:#e4e4e4;font-weight:400;-webkit-text-stroke:0.6px #e4e4e4;">2:22.500</div>
<div class="t" style="left:3939.0px;top:291.4px;font-size:25.5px;line-height:25.5px;color:#e4e4e4;font-weight:400;-webkit-text-stroke:0.6px #e4e4e4;">2:25.000</div>
<div style="left:2379.1px;top:335.0px;width:3.0px;height:33.0px;background:#9a9a9a;"></div>
<div style="left:2540.3px;top:335.0px;width:3.0px;height:33.0px;background:#9a9a9a;"></div>
<div style="left:2701.5px;top:335.0px;width:3.0px;height:33.0px;background:#9a9a9a;"></div>
<div style="left:2861.5px;top:335.0px;width:3.0px;height:33.0px;background:#9a9a9a;"></div>
<div style="left:3023.1px;top:335.0px;width:3.0px;height:33.0px;background:#9a9a9a;"></div>
<div style="left:3184.3px;top:335.0px;width:3.0px;height:33.0px;background:#9a9a9a;"></div>
<div style="left:3345.3px;top:335.0px;width:3.0px;height:33.0px;background:#9a9a9a;"></div>
<div style="left:3506.5px;top:335.0px;width:3.0px;height:33.0px;background:#9a9a9a;"></div>
<div style="left:3668.0px;top:335.0px;width:3.0px;height:33.0px;background:#9a9a9a;"></div>
<div style="left:3829.0px;top:335.0px;width:3.0px;height:33.0px;background:#9a9a9a;"></div>
<div style="left:3990.1px;top:335.0px;width:3.0px;height:33.0px;background:#9a9a9a;"></div>
<div style="left:4151.5px;top:335.0px;width:3.0px;height:33.0px;background:#9a9a9a;"></div>
<svg style="left:2324px;top:368px" width="1876" height="240"><rect width="1876" height="240" fill="#d5d1ca"/><polygon points="0.0,37 2.7,49 5.4,48 8.1,47 10.8,51 13.5,48 16.2,51 18.9,57 21.6,51 24.3,49 27.0,48 29.7,51 32.4,60 35.1,60 37.8,63 40.5,61 43.2,59 45.9,55 48.6,51 51.3,50 54.0,47 56.7,45 59.4,40 62.1,44 64.8,44 67.5,45 70.2,41 72.9,45 75.6,35 78.3,32 81.0,35 83.7,44 86.4,50 89.1,45 91.8,41 94.5,43 97.2,43 99.9,41 102.6,42 105.3,46 108.0,42 110.7,50 113.4,41 116.1,40 118.8,39 121.5,44 124.2,45 126.9,37 129.6,39 132.3,37 135.0,40 137.7,35 140.4,43 143.1,37 145.8,33 148.5,41 151.2,32 153.9,35 156.6,39 159.3,32 162.0,36 164.7,39 167.4,38 170.1,39 172.8,42 175.5,43 178.2,45 180.9,40 183.6,42 186.3,33 189.0,31 191.7,38 194.4,35 197.1,27 199.8,27 202.5,35 205.2,37 207.9,40 210.6,35 213.3,36 216.0,35 218.7,38 221.4,38 224.1,33 226.8,43 229.5,36 232.2,41 234.9,47 237.6,46 240.3,49 243.0,44 245.7,47 248.4,43 251.1,33 253.8,38 256.5,36 259.2,42 261.9,34 264.6,43 267.3,38 270.0,38 272.7,40 275.4,37 278.1,41 280.8,44 283.5,41 286.2,44 288.9,39 291.6,50 294.3,44 297.0,49 299.7,50 302.4,51 305.1,47 307.8,54 310.5,47 313.2,56 315.9,62 318.6,55 321.3,65 324.0,67 326.7,71 329.4,68 332.1,68 334.8,65 337.5,76 340.2,70 342.9,68 345.6,69 348.3,73 351.0,65 353.7,66 356.4,59 359.1,61 361.8,65 364.5,59 367.2,62 369.9,63 372.6,68 375.3,63 378.0,69 380.7,72 383.4,71 386.1,74 388.8,69 391.5,72 394.2,71 396.9,61 399.6,68 402.3,64 405.0,62 407.7,66 410.4,66 413.1,67 415.8,66 418.5,68 421.2,64 423.9,57 426.6,64 429.3,58 432.0,60 434.7,63 437.4,58 440.1,59 442.8,59 445.5,56 448.2,59 450.9,50 453.6,60 456.3,52 459.0,59 461.7,57 464.4,56 467.1,49 469.8,55 472.5,58 475.2,57 477.9,52 480.6,64 483.3,63 486.0,54 488.7,63 491.4,60 494.1,58 496.8,60 499.5,58 502.2,55 504.9,66 507.6,68 510.3,65 513.0,68 515.7,64 518.4,63 521.1,66 523.8,67 526.5,70 529.2,62 531.9,62 534.6,63 537.3,63 540.0,60 542.7,60 545.4,55 548.1,58 550.8,57 553.5,48 556.2,45 558.9,50 561.6,53 564.3,47 567.0,53 569.7,54 572.4,51 575.1,52 577.8,53 580.5,45 583.2,45 585.9,51 588.6,48 591.3,50 594.0,52 596.7,49 599.4,54 602.1,55 604.8,51 607.5,54 610.2,62 612.9,62 615.6,59 618.3,59 621.0,69 623.7,70 626.4,62 629.1,57 631.8,55 634.5,63 637.2,53 639.9,59 642.6,61 645.3,52 648.0,54 650.7,54 653.4,44 656.1,48 658.8,51 661.5,49 664.2,48 666.9,41 669.6,36 672.3,39 675.0,34 677.7,35 680.4,39 683.1,32 685.8,32 688.5,31 691.2,28 693.9,32 696.6,33 699.3,36 702.0,40 704.7,42 707.4,41 710.1,43 712.8,48 715.5,43 718.2,34 720.9,36 723.6,32 726.3,36 729.0,31 731.7,32 734.4,35 737.1,28 739.8,26 742.5,27 745.2,23 747.9,20 750.6,25 753.3,27 756.0,34 758.7,34 761.4,28 764.1,27 766.8,36 769.5,36 772.2,33 774.9,41 777.6,39 780.3,36 783.0,45 785.7,41 788.4,40 791.1,35 793.8,37 796.5,38 799.2,40 801.9,34 804.6,33 807.3,34 810.0,42 812.7,43 815.4,52 818.1,44 820.8,52 823.5,42 826.2,48 828.9,51 831.6,52 834.3,44 837.0,48 839.7,46 842.4,50 845.1,54 847.8,57 850.5,50 853.2,52 855.9,55 858.6,65 861.3,59 864.0,64 866.7,65 869.4,53 872.1,57 874.8,57 877.5,64 880.2,57 882.9,63 885.6,51 888.3,62 891.0,58 893.7,60 896.4,64 899.1,61 901.8,60 904.5,59 907.2,60 909.9,69 912.6,70 915.3,64 918.0,58 920.7,57 923.4,65 926.1,63 928.8,66 931.5,67 934.2,62 936.9,66 939.6,60 942.3,65 945.0,56 947.7,63 950.4,57 953.1,65 955.8,67 958.5,63 961.2,60 963.9,54 966.6,58 969.3,64 972.0,60 974.7,61 977.4,59 980.1,59 982.8,63 985.5,67 988.2,60 990.9,63 993.6,58 996.3,64 999.0,65 1001.7,61 1004.4,66 1007.1,59 1009.8,56 1012.5,63 1015.2,63 1017.9,62 1020.6,65 1023.3,55 1026.0,54 1028.7,59 1031.4,53 1034.1,57 1036.8,52 1039.5,56 1042.2,58 1044.9,59 1047.6,59 1050.3,54 1053.0,59 1055.7,61 1058.4,61 1061.1,71 1063.8,66 1066.5,64 1069.2,57 1071.9,58 1074.6,54 1077.3,57 1080.0,60 1082.7,57 1085.4,60 1088.1,57 1090.8,60 1093.5,59 1096.2,60 1098.9,49 1101.6,54 1104.3,60 1107.0,69 1109.7,63 1112.4,69 1115.1,59 1117.8,63 1120.5,62 1123.2,61 1125.9,65 1128.6,69 1131.3,73 1134.0,67 1136.7,67 1139.4,67 1142.1,63 1144.8,58 1147.5,54 1150.2,63 1152.9,54 1155.6,56 1158.3,58 1161.0,56 1163.7,53 1166.4,54 1169.1,53 1171.8,52 1174.5,52 1177.2,49 1179.9,52 1182.6,51 1185.3,55 1188.0,53 1190.7,52 1193.4,43 1196.1,48 1198.8,43 1201.5,41 1204.2,47 1206.9,50 1209.6,47 1212.3,46 1215.0,44 1217.7,39 1220.4,41 1223.1,34 1225.8,34 1228.5,33 1231.2,34 1233.9,39 1236.6,40 1239.3,36 1242.0,29 1244.7,28 1247.4,29 1250.1,40 1252.8,34 1255.5,33 1258.2,38 1260.9,36 1263.6,35 1266.3,31 1269.0,38 1271.7,33 1274.4,39 1277.1,40 1279.8,37 1282.5,42 1285.2,36 1287.9,37 1290.6,41 1293.3,36 1296.0,36 1298.7,41 1301.4,37 1304.1,37 1306.8,33 1309.5,32 1312.2,40 1314.9,44 1317.6,49 1320.3,48 1323.0,45 1325.7,50 1328.4,52 1331.1,43 1333.8,52 1336.5,57 1339.2,47 1341.9,50 1344.6,44 1347.3,52 1350.0,54 1352.7,55 1355.4,51 1358.1,57 1360.8,51 1363.5,59 1366.2,55 1368.9,54 1371.6,61 1374.3,58 1377.0,63 1379.7,58 1382.4,56 1385.1,56 1387.8,48 1390.5,44 1393.2,50 1395.9,54 1398.6,49 1401.3,41 1404.0,42 1406.7,42 1409.4,46 1412.1,44 1414.8,46 1417.5,55 1420.2,49 1422.9,55 1425.6,56 1428.3,52 1431.0,48 1433.7,46 1436.4,44 1439.1,45 1441.8,48 1444.5,51 1447.2,55 1449.9,51 1452.6,56 1455.3,55 1458.0,53 1460.7,45 1463.4,49 1466.1,46 1468.8,52 1471.5,45 1474.2,44 1476.9,48 1479.6,49 1482.3,51 1485.0,50 1487.7,47 1490.4,50 1493.1,45 1495.8,42 1498.5,44 1501.2,45 1503.9,50 1506.6,43 1509.3,44 1512.0,45 1514.7,40 1517.4,43 1520.1,40 1522.8,53 1525.5,43 1528.2,47 1530.9,45 1533.6,45 1536.3,50 1539.0,43 1541.7,54 1544.4,54 1547.1,57 1549.8,53 1552.5,53 1555.2,63 1557.9,58 1560.6,57 1563.3,56 1566.0,51 1568.7,56 1571.4,52 1574.1,49 1576.8,58 1579.5,60 1582.2,51 1584.9,60 1587.6,57 1590.3,57 1593.0,55 1595.7,57 1598.4,60 1601.1,67 1603.8,68 1606.5,65 1609.2,74 1611.9,79 1614.6,83 1617.3,73 1620.0,79 1622.7,71 1625.4,78 1628.1,76 1630.8,78 1633.5,82 1636.2,76 1638.9,81 1641.6,88 1644.3,82 1647.0,87 1649.7,81 1652.4,85 1655.1,85 1657.8,86 1660.5,76 1663.2,85 1665.9,79 1668.6,89 1671.3,85 1674.0,75 1676.7,71 1679.4,74 1682.1,76 1684.8,69 1687.5,76 1690.2,72 1692.9,79 1695.6,70 1698.3,65 1701.0,67 1703.7,75 1706.4,73 1709.1,71 1711.8,71 1714.5,67 1717.2,76 1719.9,74 1722.6,72 1725.3,63 1728.0,66 1730.7,58 1733.4,56 1736.1,50 1738.8,52 1741.5,45 1744.2,43 1746.9,45 1749.6,44 1752.3,50 1755.0,43 1757.7,45 1760.4,41 1763.1,43 1765.8,44 1768.5,45 1771.2,37 1773.9,38 1776.6,42 1779.3,42 1782.0,42 1784.7,41 1787.4,39 1790.1,40 1792.8,33 1795.5,32 1798.2,34 1800.9,38 1803.6,33 1806.3,32 1809.0,31 1811.7,29 1814.4,34 1817.1,33 1819.8,34 1822.5,31 1825.2,34 1827.9,30 1830.6,28 1833.3,35 1836.0,34 1838.7,36 1841.4,34 1844.1,29 1846.8,31 1849.5,26 1852.2,30 1854.9,28 1857.6,33 1860.3,37 1863.0,26 1865.7,35 1868.4,33 1871.1,38 1873.8,46 1876.5,40 1876.5,178 1873.8,173 1871.1,177 1868.4,173 1865.7,178 1863.0,187 1860.3,192 1857.6,183 1854.9,190 1852.2,189 1849.5,192 1846.8,194 1844.1,185 1841.4,186 1838.7,184 1836.0,197 1833.3,193 1830.6,188 1827.9,188 1825.2,192 1822.5,195 1819.8,193 1817.1,192 1814.4,191 1811.7,196 1809.0,193 1806.3,196 1803.6,199 1800.9,205 1798.2,204 1795.5,214 1792.8,211 1790.1,212 1787.4,218 1784.7,208 1782.0,207 1779.3,200 1776.6,202 1773.9,201 1771.2,205 1768.5,206 1765.8,201 1763.1,204 1760.4,194 1757.7,198 1755.0,201 1752.3,196 1749.6,201 1746.9,203 1744.2,204 1741.5,206 1738.8,196 1736.1,201 1733.4,196 1730.7,192 1728.0,197 1725.3,189 1722.6,184 1719.9,185 1717.2,179 1714.5,188 1711.8,186 1709.1,180 1706.4,183 1703.7,190 1701.0,186 1698.3,181 1695.6,188 1692.9,187 1690.2,190 1687.5,187 1684.8,186 1682.1,184 1679.4,188 1676.7,181 1674.0,183 1671.3,181 1668.6,183 1665.9,181 1663.2,188 1660.5,188 1657.8,184 1655.1,187 1652.4,187 1649.7,187 1647.0,183 1644.3,182 1641.6,181 1638.9,187 1636.2,188 1633.5,186 1630.8,183 1628.1,183 1625.4,191 1622.7,193 1620.0,195 1617.3,198 1614.6,191 1611.9,188 1609.2,193 1606.5,194 1603.8,195 1601.1,195 1598.4,197 1595.7,201 1593.0,195 1590.3,194 1587.6,190 1584.9,196 1582.2,187 1579.5,192 1576.8,189 1574.1,189 1571.4,191 1568.7,191 1566.0,186 1563.3,192 1560.6,187 1557.9,189 1555.2,191 1552.5,192 1549.8,195 1547.1,194 1544.4,194 1541.7,195 1539.0,189 1536.3,195 1533.6,181 1530.9,187 1528.2,184 1525.5,179 1522.8,186 1520.1,185 1517.4,182 1514.7,186 1512.0,187 1509.3,184 1506.6,188 1503.9,187 1501.2,188 1498.5,192 1495.8,189 1493.1,198 1490.4,195 1487.7,193 1485.0,200 1482.3,195 1479.6,200 1476.9,193 1474.2,188 1471.5,190 1468.8,185 1466.1,184 1463.4,185 1460.7,191 1458.0,191 1455.3,187 1452.6,183 1449.9,184 1447.2,183 1444.5,183 1441.8,184 1439.1,182 1436.4,180 1433.7,186 1431.0,175 1428.3,177 1425.6,174 1422.9,176 1420.2,178 1417.5,186 1414.8,176 1412.1,180 1409.4,176 1406.7,169 1404.0,167 1401.3,172 1398.6,167 1395.9,162 1393.2,175 1390.5,174 1387.8,175 1385.1,172 1382.4,180 1379.7,184 1377.0,182 1374.3,182 1371.6,182 1368.9,181 1366.2,179 1363.5,184 1360.8,183 1358.1,190 1355.4,186 1352.7,188 1350.0,178 1347.3,177 1344.6,184 1341.9,183 1339.2,182 1336.5,181 1333.8,179 1331.1,182 1328.4,184 1325.7,193 1323.0,187 1320.3,185 1317.6,190 1314.9,192 1312.2,188 1309.5,193 1306.8,195 1304.1,195 1301.4,189 1298.7,191 1296.0,194 1293.3,197 1290.6,194 1287.9,184 1285.2,190 1282.5,185 1279.8,187 1277.1,179 1274.4,188 1271.7,184 1269.0,184 1266.3,183 1263.6,188 1260.9,190 1258.2,186 1255.5,187 1252.8,194 1250.1,200 1247.4,194 1244.7,204 1242.0,206 1239.3,201 1236.6,200 1233.9,203 1231.2,198 1228.5,201 1225.8,199 1223.1,194 1220.4,198 1217.7,204 1215.0,204 1212.3,207 1209.6,211 1206.9,206 1204.2,200 1201.5,204 1198.8,207 1196.1,200 1193.4,196 1190.7,199 1188.0,202 1185.3,203 1182.6,201 1179.9,199 1177.2,198 1174.5,198 1171.8,198 1169.1,193 1166.4,204 1163.7,196 1161.0,204 1158.3,196 1155.6,201 1152.9,195 1150.2,195 1147.5,199 1144.8,199 1142.1,197 1139.4,202 1136.7,200 1134.0,203 1131.3,195 1128.6,193 1125.9,192 1123.2,189 1120.5,190 1117.8,195 1115.1,194 1112.4,194 1109.7,199 1107.0,192 1104.3,198 1101.6,192 1098.9,196 1096.2,190 1093.5,196 1090.8,192 1088.1,190 1085.4,179 1082.7,187 1080.0,180 1077.3,186 1074.6,184 1071.9,185 1069.2,186 1066.5,182 1063.8,181 1061.1,180 1058.4,190 1055.7,186 1053.0,180 1050.3,186 1047.6,179 1044.9,189 1042.2,183 1039.5,185 1036.8,191 1034.1,185 1031.4,189 1028.7,195 1026.0,197 1023.3,188 1020.6,188 1017.9,191 1015.2,192 1012.5,187 1009.8,185 1007.1,184 1004.4,196 1001.7,200 999.0,199 996.3,197 993.6,201 990.9,206 988.2,201 985.5,205 982.8,200 980.1,198 977.4,204 974.7,195 972.0,193 969.3,200 966.6,192 963.9,198 961.2,197 958.5,195 955.8,193 953.1,184 950.4,193 947.7,198 945.0,195 942.3,190 939.6,191 936.9,192 934.2,191 931.5,189 928.8,188 926.1,191 923.4,190 920.7,181 918.0,185 915.3,181 912.6,176 909.9,182 907.2,185 904.5,187 901.8,189 899.1,183 896.4,177 893.7,185 891.0,180 888.3,181 885.6,177 882.9,182 880.2,172 877.5,176 874.8,170 872.1,176 869.4,178 866.7,175 864.0,169 861.3,174 858.6,178 855.9,169 853.2,171 850.5,173 847.8,163 845.1,169 842.4,171 839.7,167 837.0,157 834.3,156 831.6,157 828.9,163 826.2,158 823.5,163 820.8,157 818.1,157 815.4,149 812.7,159 810.0,154 807.3,160 804.6,159 801.9,164 799.2,168 796.5,167 793.8,165 791.1,164 788.4,159 785.7,157 783.0,161 780.3,164 777.6,170 774.9,169 772.2,168 769.5,167 766.8,165 764.1,167 761.4,170 758.7,180 756.0,187 753.3,179 750.6,185 747.9,175 745.2,184 742.5,181 739.8,185 737.1,183 734.4,181 731.7,186 729.0,189 726.3,184 723.6,180 720.9,182 718.2,181 715.5,186 712.8,183 710.1,187 707.4,187 704.7,192 702.0,193 699.3,195 696.6,190 693.9,196 691.2,196 688.5,190 685.8,197 683.1,196 680.4,188 677.7,191 675.0,188 672.3,194 669.6,203 666.9,197 664.2,199 661.5,199 658.8,203 656.1,196 653.4,206 650.7,202 648.0,207 645.3,197 642.6,195 639.9,199 637.2,193 634.5,194 631.8,193 629.1,195 626.4,196 623.7,194 621.0,201 618.3,201 615.6,201 612.9,199 610.2,202 607.5,198 604.8,195 602.1,201 599.4,199 596.7,197 594.0,198 591.3,197 588.6,198 585.9,196 583.2,193 580.5,200 577.8,192 575.1,191 572.4,193 569.7,197 567.0,200 564.3,202 561.6,197 558.9,194 556.2,205 553.5,196 550.8,201 548.1,202 545.4,197 542.7,201 540.0,205 537.3,205 534.6,194 531.9,197 529.2,198 526.5,206 523.8,207 521.1,197 518.4,200 515.7,193 513.0,201 510.3,196 507.6,199 504.9,193 502.2,202 499.5,196 496.8,194 494.1,196 491.4,198 488.7,191 486.0,190 483.3,188 480.6,186 477.9,182 475.2,185 472.5,195 469.8,188 467.1,187 464.4,184 461.7,188 459.0,188 456.3,184 453.6,184 450.9,184 448.2,183 445.5,186 442.8,184 440.1,187 437.4,181 434.7,185 432.0,186 429.3,180 426.6,180 423.9,176 421.2,186 418.5,181 415.8,181 413.1,171 410.4,170 407.7,171 405.0,175 402.3,181 399.6,181 396.9,181 394.2,184 391.5,185 388.8,179 386.1,175 383.4,180 380.7,183 378.0,178 375.3,175 372.6,182 369.9,184 367.2,176 364.5,173 361.8,178 359.1,175 356.4,183 353.7,178 351.0,183 348.3,180 345.6,184 342.9,187 340.2,181 337.5,185 334.8,187 332.1,187 329.4,190 326.7,180 324.0,177 321.3,183 318.6,175 315.9,177 313.2,180 310.5,176 307.8,183 305.1,175 302.4,178 299.7,178 297.0,177 294.3,181 291.6,183 288.9,175 286.2,177 283.5,175 280.8,184 278.1,177 275.4,177 272.7,187 270.0,188 267.3,177 264.6,184 261.9,184 259.2,184 256.5,177 253.8,184 251.1,181 248.4,181 245.7,175 243.0,175 240.3,170 237.6,172 234.9,178 232.2,177 229.5,178 226.8,170 224.1,170 221.4,172 218.7,179 216.0,176 213.3,172 210.6,172 207.9,169 205.2,178 202.5,179 199.8,175 197.1,177 194.4,175 191.7,176 189.0,173 186.3,173 183.6,171 180.9,173 178.2,170 175.5,170 172.8,176 170.1,172 167.4,176 164.7,170 162.0,172 159.3,178 156.6,170 153.9,178 151.2,180 148.5,175 145.8,178 143.1,186 140.4,193 137.7,189 135.0,191 132.3,186 129.6,195 126.9,194 124.2,188 121.5,188 118.8,178 116.1,185 113.4,182 110.7,192 108.0,185 105.3,183 102.6,185 99.9,188 97.2,185 94.5,186 91.8,195 89.1,192 86.4,193 83.7,197 81.0,200 78.3,191 75.6,191 72.9,190 70.2,200 67.5,189 64.8,192 62.1,195 59.4,199 56.7,206 54.0,205 51.3,204 48.6,201 45.9,203 43.2,202 40.5,190 37.8,192 35.1,200 32.4,200 29.7,198 27.0,196 24.3,194 21.6,201 18.9,196 16.2,196 13.5,194 10.8,191 8.1,199 5.4,191 2.7,203 0.0,201" fill="#80afd0"/><path d="M0.0 40V23M0.0 190V216M2.7 63V28M2.7 194V231M5.4 48V42M5.4 179V203M8.1 61V37M8.1 189V231M10.8 62V21M10.8 180V205M13.5 49V9M13.5 190V216M16.2 52V46M16.2 193V205M18.9 59V49M18.9 192V204M21.6 63V45M21.6 187V218M24.3 50V44M24.3 185V209M27.0 50V28M27.0 184V206M29.7 64V40M29.7 196V216M32.4 68V50M32.4 190V206M35.1 73V43M35.1 196V203M37.8 68V49M37.8 182V231M40.5 71V51M40.5 181V231M43.2 69V51M43.2 192V231M45.9 61V9M45.9 195V231M48.6 65V43M48.6 196V231M51.3 51V41M51.3 201V222M54.0 51V43M54.0 202V226M56.7 48V35M56.7 193V219M59.4 52V33M59.4 185V231M62.1 53V37M62.1 183V207M64.8 54V9M64.8 181V207M67.5 47V11M67.5 182V197M70.2 47V20M70.2 193V203M72.9 53V20M72.9 179V219M75.6 44V28M75.6 183V231M78.3 42V13M78.3 181V228M81.0 40V18M81.0 195V231M83.7 55V35M83.7 194V206M86.4 62V34M86.4 186V220M89.1 54V35M89.1 184V209M91.8 55V31M91.8 192V210M94.5 49V9M94.5 179V220M97.2 46V9M97.2 179V195M99.9 54V32M99.9 187V197M102.6 43V32M102.6 178V209M105.3 53V37M105.3 174V188M108.0 52V9M108.0 181V223M110.7 53V9M110.7 191V217M113.4 41V29M113.4 170V191M116.1 42V25M116.1 184V189M118.8 51V34M118.8 177V231M121.5 52V36M121.5 188V200M124.2 48V18M124.2 187V195M126.9 45V17M126.9 182V211M129.6 51V9M129.6 185V231M132.3 37V28M132.3 177V196M135.0 47V17M135.0 182V206M137.7 39V14M137.7 186V196M140.4 57V28M140.4 184V213M143.1 39V27M143.1 179V196M145.8 38V17M145.8 170V187M148.5 44V37M148.5 163V204M151.2 38V22M151.2 176V196M153.9 43V9M153.9 172V186M156.6 46V27M156.6 164V179M159.3 34V9M159.3 169V224M162.0 47V18M162.0 158V177M164.7 48V32M164.7 169V177M167.4 41V28M167.4 165V187M170.1 45V11M170.1 167V183M172.8 48V10M172.8 163V182M175.5 54V21M175.5 161V175M178.2 50V39M178.2 169V196M180.9 51V9M180.9 168V180M183.6 48V34M183.6 163V178M186.3 46V24M186.3 165V177M189.0 39V9M189.0 172V203M191.7 47V29M191.7 166V182M194.4 42V9M194.4 165V192M197.1 39V9M197.1 168V224M199.8 38V19M199.8 173V231M202.5 37V30M202.5 177V203M205.2 39V33M205.2 168V183M207.9 44V30M207.9 162V187M210.6 41V15M210.6 159V176M213.3 45V24M213.3 166V176M216.0 40V31M216.0 168V186M218.7 38V29M218.7 167V217M221.4 51V25M221.4 167V192M224.1 41V9M224.1 159V182M226.8 48V29M226.8 165V191M229.5 46V30M229.5 171V186M232.2 46V24M232.2 172V191M234.9 61V21M234.9 173V196M237.6 48V21M237.6 164V186M240.3 62V42M240.3 161V181M243.0 50V38M243.0 164V203M245.7 48V37M245.7 164V185M248.4 48V9M248.4 171V191M251.1 42V23M251.1 178V185M253.8 39V28M253.8 171V231M256.5 47V9M256.5 166V192M259.2 50V9M259.2 181V187M261.9 40V10M261.9 184V205M264.6 51V29M264.6 180V193M267.3 44V9M267.3 168V189M270.0 44V9M270.0 175V200M272.7 50V35M272.7 178V231M275.4 44V31M275.4 167V183M278.1 54V37M278.1 165V231M280.8 46V24M280.8 176V214M283.5 54V36M283.5 170V209M286.2 57V36M286.2 174V231M288.9 46V9M288.9 161V185M291.6 60V46M291.6 171V195M294.3 47V36M294.3 178V191M297.0 61V38M297.0 173V193M299.7 56V39M299.7 178V193M302.4 61V45M302.4 171V184M305.1 53V33M305.1 173V224M307.8 61V22M307.8 176V223M310.5 53V30M310.5 165V209M313.2 65V47M313.2 168V207M315.9 66V52M315.9 164V207M318.6 56V49M318.6 168V185M321.3 67V60M321.3 172V210M324.0 74V16M324.0 175V210M326.7 77V30M326.7 179V188M329.4 76V63M329.4 177V197M332.1 77V61M332.1 177V193M334.8 71V52M334.8 182V216M337.5 80V68M337.5 175V200M340.2 74V47M340.2 177V185M342.9 81V62M342.9 177V199M345.6 73V59M345.6 183V215M348.3 77V59M348.3 178V191M351.0 68V60M351.0 178V208M353.7 66V62M353.7 167V199M356.4 68V50M356.4 179V231M359.1 65V55M359.1 172V186M361.8 70V61M361.8 170V186M364.5 59V50M364.5 166V180M367.2 75V57M367.2 167V190M369.9 76V53M369.9 175V215M372.6 80V26M372.6 175V186M375.3 72V58M375.3 167V179M378.0 77V52M378.0 174V219M380.7 85V46M380.7 175V217M383.4 75V42M383.4 178V187M386.1 76V65M386.1 168V189M388.8 80V61M388.8 175V191M391.5 80V31M391.5 176V197M394.2 73V50M394.2 171V192M396.9 74V41M396.9 171V231M399.6 73V13M399.6 174V188M402.3 73V57M402.3 175V215M405.0 75V58M405.0 173V183M407.7 69V48M407.7 168V183M410.4 73V62M410.4 158V226M413.1 76V59M413.1 158V189M415.8 67V42M415.8 180V185M418.5 82V64M418.5 169V188M421.2 78V26M421.2 180V197M423.9 62V42M423.9 165V187M426.6 65V19M426.6 177V191M429.3 63V53M429.3 173V187M432.0 64V49M432.0 173V213M434.7 67V40M434.7 181V212M437.4 67V39M437.4 169V190M440.1 69V49M440.1 181V200M442.8 67V48M442.8 176V197M445.5 66V29M445.5 174V231M448.2 72V19M448.2 176V222M450.9 56V40M450.9 181V202M453.6 63V27M453.6 173V220M456.3 52V45M456.3 172V196M459.0 60V37M459.0 179V231M461.7 62V50M461.7 184V198M464.4 58V32M464.4 176V195M467.1 53V22M467.1 178V195M469.8 60V38M469.8 180V211M472.5 71V35M472.5 187V207M475.2 61V42M475.2 182V211M477.9 64V43M477.9 174V221M480.6 73V52M480.6 173V199M483.3 73V53M483.3 174V210M486.0 55V25M486.0 180V201M488.7 73V56M488.7 182V196M491.4 62V31M491.4 186V206M494.1 60V43M494.1 189V227M496.8 71V48M496.8 193V201M499.5 70V22M499.5 189V207M502.2 57V48M502.2 192V231M504.9 75V54M504.9 188V228M507.6 77V60M507.6 191V231M510.3 70V38M510.3 191V207M513.0 75V61M513.0 199V209M515.7 64V35M515.7 193V207M518.4 72V55M518.4 193V217M521.1 77V60M521.1 192V211M523.8 71V31M523.8 198V231M526.5 79V51M526.5 195V216M529.2 75V35M529.2 192V208M531.9 72V56M531.9 186V201M534.6 71V51M534.6 189V231M537.3 69V54M537.3 192V216M540.0 62V51M540.0 201V221M542.7 72V50M542.7 194V211M545.4 63V45M545.4 185V201M548.1 71V38M548.1 199V214M550.8 65V49M550.8 199V215M553.5 51V19M553.5 194V212M556.2 59V22M556.2 193V230M558.9 54V37M558.9 187V199M561.6 65V14M561.6 189V231M564.3 48V18M564.3 191V231M567.0 61V9M567.0 186V207M569.7 62V12M569.7 193V208M572.4 65V43M572.4 182V220M575.1 59V39M575.1 185V200M577.8 55V9M577.8 182V199M580.5 45V9M580.5 191V214M583.2 45V27M583.2 180V203M585.9 61V36M585.9 195V226M588.6 48V40M588.6 189V227M591.3 52V39M591.3 190V202M594.0 56V44M594.0 195V231M596.7 50V16M596.7 194V225M599.4 59V9M599.4 188V208M602.1 62V36M602.1 194V231M604.8 65V41M604.8 182V231M607.5 66V45M607.5 192V229M610.2 66V57M610.2 200V208M612.9 75V32M612.9 198V204M615.6 67V53M615.6 187V211M618.3 73V48M618.3 196V210M621.0 72V66M621.0 192V231M623.7 79V65M623.7 185V203M626.4 68V51M626.4 192V208M629.1 61V39M629.1 192V204M631.8 59V46M631.8 180V209M634.5 72V54M634.5 187V203M637.2 64V45M637.2 182V204M639.9 66V39M639.9 187V210M642.6 75V21M642.6 184V231M645.3 55V18M645.3 190V231M648.0 55V9M648.0 193V226M650.7 63V21M650.7 201V211M653.4 53V24M653.4 201V218M656.1 58V24M656.1 192V208M658.8 64V39M658.8 195V215M661.5 50V35M661.5 192V231M664.2 49V42M664.2 191V204M666.9 55V34M666.9 188V204M669.6 44V9M669.6 200V231M672.3 49V29M672.3 185V205M675.0 46V18M675.0 185V192M677.7 41V17M677.7 182V213M680.4 40V31M680.4 187V198M683.1 33V19M683.1 184V202M685.8 42V22M685.8 191V208M688.5 37V20M688.5 184V205M691.2 38V16M691.2 183V207M693.9 39V22M693.9 186V231M696.6 38V16M696.6 177V231M699.3 46V25M699.3 187V227M702.0 51V9M702.0 180V204M704.7 54V33M704.7 181V212M707.4 49V22M707.4 177V231M710.1 46V9M710.1 186V196M712.8 52V9M712.8 182V188M715.5 55V22M715.5 177V224M718.2 40V23M718.2 173V217M720.9 41V25M720.9 170V193M723.6 45V9M723.6 175V219M726.3 43V26M726.3 184V198M729.0 32V28M729.0 186V211M731.7 37V24M731.7 182V193M734.4 46V30M734.4 177V194M737.1 34V9M737.1 177V194M739.8 30V22M739.8 176V194M742.5 38V9M742.5 173V192M745.2 37V18M745.2 180V200M747.9 22V9M747.9 174V187M750.6 28V9M750.6 176V201M753.3 27V9M753.3 176V188M756.0 42V21M756.0 176V197M758.7 35V30M758.7 166V187M761.4 41V9M761.4 165V178M764.1 30V10M764.1 158V179M766.8 50V9M766.8 160V189M769.5 37V26M769.5 162V178M772.2 40V26M772.2 164V198M774.9 48V37M774.9 159V208M777.6 40V35M777.6 165V181M780.3 37V9M780.3 162V170M783.0 47V31M783.0 155V177M785.7 54V36M785.7 149V174M788.4 52V28M788.4 155V164M791.1 47V28M791.1 151V191M793.8 45V9M793.8 153V212M796.5 49V25M796.5 163V175M799.2 44V9M799.2 165V179M801.9 34V31M801.9 150V171M804.6 45V18M804.6 155V208M807.3 45V13M807.3 151V212M810.0 51V14M810.0 152V204M812.7 48V24M812.7 159V167M815.4 61V40M815.4 148V184M818.1 53V24M818.1 147V211M820.8 59V43M820.8 155V168M823.5 49V34M823.5 150V196M826.2 53V9M826.2 156V167M828.9 56V41M828.9 162V204M831.6 53V9M831.6 151V178M834.3 46V35M834.3 149V164M837.0 53V30M837.0 148V202M839.7 59V35M839.7 160V197M842.4 54V42M842.4 160V180M845.1 56V45M845.1 162V179M847.8 59V9M847.8 155V189M850.5 55V38M850.5 164V183M853.2 57V26M853.2 166V190M855.9 57V49M855.9 168V193M858.6 68V56M858.6 174V186M861.3 60V52M861.3 165V183M864.0 69V57M864.0 156V223M866.7 66V58M866.7 173V182M869.4 60V22M869.4 176V211M872.1 68V32M872.1 174V209M874.8 65V46M874.8 165V180M877.5 65V54M877.5 167V186M880.2 67V47M880.2 169V176M882.9 65V26M882.9 179V222M885.6 55V47M885.6 171V226M888.3 68V34M888.3 176V193M891.0 59V45M891.0 180V189M893.7 65V54M893.7 177V191M896.4 67V55M896.4 176V206M899.1 66V53M899.1 179V197M901.8 74V13M901.8 188V199M904.5 71V49M904.5 183V197M907.2 63V28M907.2 182V212M909.9 73V58M909.9 177V190M912.6 71V63M912.6 176V183M915.3 75V60M915.3 176V197M918.0 68V12M918.0 177V197M920.7 65V27M920.7 174V223M923.4 72V56M923.4 178V216M926.1 65V34M926.1 190V219M928.8 78V60M928.8 182V231M931.5 73V56M931.5 176V210M934.2 70V48M934.2 187V204M936.9 69V32M936.9 180V202M939.6 70V34M939.6 188V222M942.3 68V55M942.3 177V201M945.0 66V43M945.0 195V231M947.7 72V9M947.7 193V222M950.4 60V23M950.4 185V206M953.1 71V60M953.1 174V212M955.8 71V49M955.8 192V201M958.5 75V25M958.5 195V231M961.2 71V54M961.2 188V220M963.9 55V11M963.9 184V205M966.6 60V50M966.6 180V209M969.3 68V60M969.3 193V231M972.0 71V52M972.0 185V225M974.7 75V29M974.7 188V224M977.4 72V47M977.4 195V211M980.1 72V49M980.1 185V231M982.8 76V59M982.8 193V209M985.5 74V32M985.5 205V214M988.2 65V32M988.2 195V231M990.9 69V52M990.9 192V209M993.6 66V54M993.6 197V224M996.3 69V52M996.3 186V231M999.0 75V27M999.0 187V208M1001.7 69V11M1001.7 187V205M1004.4 71V60M1004.4 188V203M1007.1 63V45M1007.1 179V218M1009.8 66V27M1009.8 178V190M1012.5 64V56M1012.5 175V231M1015.2 63V15M1015.2 181V196M1017.9 71V58M1017.9 180V214M1020.6 75V55M1020.6 175V222M1023.3 66V50M1023.3 184V205M1026.0 58V9M1026.0 187V212M1028.7 60V52M1028.7 184V208M1031.4 59V20M1031.4 188V195M1034.1 69V20M1034.1 181V198M1036.8 58V48M1036.8 183V231M1039.5 59V9M1039.5 173V188M1042.2 71V50M1042.2 175V210M1044.9 63V32M1044.9 185V231M1047.6 61V42M1047.6 169V208M1050.3 62V13M1050.3 178V231M1053.0 69V36M1053.0 174V183M1055.7 70V42M1055.7 183V202M1058.4 68V52M1058.4 179V199M1061.1 78V67M1061.1 172V188M1063.8 69V53M1063.8 168V209M1066.5 74V55M1066.5 169V206M1069.2 57V50M1069.2 177V205M1071.9 67V37M1071.9 176V198M1074.6 59V47M1074.6 181V194M1077.3 57V47M1077.3 180V231M1080.0 62V46M1080.0 172V195M1082.7 65V41M1082.7 178V225M1085.4 68V49M1085.4 172V188M1088.1 61V43M1088.1 180V215M1090.8 68V50M1090.8 184V207M1093.5 70V55M1093.5 193V200M1096.2 65V57M1096.2 181V207M1098.9 56V43M1098.9 189V207M1101.6 57V40M1101.6 182V199M1104.3 74V9M1104.3 196V210M1107.0 71V61M1107.0 186V202M1109.7 73V51M1109.7 196V231M1112.4 73V61M1112.4 183V231M1115.1 68V52M1115.1 189V231M1117.8 70V56M1117.8 192V204M1120.5 73V39M1120.5 183V202M1123.2 70V36M1123.2 187V193M1125.9 74V56M1125.9 191V201M1128.6 78V53M1128.6 192V205M1131.3 82V52M1131.3 188V209M1134.0 70V42M1134.0 199V211M1136.7 77V61M1136.7 195V231M1139.4 77V34M1139.4 196V231M1142.1 68V47M1142.1 190V202M1144.8 58V27M1144.8 195V231M1147.5 56V47M1147.5 188V209M1150.2 71V56M1150.2 182V220M1152.9 62V45M1152.9 194V231M1155.6 64V34M1155.6 194V208M1158.3 66V55M1158.3 184V223M1161.0 59V44M1161.0 202V231M1163.7 55V45M1163.7 185V203M1166.4 65V10M1166.4 198V231M1169.1 64V38M1169.1 187V200M1171.8 58V44M1171.8 194V231M1174.5 65V36M1174.5 188V204M1177.2 53V44M1177.2 197V204M1179.9 53V43M1179.9 195V206M1182.6 56V41M1182.6 195V231M1185.3 62V9M1185.3 197V231M1188.0 55V48M1188.0 198V231M1190.7 52V48M1190.7 191V231M1193.4 49V31M1193.4 187V217M1196.1 58V43M1196.1 186V207M1198.8 54V34M1198.8 203V213M1201.5 50V20M1201.5 197V231M1204.2 48V14M1204.2 190V221M1206.9 53V40M1206.9 206V211M1209.6 60V36M1209.6 201V231M1212.3 48V16M1212.3 196V231M1215.0 45V20M1215.0 195V217M1217.7 49V16M1217.7 199V208M1220.4 42V13M1220.4 186V231M1223.1 41V9M1223.1 187V231M1225.8 46V23M1225.8 191V204M1228.5 43V9M1228.5 197V210M1231.2 45V25M1231.2 198V231M1233.9 45V35M1233.9 194V206M1236.6 43V27M1236.6 194V207M1239.3 39V27M1239.3 190V221M1242.0 38V21M1242.0 204V210M1244.7 32V14M1244.7 192V208M1247.4 43V9M1247.4 185V201M1250.1 41V36M1250.1 187V231M1252.8 42V9M1252.8 193V198M1255.5 34V9M1255.5 179V231M1258.2 46V14M1258.2 180V218M1260.9 43V28M1260.9 183V194M1263.6 47V14M1263.6 184V197M1266.3 37V24M1266.3 180V231M1269.0 38V21M1269.0 172V211M1271.7 40V13M1271.7 183V190M1274.4 53V9M1274.4 182V203M1277.1 47V34M1277.1 167V190M1279.8 48V9M1279.8 181V193M1282.5 54V9M1282.5 175V214M1285.2 49V20M1285.2 183V196M1287.9 43V29M1287.9 183V207M1290.6 48V21M1290.6 181V211M1293.3 39V9M1293.3 184V207M1296.0 49V15M1296.0 190V205M1298.7 54V9M1298.7 181V199M1301.4 45V31M1301.4 188V195M1304.1 45V9M1304.1 182V226M1306.8 34V9M1306.8 193V219M1309.5 35V13M1309.5 192V213M1312.2 49V36M1312.2 175V231M1314.9 57V25M1314.9 186V231M1317.6 61V44M1317.6 182V195M1320.3 55V31M1320.3 178V190M1323.0 55V38M1323.0 184V194M1325.7 54V37M1325.7 192V205M1328.4 52V44M1328.4 182V190M1331.1 50V37M1331.1 170V222M1333.8 54V47M1333.8 175V219M1336.5 71V52M1336.5 176V209M1339.2 54V40M1339.2 171V226M1341.9 61V39M1341.9 183V212M1344.6 57V31M1344.6 173V221M1347.3 65V46M1347.3 176V212M1350.0 56V43M1350.0 168V188M1352.7 63V45M1352.7 175V198M1355.4 59V17M1355.4 174V194M1358.1 58V34M1358.1 180V231M1360.8 58V23M1360.8 171V231M1363.5 72V26M1363.5 174V227M1366.2 61V45M1366.2 172V184M1368.9 64V51M1368.9 174V200M1371.6 65V29M1371.6 171V191M1374.3 66V32M1374.3 174V188M1377.0 66V24M1377.0 181V200M1379.7 70V37M1379.7 171V192M1382.4 59V50M1382.4 171V202M1385.1 62V43M1385.1 167V203M1387.8 53V30M1387.8 171V230M1390.5 48V25M1390.5 164V180M1393.2 60V17M1393.2 175V182M1395.9 57V45M1395.9 149V166M1398.6 51V11M1398.6 154V191M1401.3 51V9M1401.3 166V206M1404.0 52V27M1404.0 156V183M1406.7 54V9M1406.7 164V174M1409.4 50V9M1409.4 166V189M1412.1 54V9M1412.1 178V222M1414.8 48V9M1414.8 168V185M1417.5 65V9M1417.5 180V205M1420.2 62V9M1420.2 165V187M1422.9 66V17M1422.9 173V180M1425.6 68V43M1425.6 169V184M1428.3 60V42M1428.3 170V200M1431.0 54V37M1431.0 165V221M1433.7 56V32M1433.7 178V203M1436.4 58V37M1436.4 166V192M1439.1 50V38M1439.1 168V194M1441.8 55V34M1441.8 176V196M1444.5 65V37M1444.5 176V212M1447.2 67V39M1447.2 183V203M1449.9 57V30M1449.9 177V196M1452.6 68V38M1452.6 175V219M1455.3 66V35M1455.3 181V203M1458.0 64V31M1458.0 184V203M1460.7 54V33M1460.7 187V198M1463.4 61V40M1463.4 174V207M1466.1 59V14M1466.1 181V194M1468.8 60V33M1468.8 174V200M1471.5 46V28M1471.5 187V203M1474.2 48V9M1474.2 183V207M1476.9 49V37M1476.9 186V214M1479.6 63V44M1479.6 196V206M1482.3 53V38M1482.3 187V210M1485.0 56V44M1485.0 188V209M1487.7 55V39M1487.7 180V223M1490.4 62V9M1490.4 185V201M1493.1 52V32M1493.1 187V209M1495.8 49V30M1495.8 183V199M1498.5 50V38M1498.5 178V208M1501.2 53V28M1501.2 175V205M1503.9 55V21M1503.9 184V227M1506.6 53V9M1506.6 180V203M1509.3 53V34M1509.3 172V193M1512.0 51V30M1512.0 178V206M1514.7 45V28M1514.7 185V231M1517.4 55V9M1517.4 174V193M1520.1 46V26M1520.1 181V193M1522.8 58V43M1522.8 182V194M1525.5 52V33M1525.5 174V188M1528.2 55V10M1528.2 177V204M1530.9 53V9M1530.9 179V219M1533.6 55V16M1533.6 180V231M1536.3 53V19M1536.3 194V223M1539.0 43V37M1539.0 179V231M1541.7 56V23M1541.7 193V205M1544.4 65V34M1544.4 183V206M1547.1 65V12M1547.1 181V205M1549.8 55V43M1549.8 184V231M1552.5 64V32M1552.5 191V200M1555.2 63V50M1555.2 180V231M1557.9 68V54M1557.9 185V219M1560.6 61V43M1560.6 181V201M1563.3 70V36M1563.3 182V202M1566.0 57V26M1566.0 179V215M1568.7 62V29M1568.7 179V224M1571.4 58V47M1571.4 181V231M1574.1 50V39M1574.1 176V202M1576.8 66V42M1576.8 178V195M1579.5 64V19M1579.5 179V204M1582.2 62V9M1582.2 178V193M1584.9 64V52M1584.9 186V207M1587.6 67V50M1587.6 189V198M1590.3 71V30M1590.3 186V200M1593.0 66V43M1593.0 182V229M1595.7 65V48M1595.7 189V219M1598.4 74V50M1598.4 196V224M1601.1 68V58M1601.1 187V206M1603.8 81V58M1603.8 184V219M1606.5 76V58M1606.5 182V213M1609.2 84V66M1609.2 192V231M1611.9 91V74M1611.9 177V197M1614.6 87V34M1614.6 184V211M1617.3 83V17M1617.3 195V229M1620.0 91V73M1620.0 191V205M1622.7 80V47M1622.7 182V198M1625.4 92V72M1625.4 190V203M1628.1 86V71M1628.1 179V203M1630.8 82V70M1630.8 182V203M1633.5 85V71M1633.5 178V219M1636.2 77V67M1636.2 179V214M1638.9 93V70M1638.9 187V197M1641.6 91V78M1641.6 169V204M1644.3 93V72M1644.3 169V202M1647.0 101V69M1647.0 173V231M1649.7 85V64M1649.7 179V191M1652.4 89V77M1652.4 186V202M1655.1 98V62M1655.1 185V231M1657.8 90V60M1657.8 176V195M1660.5 83V66M1660.5 177V192M1663.2 93V79M1663.2 187V195M1665.9 83V72M1665.9 171V187M1668.6 101V82M1668.6 182V231M1671.3 87V48M1671.3 178V231M1674.0 84V70M1674.0 173V231M1676.7 78V59M1676.7 173V198M1679.4 86V50M1679.4 188V213M1682.1 79V19M1682.1 179V188M1684.8 78V15M1684.8 179V193M1687.5 77V45M1687.5 174V197M1690.2 73V67M1690.2 180V213M1692.9 81V58M1692.9 185V215M1695.6 79V61M1695.6 183V231M1698.3 75V52M1698.3 167V190M1701.0 70V58M1701.0 175V204M1703.7 77V41M1703.7 176V195M1706.4 85V61M1706.4 169V217M1709.1 78V65M1709.1 178V186M1711.8 71V60M1711.8 182V215M1714.5 71V45M1714.5 182V195M1717.2 84V51M1717.2 172V188M1719.9 87V69M1719.9 178V200M1722.6 78V62M1722.6 177V191M1725.3 65V52M1725.3 178V196M1728.0 73V41M1728.0 184V231M1730.7 64V10M1730.7 183V200M1733.4 65V49M1733.4 192V225M1736.1 53V45M1736.1 196V219M1738.8 62V9M1738.8 196V231M1741.5 53V34M1741.5 201V231M1744.2 45V30M1744.2 197V210M1746.9 49V9M1746.9 202V210M1749.6 54V31M1749.6 188V231M1752.3 52V45M1752.3 185V206M1755.0 45V36M1755.0 198V217M1757.7 58V35M1757.7 191V209M1760.4 45V32M1760.4 186V212M1763.1 49V37M1763.1 198V212M1765.8 50V28M1765.8 188V231M1768.5 46V9M1768.5 197V210M1771.2 48V9M1771.2 197V212M1773.9 51V9M1773.9 192V231M1776.6 48V9M1776.6 190V218M1779.3 49V38M1779.3 189V207M1782.0 50V37M1782.0 203V211M1784.7 52V9M1784.7 205V231M1787.4 46V20M1787.4 212V228M1790.1 49V18M1790.1 198V220M1792.8 35V9M1792.8 200V217M1795.5 36V18M1795.5 211V231M1798.2 34V27M1798.2 200V223M1800.9 43V30M1800.9 201V231M1803.6 39V27M1803.6 195V202M1806.3 42V13M1806.3 186V231M1809.0 38V22M1809.0 186V231M1811.7 41V16M1811.7 188V209M1814.4 37V9M1814.4 181V201M1817.1 41V10M1817.1 179V201M1819.8 36V9M1819.8 190V231M1822.5 42V27M1822.5 184V201M1825.2 39V9M1825.2 183V197M1827.9 35V13M1827.9 179V195M1830.6 42V9M1830.6 187V231M1833.3 36V25M1833.3 190V203M1836.0 34V9M1836.0 190V205M1838.7 42V9M1838.7 173V219M1841.4 40V20M1841.4 177V198M1844.1 40V15M1844.1 185V229M1846.8 40V22M1846.8 189V221M1849.5 27V9M1849.5 185V220M1852.2 36V21M1852.2 176V194M1854.9 36V9M1854.9 177V195M1857.6 35V9M1857.6 172V196M1860.3 42V30M1860.3 178V197M1863.0 29V18M1863.0 185V197M1865.7 41V31M1865.7 174V188M1868.4 45V27M1868.4 164V219M1871.1 45V9M1871.1 173V185M1873.8 53V14M1873.8 170V193M1876.5 53V23M1876.5 173V201" stroke="#ffffff" stroke-width="2.2" fill="none"/><path d="M1275 0 V57 M1275 27 H1746 M1746 0 V57" stroke="#f0a030" stroke-width="2.5" fill="none"/></svg>
<div style="left:2993.5px;top:271.0px;width:3.0px;height:337.0px;background:#000;"></div>
<svg style="left:2967px;top:269px" width="60" height="32"><path d="M2 2 L30 30 L58 2 Z" fill="#00e000" stroke="#111" stroke-width="2.5"/><line x1="30" y1="2" x2="30" y2="30" stroke="#111" stroke-width="2.5"/></svg>
<div style="left:1815.0px;top:610.0px;width:509.0px;height:2395.0px;background:#333333;"></div>
<div style="left:1817.0px;top:609.0px;width:505.0px;height:72.9px;background:#404040;"></div>
<div style="left:1817.0px;top:612.0px;width:505.0px;height:67.4px;background:#00ffff;"></div>
<svg style="left:1821px;top:627.0px" width="38" height="38"><circle cx="19" cy="19" r="16" fill="#fff" stroke="#222" stroke-width="2.5"/></svg>
<div class="t" style="left:1868.0px;top:623.7px;font-size:43.5px;line-height:43.5px;color:#000;font-weight:400;">Temp</div>
<div style="left:1817.0px;top:679.9px;width:505.0px;height:72.9px;background:#404040;"></div>
<div style="left:1817.0px;top:682.4px;width:505.0px;height:67.9px;background:#ff0000;"></div>
<svg style="left:1821px;top:697.9px" width="38" height="38"><circle cx="19" cy="19" r="16" fill="#fff" stroke="#222" stroke-width="2.5"/></svg>
<div class="t" style="left:1868.0px;top:694.6px;font-size:43.5px;line-height:43.5px;color:#000;font-weight:400;">Bars</div>
<div style="left:1817.0px;top:750.8px;width:505.0px;height:72.9px;background:#404040;"></div>
<div style="left:1817.0px;top:753.3px;width:505.0px;height:67.9px;background:#00ff00;"></div>
<svg style="left:1821px;top:768.8px" width="38" height="38"><circle cx="19" cy="19" r="16" fill="#fff" stroke="#222" stroke-width="2.5"/><circle cx="19" cy="19" r="7" fill="#444"/></svg>
<div class="t" style="left:1868.0px;top:765.5px;font-size:43.5px;line-height:43.5px;color:#000;font-weight:400;">Beats</div>
<div style="left:1817.0px;top:821.7px;width:505.0px;height:72.9px;background:#404040;"></div>
<div style="left:1817.0px;top:824.2px;width:494.0px;height:67.9px;background:#d6d2cb;"></div>
<div style="left:2311.0px;top:824.2px;width:13.0px;height:67.9px;background:#eaa800;"></div>
<svg style="left:1821px;top:845.7px" width="30" height="28"><rect x="1.5" y="1.5" width="27" height="25" fill="#fff" stroke="#000" stroke-width="3"/><line x1="1" y1="14" x2="29" y2="14" stroke="#000" stroke-width="3"/><line x1="15" y1="3" x2="15" y2="27" stroke="#000" stroke-width="3"/></svg>
<div class="t" style="left:1868.0px;top:836.3px;font-size:43.5px;line-height:43.5px;color:#000;font-weight:400;">Josh Small Spinner [4]</div>
<div style="left:1817.0px;top:892.6px;width:505.0px;height:72.9px;background:#404040;"></div>
<div style="left:1817.0px;top:895.1px;width:494.0px;height:67.9px;background:#d6d2cb;"></div>
<div style="left:2311.0px;top:895.1px;width:13.0px;height:67.9px;background:#eaa800;"></div>
<svg style="left:1821px;top:916.6px" width="30" height="28"><rect x="1.5" y="1.5" width="27" height="25" fill="#fff" stroke="#000" stroke-width="3"/><line x1="1" y1="14" x2="29" y2="14" stroke="#000" stroke-width="3"/><line x1="15" y1="3" x2="15" y2="27" stroke="#000" stroke-width="3"/></svg>
<div class="t" style="left:1868.0px;top:907.2px;font-size:43.5px;line-height:43.5px;color:#000;font-weight:400;max-width:443px;overflow:hidden;white-space:nowrap;">Josh Small Spinner Sta</div>
<div style="left:1817.0px;top:963.5px;width:505.0px;height:72.9px;background:#404040;"></div>
<div style="left:1817.0px;top:966.0px;width:494.0px;height:67.9px;background:#d6d2cb;"></div>
<div style="left:2311.0px;top:966.0px;width:13.0px;height:67.9px;background:#eaa800;"></div>
<svg style="left:1821px;top:987.5px" width="30" height="28"><rect x="1.5" y="1.5" width="27" height="25" fill="#fff" stroke="#000" stroke-width="3"/><line x1="1" y1="14" x2="29" y2="14" stroke="#000" stroke-width="3"/><line x1="15" y1="3" x2="15" y2="27" stroke="#000" stroke-width="3"/></svg>
<div class="t" style="left:1868.0px;top:978.1px;font-size:43.5px;line-height:43.5px;color:#000;font-weight:400;">Josh Spinner [10]</div>
<div style="left:1817.0px;top:1034.3px;width:505.0px;height:72.9px;background:#404040;"></div>
<div style="left:1817.0px;top:1036.8px;width:505.0px;height:67.9px;background:#d6d2cb;"></div>
<div class="t" style="left:1868.0px;top:1049.0px;font-size:43.5px;line-height:43.5px;color:#000;font-weight:400;">Josh Window2</div>
<div style="left:1817.0px;top:1105.2px;width:505.0px;height:72.9px;background:#404040;"></div>
<div style="left:1817.0px;top:1107.7px;width:505.0px;height:67.9px;background:#d6d2cb;"></div>
<div class="t" style="left:1868.0px;top:1119.9px;font-size:43.5px;line-height:43.5px;color:#000;font-weight:400;">Josh Window Frame 1</div>
<div style="left:1817.0px;top:1176.1px;width:505.0px;height:72.9px;background:#404040;"></div>
<div style="left:1817.0px;top:1178.6px;width:494.0px;height:67.9px;background:#d6d2cb;"></div>
<div style="left:2311.0px;top:1178.6px;width:13.0px;height:67.9px;background:#eaa800;"></div>
<svg style="left:1821px;top:1200.1px" width="30" height="28"><rect x="1.5" y="1.5" width="27" height="25" fill="#fff" stroke="#000" stroke-width="3"/><line x1="1" y1="14" x2="29" y2="14" stroke="#000" stroke-width="3"/><line x1="15" y1="3" x2="15" y2="27" stroke="#000" stroke-width="3"/></svg>
<div class="t" style="left:1868.0px;top:1190.8px;font-size:43.5px;line-height:43.5px;color:#000;font-weight:400;">Josh Wrapped Tree [3]</div>
<div style="left:1817.0px;top:1247.0px;width:505.0px;height:72.9px;background:#404040;"></div>
<div style="left:1817.0px;top:1249.5px;width:494.0px;height:67.9px;background:#d6d2cb;"></div>
<div style="left:2311.0px;top:1249.5px;width:13.0px;height:67.9px;background:#eaa800;"></div>
<svg style="left:1821px;top:1271.0px" width="30" height="28"><rect x="1.5" y="1.5" width="27" height="25" fill="#fff" stroke="#000" stroke-width="3"/><line x1="1" y1="14" x2="29" y2="14" stroke="#000" stroke-width="3"/><line x1="15" y1="3" x2="15" y2="27" stroke="#000" stroke-width="3"/></svg>
<div class="t" style="left:1868.0px;top:1261.7px;font-size:43.5px;line-height:43.5px;color:#000;font-weight:400;">Josh tree 2 [3]</div>
<div style="left:1817.0px;top:1317.9px;width:505.0px;height:72.9px;background:#404040;"></div>
<div style="left:1817.0px;top:1320.4px;width:494.0px;height:67.9px;background:#d6d2cb;"></div>
<div style="left:2311.0px;top:1320.4px;width:13.0px;height:67.9px;background:#eaa800;"></div>
<svg style="left:1821px;top:1341.9px" width="30" height="28"><rect x="1.5" y="1.5" width="27" height="25" fill="#fff" stroke="#000" stroke-width="3"/><line x1="1" y1="14" x2="29" y2="14" stroke="#000" stroke-width="3"/><line x1="15" y1="3" x2="15" y2="27" stroke="#000" stroke-width="3"/></svg>
<div class="t" style="left:1868.0px;top:1332.6px;font-size:43.5px;line-height:43.5px;color:#000;font-weight:400;">Joshs Roofline [2]</div>
<div style="left:1817.0px;top:1388.8px;width:505.0px;height:72.9px;background:#404040;"></div>
<div style="left:1817.0px;top:1391.3px;width:505.0px;height:67.9px;background:#d6d2cb;"></div>
<div class="t" style="left:1868.0px;top:1403.5px;font-size:43.5px;line-height:43.5px;color:#000;font-weight:400;">Marcus Garage Door</div>
<div style="left:1817.0px;top:1459.7px;width:505.0px;height:72.9px;background:#404040;"></div>
<div style="left:1817.0px;top:1462.2px;width:494.0px;height:67.9px;background:#d6d2cb;"></div>
<div style="left:2311.0px;top:1462.2px;width:13.0px;height:67.9px;background:#eaa800;"></div>
<svg style="left:1821px;top:1483.7px" width="30" height="28"><rect x="1.5" y="1.5" width="27" height="25" fill="#fff" stroke="#000" stroke-width="3"/><line x1="1" y1="14" x2="29" y2="14" stroke="#000" stroke-width="3"/><line x1="15" y1="3" x2="15" y2="27" stroke="#000" stroke-width="3"/></svg>
<div class="t" style="left:1868.0px;top:1474.4px;font-size:43.5px;line-height:43.5px;color:#000;font-weight:400;">Marcus Roofline [5]</div>
<div style="left:1817.0px;top:1530.6px;width:505.0px;height:72.9px;background:#404040;"></div>
<div style="left:1817.0px;top:1533.1px;width:505.0px;height:67.9px;background:#d6d2cb;"></div>
<div class="t" style="left:1868.0px;top:1545.2px;font-size:43.5px;line-height:43.5px;color:#000;font-weight:400;">Marcus Window Frame</div>
<div style="left:1817.0px;top:1601.5px;width:505.0px;height:72.9px;background:#404040;"></div>
<div style="left:1817.0px;top:1604.0px;width:494.0px;height:67.9px;background:#d6d2cb;"></div>
<div style="left:2311.0px;top:1604.0px;width:13.0px;height:67.9px;background:#eaa800;"></div>
<div class="t" style="left:1868.0px;top:1616.1px;font-size:43.5px;line-height:43.5px;color:#000;font-weight:400;">Mathews Tree 2</div>
<div style="left:1817.0px;top:1672.3px;width:505.0px;height:72.9px;background:#404040;"></div>
<div style="left:1817.0px;top:1674.8px;width:494.0px;height:66.9px;background:#82b1d6;"></div>
<div style="left:2311.0px;top:1674.8px;width:13.0px;height:66.9px;background:#eaa800;"></div>
<svg style="left:1821px;top:1696.3px" width="30" height="28"><rect x="1.5" y="1.5" width="27" height="25" fill="#fff" stroke="#000" stroke-width="3"/><line x1="1" y1="14" x2="29" y2="14" stroke="#000" stroke-width="3"/></svg>
<div class="t" style="left:1868.0px;top:1687.0px;font-size:43.5px;line-height:43.5px;color:#000;font-weight:400;">MegaTree1 [18]</div>
<div style="left:1817.0px;top:1743.2px;width:505.0px;height:72.9px;background:#6a6a6a;"></div>
<div style="left:1817.0px;top:1746.7px;width:494.0px;height:65.9px;background:#d6d2cb;"></div>
<div style="left:2311.0px;top:1746.7px;width:13.0px;height:65.9px;background:#eaa800;"></div>
<div class="t" style="left:1904.0px;top:1757.9px;font-size:43.5px;line-height:43.5px;color:#000;font-weight:400;">[2]</div>
<div style="left:1817.0px;top:1814.1px;width:505.0px;height:72.9px;background:#6a6a6a;"></div>
<div style="left:1817.0px;top:1817.6px;width:494.0px;height:65.9px;background:#d6d2cb;"></div>
<div style="left:2311.0px;top:1817.6px;width:13.0px;height:65.9px;background:#eaa800;"></div>
<div class="t" style="left:1904.0px;top:1828.8px;font-size:43.5px;line-height:43.5px;color:#000;font-weight:400;">[3]</div>
<div style="left:1817.0px;top:1885.0px;width:505.0px;height:72.9px;background:#6a6a6a;"></div>
<div style="left:1817.0px;top:1888.5px;width:494.0px;height:65.9px;background:#d6d2cb;"></div>
<div style="left:2311.0px;top:1888.5px;width:13.0px;height:65.9px;background:#eaa800;"></div>
<div class="t" style="left:1904.0px;top:1899.7px;font-size:43.5px;line-height:43.5px;color:#000;font-weight:400;">[4]</div>
<div style="left:1817.0px;top:1955.9px;width:505.0px;height:72.9px;background:#6a6a6a;"></div>
<div style="left:1817.0px;top:1959.4px;width:494.0px;height:65.9px;background:#d6d2cb;"></div>
<div style="left:2311.0px;top:1959.4px;width:13.0px;height:65.9px;background:#eaa800;"></div>
<div class="t" style="left:1904.0px;top:1970.6px;font-size:43.5px;line-height:43.5px;color:#000;font-weight:400;">[5]</div>
<div style="left:1817.0px;top:2026.8px;width:505.0px;height:72.9px;background:#6a6a6a;"></div>
<div style="left:1817.0px;top:2030.3px;width:494.0px;height:65.9px;background:#d6d2cb;"></div>
<div style="left:2311.0px;top:2030.3px;width:13.0px;height:65.9px;background:#eaa800;"></div>
<div class="t" style="left:1904.0px;top:2041.5px;font-size:43.5px;line-height:43.5px;color:#000;font-weight:400;">[6]</div>
<div style="left:1817.0px;top:2097.7px;width:505.0px;height:72.9px;background:#6a6a6a;"></div>
<div style="left:1817.0px;top:2101.2px;width:494.0px;height:65.9px;background:#d6d2cb;"></div>
<div style="left:2311.0px;top:2101.2px;width:13.0px;height:65.9px;background:#eaa800;"></div>
<div class="t" style="left:1904.0px;top:2112.4px;font-size:43.5px;line-height:43.5px;color:#000;font-weight:400;">[7]</div>
<div style="left:1817.0px;top:2168.6px;width:505.0px;height:72.9px;background:#6a6a6a;"></div>
<div style="left:1817.0px;top:2172.1px;width:494.0px;height:65.9px;background:#d6d2cb;"></div>
<div style="left:2311.0px;top:2172.1px;width:13.0px;height:65.9px;background:#eaa800;"></div>
<div class="t" style="left:1904.0px;top:2183.3px;font-size:43.5px;line-height:43.5px;color:#000;font-weight:400;">[8]</div>
<div style="left:1817.0px;top:2239.5px;width:505.0px;height:72.9px;background:#6a6a6a;"></div>
<div style="left:1817.0px;top:2243.0px;width:494.0px;height:65.9px;background:#d6d2cb;"></div>
<div style="left:2311.0px;top:2243.0px;width:13.0px;height:65.9px;background:#eaa800;"></div>
<div class="t" style="left:1904.0px;top:2254.1px;font-size:43.5px;line-height:43.5px;color:#000;font-weight:400;">[9]</div>
<div style="left:1817.0px;top:2310.4px;width:505.0px;height:72.9px;background:#6a6a6a;"></div>
<div style="left:1817.0px;top:2313.9px;width:494.0px;height:65.9px;background:#d6d2cb;"></div>
<div style="left:2311.0px;top:2313.9px;width:13.0px;height:65.9px;background:#eaa800;"></div>
<div class="t" style="left:1904.0px;top:2325.0px;font-size:43.5px;line-height:43.5px;color:#000;font-weight:400;">[10]</div>
<div style="left:1817.0px;top:2381.2px;width:505.0px;height:72.9px;background:#6a6a6a;"></div>
<div style="left:1817.0px;top:2384.8px;width:494.0px;height:65.9px;background:#d6d2cb;"></div>
<div style="left:2311.0px;top:2384.8px;width:13.0px;height:65.9px;background:#eaa800;"></div>
<div class="t" style="left:1904.0px;top:2395.9px;font-size:43.5px;line-height:43.5px;color:#000;font-weight:400;">[11]</div>
<div style="left:1817.0px;top:2452.1px;width:505.0px;height:72.9px;background:#6a6a6a;"></div>
<div style="left:1817.0px;top:2455.6px;width:494.0px;height:65.9px;background:#d6d2cb;"></div>
<div style="left:2311.0px;top:2455.6px;width:13.0px;height:65.9px;background:#eaa800;"></div>
<div class="t" style="left:1904.0px;top:2466.8px;font-size:43.5px;line-height:43.5px;color:#000;font-weight:400;">[12]</div>
<div style="left:1817.0px;top:2523.0px;width:505.0px;height:72.9px;background:#6a6a6a;"></div>
<div style="left:1817.0px;top:2526.5px;width:494.0px;height:65.9px;background:#d6d2cb;"></div>
<div style="left:2311.0px;top:2526.5px;width:13.0px;height:65.9px;background:#eaa800;"></div>
<div class="t" style="left:1904.0px;top:2537.7px;font-size:43.5px;line-height:43.5px;color:#000;font-weight:400;">[13]</div>
<div style="left:1817.0px;top:2593.9px;width:505.0px;height:72.9px;background:#6a6a6a;"></div>
<div style="left:1817.0px;top:2597.4px;width:494.0px;height:65.9px;background:#d6d2cb;"></div>
<div style="left:2311.0px;top:2597.4px;width:13.0px;height:65.9px;background:#eaa800;"></div>
<div class="t" style="left:1904.0px;top:2608.6px;font-size:43.5px;line-height:43.5px;color:#000;font-weight:400;">[14]</div>
<div style="left:1817.0px;top:2664.8px;width:505.0px;height:72.9px;background:#6a6a6a;"></div>
<div style="left:1817.0px;top:2668.3px;width:494.0px;height:65.9px;background:#d6d2cb;"></div>
<div style="left:2311.0px;top:2668.3px;width:13.0px;height:65.9px;background:#eaa800;"></div>
<div class="t" style="left:1904.0px;top:2679.5px;font-size:43.5px;line-height:43.5px;color:#000;font-weight:400;">[15]</div>
<div style="left:1817.0px;top:2735.7px;width:505.0px;height:72.9px;background:#6a6a6a;"></div>
<div style="left:1817.0px;top:2739.2px;width:494.0px;height:65.9px;background:#d6d2cb;"></div>
<div style="left:2311.0px;top:2739.2px;width:13.0px;height:65.9px;background:#eaa800;"></div>
<div class="t" style="left:1904.0px;top:2750.4px;font-size:43.5px;line-height:43.5px;color:#000;font-weight:400;">[16]</div>
<div style="left:1817.0px;top:2806.6px;width:505.0px;height:72.9px;background:#6a6a6a;"></div>
<div style="left:1817.0px;top:2810.1px;width:494.0px;height:65.9px;background:#d6d2cb;"></div>
<div style="left:2311.0px;top:2810.1px;width:13.0px;height:65.9px;background:#eaa800;"></div>
<div class="t" style="left:1904.0px;top:2821.3px;font-size:43.5px;line-height:43.5px;color:#000;font-weight:400;">[17]</div>
<div style="left:1817.0px;top:2877.5px;width:505.0px;height:72.9px;background:#6a6a6a;"></div>
<div style="left:1817.0px;top:2881.0px;width:494.0px;height:65.9px;background:#d6d2cb;"></div>
<div style="left:2311.0px;top:2881.0px;width:13.0px;height:65.9px;background:#eaa800;"></div>
<div class="t" style="left:1904.0px;top:2892.2px;font-size:43.5px;line-height:43.5px;color:#000;font-weight:400;">[18]</div>
<div style="left:1817.0px;top:2948.4px;width:505.0px;height:72.9px;background:#6a6a6a;"></div>
<div style="left:1817.0px;top:2951.9px;width:505.0px;height:53.1px;background:#d6d2cb;"></div>
<div class="t" style="left:1868.0px;top:2963.0px;font-size:43.5px;line-height:43.5px;color:#000;font-weight:400;">Pixel Tune to Sign</div>
<div style="left:2324.0px;top:610.0px;width:1876.0px;height:71.5px;background:#000000;"></div>
<div style="left:2324.0px;top:680.9px;width:1876.0px;height:71.5px;background:#222222;"></div>
<div style="left:2324.0px;top:751.8px;width:1876.0px;height:71.5px;background:#000000;"></div>
<div style="left:2324.0px;top:822.7px;width:1876.0px;height:71.5px;background:#222222;"></div>
<div style="left:2324.0px;top:893.6px;width:1876.0px;height:71.5px;background:#000000;"></div>
<div style="left:2324.0px;top:964.5px;width:1876.0px;height:71.5px;background:#222222;"></div>
<div style="left:2324.0px;top:1035.3px;width:1876.0px;height:71.5px;background:#000000;"></div>
<div style="left:2324.0px;top:1106.2px;width:1876.0px;height:71.5px;background:#222222;"></div>
<div style="left:2324.0px;top:1177.1px;width:1876.0px;height:71.5px;background:#000000;"></div>
<div style="left:2324.0px;top:1248.0px;width:1876.0px;height:71.5px;background:#222222;"></div>
<div style="left:2324.0px;top:1318.9px;width:1876.0px;height:71.5px;background:#000000;"></div>
<div style="left:2324.0px;top:1389.8px;width:1876.0px;height:71.5px;background:#222222;"></div>
<div style="left:2324.0px;top:1460.7px;width:1876.0px;height:71.5px;background:#000000;"></div>
<div style="left:2324.0px;top:1531.6px;width:1876.0px;height:71.5px;background:#222222;"></div>
<div style="left:2324.0px;top:1602.5px;width:1876.0px;height:71.5px;background:#000000;"></div>
<div style="left:2324.0px;top:1673.3px;width:1876.0px;height:71.5px;background:#222222;"></div>
<div style="left:2324.0px;top:1744.2px;width:1876.0px;height:71.5px;background:#222222;"></div>
<div style="left:2324.0px;top:1744.2px;width:1876.0px;height:2.0px;background:#2c2c2c;"></div>
<div style="left:2324.0px;top:1815.1px;width:1876.0px;height:71.5px;background:#222222;"></div>
<div style="left:2324.0px;top:1815.1px;width:1876.0px;height:2.0px;background:#2c2c2c;"></div>
<div style="left:2324.0px;top:1886.0px;width:1876.0px;height:71.5px;background:#222222;"></div>
<div style="left:2324.0px;top:1886.0px;width:1876.0px;height:2.0px;background:#2c2c2c;"></div>
<div style="left:2324.0px;top:1956.9px;width:1876.0px;height:71.5px;background:#222222;"></div>
<div style="left:2324.0px;top:1956.9px;width:1876.0px;height:2.0px;background:#2c2c2c;"></div>
<div style="left:2324.0px;top:2027.8px;width:1876.0px;height:71.5px;background:#222222;"></div>
<div style="left:2324.0px;top:2027.8px;width:1876.0px;height:2.0px;background:#2c2c2c;"></div>
<div style="left:2324.0px;top:2098.7px;width:1876.0px;height:71.5px;background:#222222;"></div>
<div style="left:2324.0px;top:2098.7px;width:1876.0px;height:2.0px;background:#2c2c2c;"></div>
<div style="left:2324.0px;top:2169.6px;width:1876.0px;height:71.5px;background:#222222;"></div>
<div style="left:2324.0px;top:2169.6px;width:1876.0px;height:2.0px;background:#2c2c2c;"></div>
<div style="left:2324.0px;top:2240.5px;width:1876.0px;height:71.5px;background:#222222;"></div>
<div style="left:2324.0px;top:2240.5px;width:1876.0px;height:2.0px;background:#2c2c2c;"></div>
<div style="left:2324.0px;top:2311.4px;width:1876.0px;height:71.5px;background:#222222;"></div>
<div style="left:2324.0px;top:2311.4px;width:1876.0px;height:2.0px;background:#2c2c2c;"></div>
<div style="left:2324.0px;top:2382.2px;width:1876.0px;height:71.5px;background:#222222;"></div>
<div style="left:2324.0px;top:2382.2px;width:1876.0px;height:2.0px;background:#2c2c2c;"></div>
<div style="left:2324.0px;top:2453.1px;width:1876.0px;height:71.5px;background:#222222;"></div>
<div style="left:2324.0px;top:2453.1px;width:1876.0px;height:2.0px;background:#2c2c2c;"></div>
<div style="left:2324.0px;top:2524.0px;width:1876.0px;height:71.5px;background:#222222;"></div>
<div style="left:2324.0px;top:2524.0px;width:1876.0px;height:2.0px;background:#2c2c2c;"></div>
<div style="left:2324.0px;top:2594.9px;width:1876.0px;height:71.5px;background:#222222;"></div>
<div style="left:2324.0px;top:2594.9px;width:1876.0px;height:2.0px;background:#2c2c2c;"></div>
<div style="left:2324.0px;top:2665.8px;width:1876.0px;height:71.5px;background:#222222;"></div>
<div style="left:2324.0px;top:2665.8px;width:1876.0px;height:2.0px;background:#2c2c2c;"></div>
<div style="left:2324.0px;top:2736.7px;width:1876.0px;height:71.5px;background:#222222;"></div>
<div style="left:2324.0px;top:2736.7px;width:1876.0px;height:2.0px;background:#2c2c2c;"></div>
<div style="left:2324.0px;top:2807.6px;width:1876.0px;height:71.5px;background:#222222;"></div>
<div style="left:2324.0px;top:2807.6px;width:1876.0px;height:2.0px;background:#2c2c2c;"></div>
<div style="left:2324.0px;top:2878.5px;width:1876.0px;height:71.5px;background:#222222;"></div>
<div style="left:2324.0px;top:2878.5px;width:1876.0px;height:2.0px;background:#2c2c2c;"></div>
<div style="left:2324.0px;top:2949.4px;width:1876.0px;height:71.5px;background:#000000;"></div>
<div style="left:2377.0px;top:610.0px;width:2.0px;height:2395.0px;background:#3a3a3a;"></div>
<div style="left:2699.0px;top:610.0px;width:2.0px;height:2395.0px;background:#3a3a3a;"></div>
<div style="left:3021.0px;top:610.0px;width:2.0px;height:2395.0px;background:#3a3a3a;"></div>
<div style="left:3344.0px;top:610.0px;width:2.0px;height:2395.0px;background:#3a3a3a;"></div>
<div style="left:3666.0px;top:610.0px;width:2.0px;height:2395.0px;background:#3a3a3a;"></div>
<div style="left:3988.6px;top:610.0px;width:2.0px;height:2395.0px;background:#3a3a3a;"></div>
<div style="left:2324.0px;top:643.5px;width:1876.0px;height:2.2px;background:#f0f0f0;"></div>
<div style="left:2324.0px;top:714.5px;width:1876.0px;height:2.2px;background:#f0f0f0;"></div>
<div style="left:2492.9px;top:693.0px;width:2.2px;height:44.0px;background:#f0f0f0;"></div>
<div style="left:2769.9px;top:693.0px;width:2.2px;height:44.0px;background:#f0f0f0;"></div>
<div style="left:3049.9px;top:693.0px;width:2.2px;height:44.0px;background:#f0f0f0;"></div>
<div style="left:3320.9px;top:693.0px;width:2.2px;height:44.0px;background:#f0f0f0;"></div>
<div style="left:3595.4px;top:693.0px;width:2.2px;height:44.0px;background:#f0f0f0;"></div>
<div style="left:3871.9px;top:693.0px;width:2.2px;height:44.0px;background:#f0f0f0;"></div>
<div style="left:4149.6px;top:693.0px;width:2.2px;height:44.0px;background:#f0f0f0;"></div>
<div class="t" style="left:2375.0px;top:687px;width:69.0px;height:58px;background:#fdfcc8;color:#111;font-size:40px;line-height:62px;text-align:center;box-shadow:inset 0 0 0 1px #b8b890">77</div>
<div class="t" style="left:2600.0px;top:687px;width:69.5px;height:58px;background:#fdfcc8;color:#111;font-size:40px;line-height:62px;text-align:center;box-shadow:inset 0 0 0 1px #b8b890">78</div>
<div class="t" style="left:2877.7px;top:687px;width:69.3px;height:58px;background:#fdfcc8;color:#111;font-size:40px;line-height:62px;text-align:center;box-shadow:inset 0 0 0 1px #b8b890">79</div>
<div class="t" style="left:3155.0px;top:687px;width:69.0px;height:58px;background:#fdfcc8;color:#111;font-size:40px;line-height:62px;text-align:center;box-shadow:inset 0 0 0 1px #b8b890">80</div>
<div class="t" style="left:3425.6px;top:687px;width:69.0px;height:58px;background:#fdfcc8;color:#111;font-size:40px;line-height:62px;text-align:center;box-shadow:inset 0 0 0 1px #b8b890">81</div>
<div class="t" style="left:3702.5px;top:687px;width:69.5px;height:58px;background:#fdfcc8;color:#111;font-size:40px;line-height:62px;text-align:center;box-shadow:inset 0 0 0 1px #b8b890">82</div>
<div class="t" style="left:3979.8px;top:687px;width:69.2px;height:58px;background:#fdfcc8;color:#111;font-size:40px;line-height:62px;text-align:center;box-shadow:inset 0 0 0 1px #b8b890">83</div>
<div style="left:2324.0px;top:784.5px;width:1876.0px;height:2.2px;background:#f0f0f0;"></div>
<div style="left:2357.7px;top:765.0px;width:2.2px;height:42.0px;background:#f0f0f0;"></div>
<div style="left:2425.3px;top:765.0px;width:2.2px;height:42.0px;background:#f0f0f0;"></div>
<div style="left:2492.9px;top:765.0px;width:2.2px;height:42.0px;background:#f0f0f0;"></div>
<div style="left:2560.3px;top:765.0px;width:2.2px;height:42.0px;background:#f0f0f0;"></div>
<div style="left:2630.9px;top:765.0px;width:2.2px;height:42.0px;background:#f0f0f0;"></div>
<div style="left:2698.9px;top:765.0px;width:2.2px;height:42.0px;background:#f0f0f0;"></div>
<div style="left:2769.9px;top:765.0px;width:2.2px;height:42.0px;background:#f0f0f0;"></div>
<div style="left:2840.9px;top:765.0px;width:2.2px;height:42.0px;background:#f0f0f0;"></div>
<div style="left:2911.6px;top:765.0px;width:2.2px;height:42.0px;background:#f0f0f0;"></div>
<div style="left:2979.7px;top:765.0px;width:2.2px;height:42.0px;background:#f0f0f0;"></div>
<div style="left:3050.5px;top:765.0px;width:2.2px;height:42.0px;background:#f0f0f0;"></div>
<div style="left:3118.6px;top:765.0px;width:2.2px;height:42.0px;background:#f0f0f0;"></div>
<div style="left:3185.6px;top:765.0px;width:2.2px;height:42.0px;background:#f0f0f0;"></div>
<div style="left:3253.4px;top:765.0px;width:2.2px;height:42.0px;background:#f0f0f0;"></div>
<div style="left:3320.9px;top:765.0px;width:2.2px;height:42.0px;background:#f0f0f0;"></div>
<div style="left:3388.6px;top:765.0px;width:2.2px;height:42.0px;background:#f0f0f0;"></div>
<div style="left:3459.9px;top:765.0px;width:2.2px;height:42.0px;background:#f0f0f0;"></div>
<div style="left:3527.5px;top:765.0px;width:2.2px;height:42.0px;background:#f0f0f0;"></div>
<div style="left:3595.4px;top:765.0px;width:2.2px;height:42.0px;background:#f0f0f0;"></div>
<div style="left:3665.9px;top:765.0px;width:2.2px;height:42.0px;background:#f0f0f0;"></div>
<div style="left:3733.4px;top:765.0px;width:2.2px;height:42.0px;background:#f0f0f0;"></div>
<div style="left:3804.9px;top:765.0px;width:2.2px;height:42.0px;background:#f0f0f0;"></div>
<div style="left:3872.3px;top:765.0px;width:2.2px;height:42.0px;background:#f0f0f0;"></div>
<div style="left:3939.9px;top:765.0px;width:2.2px;height:42.0px;background:#f0f0f0;"></div>
<div style="left:4010.7px;top:765.0px;width:2.2px;height:42.0px;background:#f0f0f0;"></div>
<div style="left:4081.6px;top:765.0px;width:2.2px;height:42.0px;background:#f0f0f0;"></div>
<div style="left:4149.6px;top:765.0px;width:2.2px;height:42.0px;background:#f0f0f0;"></div>
<div style="left:2387.1px;top:756.0px;width:11.0px;height:60.0px;background:#fbf8c6;"></div>
<div style="left:2455.2px;top:756.0px;width:11.0px;height:60.0px;background:#fbf8c6;"></div>
<div style="left:2523.3px;top:756.0px;width:11.0px;height:60.0px;background:#fbf8c6;"></div>
<div style="left:2591.3px;top:756.0px;width:11.0px;height:60.0px;background:#fbf8c6;"></div>
<div style="left:2662.1px;top:756.0px;width:11.0px;height:60.0px;background:#fbf8c6;"></div>
<div style="left:2730.2px;top:756.0px;width:11.0px;height:60.0px;background:#fbf8c6;"></div>
<div style="left:2801.0px;top:756.0px;width:11.0px;height:60.0px;background:#fbf8c6;"></div>
<div style="left:2871.8px;top:756.0px;width:11.0px;height:60.0px;background:#fbf8c6;"></div>
<div style="left:2942.5px;top:756.0px;width:11.0px;height:60.0px;background:#fbf8c6;"></div>
<div style="left:3010.5px;top:756.0px;width:11.0px;height:60.0px;background:#fbf8c6;"></div>
<div style="left:3079.9px;top:756.0px;width:11.0px;height:60.0px;background:#fbf8c6;"></div>
<div style="left:3148.0px;top:756.0px;width:11.0px;height:60.0px;background:#fbf8c6;"></div>
<div style="left:3216.1px;top:756.0px;width:11.0px;height:60.0px;background:#fbf8c6;"></div>
<div style="left:3283.1px;top:756.0px;width:11.0px;height:60.0px;background:#fbf8c6;"></div>
<div style="left:3350.5px;top:756.0px;width:11.0px;height:60.0px;background:#fbf8c6;"></div>
<div style="left:3420.1px;top:756.0px;width:11.0px;height:60.0px;background:#fbf8c6;"></div>
<div style="left:3489.1px;top:756.0px;width:11.0px;height:60.0px;background:#fbf8c6;"></div>
<div style="left:3557.5px;top:756.0px;width:11.0px;height:60.0px;background:#fbf8c6;"></div>
<div style="left:3626.5px;top:756.0px;width:11.0px;height:60.0px;background:#fbf8c6;"></div>
<div style="left:3695.5px;top:756.0px;width:11.0px;height:60.0px;background:#fbf8c6;"></div>
<div style="left:3764.5px;top:756.0px;width:11.0px;height:60.0px;background:#fbf8c6;"></div>
<div style="left:3833.5px;top:756.0px;width:11.0px;height:60.0px;background:#fbf8c6;"></div>
<div style="left:3902.5px;top:756.0px;width:11.0px;height:60.0px;background:#fbf8c6;"></div>
<div style="left:3971.5px;top:756.0px;width:11.0px;height:60.0px;background:#fbf8c6;"></div>
<div style="left:4041.5px;top:756.0px;width:11.0px;height:60.0px;background:#fbf8c6;"></div>
<div style="left:4110.5px;top:756.0px;width:11.0px;height:60.0px;background:#fbf8c6;"></div>
<div style="left:4179.5px;top:756.0px;width:11.0px;height:60.0px;background:#fbf8c6;"></div>
<svg style="left:2934px;top:1609.5px" width="16" height="58"><path d="M2 0 V58 M14 0 V58 M2 29 H14" stroke="#d0d0d0" stroke-width="2.2" fill="none"/></svg>
<svg style="left:2971px;top:1609.5px" width="16" height="58"><path d="M2 0 V58 M14 0 V58 M2 29 H14" stroke="#d0d0d0" stroke-width="2.2" fill="none"/></svg>
<svg style="left:3011px;top:1609.5px" width="16" height="58"><path d="M2 0 V58 M14 0 V58 M2 29 H14" stroke="#d0d0d0" stroke-width="2.2" fill="none"/></svg>
<svg style="left:2906px;top:1751.2px" width="16" height="58"><path d="M2 0 V58 M14 0 V58 M2 29 H14" stroke="#d0d0d0" stroke-width="2.2" fill="none"/></svg>
<svg style="left:2944px;top:1751.2px" width="16" height="58"><path d="M2 0 V58 M14 0 V58 M2 29 H14" stroke="#d0d0d0" stroke-width="2.2" fill="none"/></svg>
<svg style="left:2983px;top:1751.2px" width="16" height="58"><path d="M2 0 V58 M14 0 V58 M2 29 H14" stroke="#d0d0d0" stroke-width="2.2" fill="none"/></svg>
<div style="left:3206px;top:1609.5px;width:142px;height:57px;background:linear-gradient(90deg,#7a10ff 0%,#d9b8ff 45%,#b8a0d0 60%,#000 100%)"></div>
<div style="left:3206.0px;top:1636.5px;width:142.0px;height:2.0px;background:#e0e0e0;"></div>
<div style="left:3262px;top:1620.5px;width:34px;height:33px;background:linear-gradient(90deg,#b040ff,#f0d8ff);border:2px solid #ddd;box-sizing:border-box"></div>
<div style="left:3205.0px;top:1609.5px;width:2.0px;height:57.0px;background:#c8c8c8;"></div>
<div style="left:3347.0px;top:1609.5px;width:2.0px;height:57.0px;background:#c8c8c8;"></div>
<div style="left:3489px;top:1609.5px;width:143px;height:57px;background:linear-gradient(90deg,#7a10ff 0%,#d9b8ff 45%,#b8a0d0 60%,#000 100%)"></div>
<div style="left:3489.0px;top:1636.5px;width:143.0px;height:2.0px;background:#e0e0e0;"></div>
<div style="left:3546px;top:1620.5px;width:34px;height:33px;background:linear-gradient(90deg,#b040ff,#f0d8ff);border:2px solid #ddd;box-sizing:border-box"></div>
<div style="left:3488.0px;top:1609.5px;width:2.0px;height:57.0px;background:#c8c8c8;"></div>
<div style="left:3631.0px;top:1609.5px;width:2.0px;height:57.0px;background:#c8c8c8;"></div>
<div style="left:2324px;top:1679.3px;width:724px;height:58px;background:linear-gradient(180deg,rgba(0,0,0,.95) 0%,rgba(0,0,0,0) 45%,rgba(0,0,0,0) 55%,rgba(0,0,0,.95) 100%),linear-gradient(90deg,#c0109a 0%,#9010c0 45%,#6a10f0 100%)"></div>
<div style="left:2324.0px;top:1707.3px;width:724.0px;height:2.0px;background:#f0c0f0;"></div>
<div style="left:2669px;top:1690.3px;width:35px;height:34px;background:linear-gradient(90deg,#a020ff,#f0e0ff);border:2px solid #ccc;box-sizing:border-box"></div>
<div style="left:3047.0px;top:1679.3px;width:2.0px;height:58.0px;background:#c8c8c8;"></div>
<div style="left:3057.6px;top:1682.3px;width:97.9px;height:52.0px;background:#ffffff;"></div>
<div style="left:3155.5px;top:1692.3px;width:68.5px;height:32px;background:linear-gradient(90deg,#ff0000,#000)"></div>
<div style="left:3056.6px;top:1680.3px;width:2.0px;height:58.0px;background:#c8c8c8;"></div>
<div style="left:3225.0px;top:1680.3px;width:2.0px;height:58.0px;background:#c8c8c8;"></div>
<div style="left:3329.0px;top:1682.3px;width:97.7px;height:52.0px;background:#ffffff;"></div>
<div style="left:3426.7px;top:1692.3px;width:69.9px;height:32px;background:linear-gradient(90deg,#dcb8ff,#8010ff)"></div>
<div style="left:3328.0px;top:1680.3px;width:2.0px;height:58.0px;background:#c8c8c8;"></div>
<div style="left:3497.6px;top:1680.3px;width:2.0px;height:58.0px;background:#c8c8c8;"></div>
<div style="left:3083.4px;top:1753.2px;width:98.2px;height:52.0px;background:#ffffff;"></div>
<div style="left:3181.6px;top:1763.2px;width:69.4px;height:32px;background:linear-gradient(90deg,#ff0000,#000)"></div>
<div style="left:3082.4px;top:1751.2px;width:2.0px;height:58.0px;background:#c8c8c8;"></div>
<div style="left:3252.0px;top:1751.2px;width:2.0px;height:58.0px;background:#c8c8c8;"></div>
<div style="left:3354.3px;top:1753.2px;width:98.2px;height:52.0px;background:#ffffff;"></div>
<div style="left:3452.5px;top:1763.2px;width:69.1px;height:32px;background:linear-gradient(90deg,#dcb8ff,#8010ff)"></div>
<div style="left:3353.3px;top:1751.2px;width:2.0px;height:58.0px;background:#c8c8c8;"></div>
<div style="left:3522.6px;top:1751.2px;width:2.0px;height:58.0px;background:#c8c8c8;"></div>
<div style="left:3122.0px;top:1824.1px;width:98.0px;height:52.0px;background:#ffffff;"></div>
<div style="left:3220.0px;top:1834.1px;width:70.0px;height:32px;background:linear-gradient(90deg,#ff0000,#000)"></div>
<div style="left:3121.0px;top:1822.1px;width:2.0px;height:58.0px;background:#c8c8c8;"></div>
<div style="left:3291.0px;top:1822.1px;width:2.0px;height:58.0px;background:#c8c8c8;"></div>
<div style="left:3393.4px;top:1824.1px;width:97.6px;height:52.0px;background:#ffffff;"></div>
<div style="left:3491.0px;top:1834.1px;width:70.0px;height:32px;background:linear-gradient(90deg,#dcb8ff,#8010ff)"></div>
<div style="left:3392.4px;top:1822.1px;width:2.0px;height:58.0px;background:#c8c8c8;"></div>
<div style="left:3562.0px;top:1822.1px;width:2.0px;height:58.0px;background:#c8c8c8;"></div>
<div style="left:3154.0px;top:1895.0px;width:98.0px;height:52.0px;background:#ffffff;"></div>
<div style="left:3252.0px;top:1905.0px;width:70.0px;height:32px;background:linear-gradient(90deg,#ff0000,#000)"></div>
<div style="left:3153.0px;top:1893.0px;width:2.0px;height:58.0px;background:#c8c8c8;"></div>
<div style="left:3323.0px;top:1893.0px;width:2.0px;height:58.0px;background:#c8c8c8;"></div>
<div style="left:3425.6px;top:1895.0px;width:98.0px;height:52.0px;background:#ffffff;"></div>
<div style="left:3523.6px;top:1905.0px;width:69.0px;height:32px;background:linear-gradient(90deg,#dcb8ff,#8010ff)"></div>
<div style="left:3424.6px;top:1893.0px;width:2.0px;height:58.0px;background:#c8c8c8;"></div>
<div style="left:3593.6px;top:1893.0px;width:2.0px;height:58.0px;background:#c8c8c8;"></div>
<div style="left:3180.5px;top:1965.9px;width:97.5px;height:52.0px;background:#ffffff;"></div>
<div style="left:3278.0px;top:1975.9px;width:70.0px;height:32px;background:linear-gradient(90deg,#ff0000,#000)"></div>
<div style="left:3179.5px;top:1963.9px;width:2.0px;height:58.0px;background:#c8c8c8;"></div>
<div style="left:3349.0px;top:1963.9px;width:2.0px;height:58.0px;background:#c8c8c8;"></div>
<div style="left:3450.7px;top:1965.9px;width:98.3px;height:52.0px;background:#ffffff;"></div>
<div style="left:3549.0px;top:1975.9px;width:69.0px;height:32px;background:linear-gradient(90deg,#dcb8ff,#8010ff)"></div>
<div style="left:3449.7px;top:1963.9px;width:2.0px;height:58.0px;background:#c8c8c8;"></div>
<div style="left:3619.0px;top:1963.9px;width:2.0px;height:58.0px;background:#c8c8c8;"></div>
<div style="left:3219.0px;top:2036.8px;width:98.0px;height:52.0px;background:#ffffff;"></div>
<div style="left:3317.0px;top:2046.8px;width:69.0px;height:32px;background:linear-gradient(90deg,#ff0000,#000)"></div>
<div style="left:3218.0px;top:2034.8px;width:2.0px;height:58.0px;background:#c8c8c8;"></div>
<div style="left:3387.0px;top:2034.8px;width:2.0px;height:58.0px;background:#c8c8c8;"></div>
<div style="left:3489.4px;top:2036.8px;width:98.2px;height:52.0px;background:#ffffff;"></div>
<div style="left:3587.6px;top:2046.8px;width:70.2px;height:32px;background:linear-gradient(90deg,#dcb8ff,#8010ff)"></div>
<div style="left:3488.4px;top:2034.8px;width:2.0px;height:58.0px;background:#c8c8c8;"></div>
<div style="left:3658.8px;top:2034.8px;width:2.0px;height:58.0px;background:#c8c8c8;"></div>
<div style="left:3057.6px;top:2107.7px;width:97.9px;height:52.0px;background:#ffffff;"></div>
<div style="left:3155.5px;top:2117.7px;width:68.5px;height:32px;background:linear-gradient(90deg,#ff0000,#000)"></div>
<div style="left:3056.6px;top:2105.7px;width:2.0px;height:58.0px;background:#c8c8c8;"></div>
<div style="left:3225.0px;top:2105.7px;width:2.0px;height:58.0px;background:#c8c8c8;"></div>
<div style="left:3329.0px;top:2107.7px;width:97.7px;height:52.0px;background:#ffffff;"></div>
<div style="left:3426.7px;top:2117.7px;width:69.9px;height:32px;background:linear-gradient(90deg,#dcb8ff,#8010ff)"></div>
<div style="left:3328.0px;top:2105.7px;width:2.0px;height:58.0px;background:#c8c8c8;"></div>
<div style="left:3497.6px;top:2105.7px;width:2.0px;height:58.0px;background:#c8c8c8;"></div>
<div style="left:3083.4px;top:2178.6px;width:98.2px;height:52.0px;background:#ffffff;"></div>
<div style="left:3181.6px;top:2188.6px;width:69.4px;height:32px;background:linear-gradient(90deg,#ff0000,#000)"></div>
<div style="left:3082.4px;top:2176.6px;width:2.0px;height:58.0px;background:#c8c8c8;"></div>
<div style="left:3252.0px;top:2176.6px;width:2.0px;height:58.0px;background:#c8c8c8;"></div>
<div style="left:3354.3px;top:2178.6px;width:98.2px;height:52.0px;background:#ffffff;"></div>
<div style="left:3452.5px;top:2188.6px;width:69.1px;height:32px;background:linear-gradient(90deg,#dcb8ff,#8010ff)"></div>
<div style="left:3353.3px;top:2176.6px;width:2.0px;height:58.0px;background:#c8c8c8;"></div>
<div style="left:3522.6px;top:2176.6px;width:2.0px;height:58.0px;background:#c8c8c8;"></div>
<div style="left:3122.0px;top:2249.5px;width:98.0px;height:52.0px;background:#ffffff;"></div>
<div style="left:3220.0px;top:2259.5px;width:70.0px;height:32px;background:linear-gradient(90deg,#ff0000,#000)"></div>
<div style="left:3121.0px;top:2247.5px;width:2.0px;height:58.0px;background:#c8c8c8;"></div>
<div style="left:3291.0px;top:2247.5px;width:2.0px;height:58.0px;background:#c8c8c8;"></div>
<div style="left:3393.4px;top:2249.5px;width:97.6px;height:52.0px;background:#ffffff;"></div>
<div style="left:3491.0px;top:2259.5px;width:70.0px;height:32px;background:linear-gradient(90deg,#dcb8ff,#8010ff)"></div>
<div style="left:3392.4px;top:2247.5px;width:2.0px;height:58.0px;background:#c8c8c8;"></div>
<div style="left:3562.0px;top:2247.5px;width:2.0px;height:58.0px;background:#c8c8c8;"></div>
<div style="left:3154.0px;top:2320.4px;width:98.0px;height:52.0px;background:#ffffff;"></div>
<div style="left:3252.0px;top:2330.4px;width:70.0px;height:32px;background:linear-gradient(90deg,#ff0000,#000)"></div>
<div style="left:3153.0px;top:2318.4px;width:2.0px;height:58.0px;background:#c8c8c8;"></div>
<div style="left:3323.0px;top:2318.4px;width:2.0px;height:58.0px;background:#c8c8c8;"></div>
<div style="left:3425.6px;top:2320.4px;width:98.0px;height:52.0px;background:#ffffff;"></div>
<div style="left:3523.6px;top:2330.4px;width:69.0px;height:32px;background:linear-gradient(90deg,#dcb8ff,#8010ff)"></div>
<div style="left:3424.6px;top:2318.4px;width:2.0px;height:58.0px;background:#c8c8c8;"></div>
<div style="left:3593.6px;top:2318.4px;width:2.0px;height:58.0px;background:#c8c8c8;"></div>
<div style="left:3180.5px;top:2391.2px;width:97.5px;height:52.0px;background:#ffffff;"></div>
<div style="left:3278.0px;top:2401.2px;width:70.0px;height:32px;background:linear-gradient(90deg,#ff0000,#000)"></div>
<div style="left:3179.5px;top:2389.2px;width:2.0px;height:58.0px;background:#c8c8c8;"></div>
<div style="left:3349.0px;top:2389.2px;width:2.0px;height:58.0px;background:#c8c8c8;"></div>
<div style="left:3450.7px;top:2391.2px;width:98.3px;height:52.0px;background:#ffffff;"></div>
<div style="left:3549.0px;top:2401.2px;width:69.0px;height:32px;background:linear-gradient(90deg,#dcb8ff,#8010ff)"></div>
<div style="left:3449.7px;top:2389.2px;width:2.0px;height:58.0px;background:#c8c8c8;"></div>
<div style="left:3619.0px;top:2389.2px;width:2.0px;height:58.0px;background:#c8c8c8;"></div>
<div style="left:3597.0px;top:1707.3px;width:470.0px;height:2.5px;background:#d020d0;"></div>
<div style="left:3595.5px;top:1679.3px;width:3.0px;height:58.0px;background:#cfcfcf;"></div>
<div style="left:4065.5px;top:1679.3px;width:3.0px;height:58.0px;background:#d020d0;"></div>
<div style="left:3803px;top:1679.3px;width:60px;height:59px"><svg width="60" height="59" viewBox="0 0 60 59"><rect width="60" height="59" fill="#000"/><g transform="translate(0 59) skewX(-20.5) translate(0 -59)"><rect x="-29" y="0" width="10.5" height="59" fill="#00ff00"/><rect x="-9.5" y="0" width="10.5" height="59" fill="#ffff00"/><rect x="10" y="0" width="10.5" height="59" fill="#ff0000"/><rect x="29.5" y="0" width="10.5" height="59" fill="#00ff00"/><rect x="49" y="0" width="10.5" height="59" fill="#ffff00"/></g><rect x="1" y="1" width="58" height="57" fill="none" stroke="#ccc" stroke-width="2"/></svg></div>
<div style="left:4157.0px;top:1681.3px;width:43.0px;height:7.0px;background:#00ee00;"></div>
<div style="left:4157.0px;top:1707.3px;width:43.0px;height:2.5px;background:#cfcfcf;"></div>
<div style="left:4156.0px;top:1679.3px;width:3.0px;height:58.0px;background:#cfcfcf;"></div>
<div style="left:3597.0px;top:1778.2px;width:470.0px;height:2.5px;background:#cfcfcf;"></div>
<div style="left:3595.5px;top:1750.2px;width:3.0px;height:58.0px;background:#cfcfcf;"></div>
<div style="left:4065.5px;top:1750.2px;width:3.0px;height:58.0px;background:#cfcfcf;"></div>
<div style="left:3803px;top:1750.2px;width:60px;height:59px"><svg width="60" height="59" viewBox="0 0 60 59"><rect width="60" height="59" fill="#000"/><g transform="translate(0 59) skewX(-20.5) translate(0 -59)"><rect x="-29" y="0" width="10.5" height="59" fill="#00ff00"/><rect x="-9.5" y="0" width="10.5" height="59" fill="#ffff00"/><rect x="10" y="0" width="10.5" height="59" fill="#ff0000"/><rect x="29.5" y="0" width="10.5" height="59" fill="#00ff00"/><rect x="49" y="0" width="10.5" height="59" fill="#ffff00"/></g><rect x="1" y="1" width="58" height="57" fill="none" stroke="#ccc" stroke-width="2"/></svg></div>
<div style="left:4157.0px;top:1752.2px;width:43.0px;height:7.0px;background:#00ee00;"></div>
<div style="left:4157.0px;top:1778.2px;width:43.0px;height:2.5px;background:#cfcfcf;"></div>
<div style="left:4156.0px;top:1750.2px;width:3.0px;height:58.0px;background:#cfcfcf;"></div>
<div style="left:3597.0px;top:1849.1px;width:470.0px;height:2.5px;background:#cfcfcf;"></div>
<div style="left:3595.5px;top:1821.1px;width:3.0px;height:58.0px;background:#cfcfcf;"></div>
<div style="left:4065.5px;top:1821.1px;width:3.0px;height:58.0px;background:#cfcfcf;"></div>
<div style="left:3803px;top:1821.1px;width:60px;height:59px"><svg width="60" height="59" viewBox="0 0 60 59"><rect width="60" height="59" fill="#000"/><path d="M32 30 C18 22 28 4 48 2" stroke="#00ff00" stroke-width="17" fill="none"/><path d="M30 29 C14 22 2 40 8 60" stroke="#ffff00" stroke-width="17" fill="none"/><path d="M30 30 C42 44 52 38 62 44" stroke="#ff0000" stroke-width="17" fill="none"/><path d="M30 30 C36 50 50 52 62 60" stroke="#ff0000" stroke-width="12" fill="none"/><rect x="1" y="1" width="58" height="57" fill="none" stroke="#ccc" stroke-width="2"/></svg></div>
<div style="left:3597.0px;top:1920.0px;width:470.0px;height:2.5px;background:#cfcfcf;"></div>
<div style="left:3595.5px;top:1892.0px;width:3.0px;height:58.0px;background:#cfcfcf;"></div>
<div style="left:4065.5px;top:1892.0px;width:3.0px;height:58.0px;background:#cfcfcf;"></div>
<div style="left:3803px;top:1892.0px;width:60px;height:59px"><svg width="60" height="59" viewBox="0 0 60 59"><rect width="60" height="59" fill="#000"/><path d="M32 30 C18 22 28 4 48 2" stroke="#00ff00" stroke-width="17" fill="none"/><path d="M30 29 C14 22 2 40 8 60" stroke="#ffff00" stroke-width="17" fill="none"/><path d="M30 30 C42 44 52 38 62 44" stroke="#ff0000" stroke-width="17" fill="none"/><path d="M30 30 C36 50 50 52 62 60" stroke="#ff0000" stroke-width="12" fill="none"/><rect x="1" y="1" width="58" height="57" fill="none" stroke="#ccc" stroke-width="2"/></svg></div>
<div style="left:2324.0px;top:2133.7px;width:720.0px;height:2.5px;background:#cfcfcf;"></div>
<div style="left:2655px;top:2102.7px"><svg width="60" height="60" viewBox="0 0 60 60"><rect width="60" height="60" fill="#000"/><polyline points="1,35.9 2,33.3 3,31.3 4,30.2 5,30.0 6,30.8 7,32.4 8,34.8 9,37.7 10,41.0 11,44.3 12,47.5 13,50.2 14,52.3 15,53.6 16,54.0 17,53.4 18,52.0 19,49.7 20,46.9 21,43.7 22,40.3 23,37.1 24,34.3 25,32.0 26,30.6 27,30.0 28,30.4 29,31.7 30,33.8 31,36.5 32,39.7 33,43.0 34,46.3 35,49.2 36,51.6 37,53.2 38,54.0 39,53.8 40,52.7 41,50.7 42,48.1 43,45.0 44,41.7 45,38.4 46,35.3 47,32.8 48,31.0 49,30.1 50,30.1 51,31.0 52,32.8 53,35.3 54,38.4 55,41.7 56,45.0 57,48.1 58,50.7 59,52.7" fill="none" stroke="#ff8000" stroke-width="3.6"/><polyline points="1,33.0 2,30.4 3,28.4 4,27.3 5,27.1 6,27.9 7,29.5 8,31.9 9,34.8 10,38.1 11,41.4 12,44.6 13,47.3 14,49.4 15,50.7 16,51.1 17,50.5 18,49.1 19,46.8 20,44.0 21,40.8 22,37.4 23,34.2 24,31.4 25,29.1 26,27.7 27,27.1 28,27.5 29,28.8 30,30.9 31,33.6 32,36.8 33,40.1 34,43.4 35,46.3 36,48.7 37,50.3 38,51.1 39,50.9 40,49.8 41,47.8 42,45.2 43,42.1 44,38.8 45,35.5 46,32.4 47,29.9 48,28.1 49,27.2 50,27.2 51,28.1 52,29.9 53,32.4 54,35.5 55,38.8 56,42.1 57,45.2 58,47.8 59,49.8" fill="none" stroke="#ffe000" stroke-width="3.6"/><polyline points="1,30.1 2,27.5 3,25.5 4,24.4 5,24.2 6,25.0 7,26.6 8,29.0 9,31.9 10,35.2 11,38.5 12,41.7 13,44.4 14,46.5 15,47.8 16,48.2 17,47.6 18,46.2 19,43.9 20,41.1 21,37.9 22,34.5 23,31.3 24,28.5 25,26.2 26,24.8 27,24.2 28,24.6 29,25.9 30,28.0 31,30.7 32,33.9 33,37.2 34,40.5 35,43.4 36,45.8 37,47.4 38,48.2 39,48.0 40,46.9 41,44.9 42,42.3 43,39.2 44,35.9 45,32.6 46,29.5 47,27.0 48,25.2 49,24.3 50,24.3 51,25.2 52,27.0 53,29.5 54,32.6 55,35.9 56,39.2 57,42.3 58,44.9 59,46.9" fill="none" stroke="#80ff00" stroke-width="3.6"/><polyline points="1,27.2 2,24.6 3,22.6 4,21.5 5,21.3 6,22.1 7,23.7 8,26.1 9,29.0 10,32.3 11,35.6 12,38.8 13,41.5 14,43.6 15,44.9 16,45.3 17,44.7 18,43.3 19,41.0 20,38.2 21,35.0 22,31.6 23,28.4 24,25.6 25,23.3 26,21.9 27,21.3 28,21.7 29,23.0 30,25.1 31,27.8 32,31.0 33,34.3 34,37.6 35,40.5 36,42.9 37,44.5 38,45.3 39,45.1 40,44.0 41,42.0 42,39.4 43,36.3 44,33.0 45,29.7 46,26.6 47,24.1 48,22.3 49,21.4 50,21.4 51,22.3 52,24.1 53,26.6 54,29.7 55,33.0 56,36.3 57,39.4 58,42.0 59,44.0" fill="none" stroke="#00ff40" stroke-width="3.6"/><polyline points="1,24.3 2,21.7 3,19.7 4,18.6 5,18.4 6,19.2 7,20.8 8,23.2 9,26.1 10,29.4 11,32.7 12,35.9 13,38.6 14,40.7 15,42.0 16,42.4 17,41.8 18,40.4 19,38.1 20,35.3 21,32.1 22,28.7 23,25.5 24,22.7 25,20.4 26,19.0 27,18.4 28,18.8 29,20.1 30,22.2 31,24.9 32,28.1 33,31.4 34,34.7 35,37.6 36,40.0 37,41.6 38,42.4 39,42.2 40,41.1 41,39.1 42,36.5 43,33.4 44,30.1 45,26.8 46,23.7 47,21.2 48,19.4 49,18.5 50,18.5 51,19.4 52,21.2 53,23.7 54,26.8 55,30.1 56,33.4 57,36.5 58,39.1 59,41.1" fill="none" stroke="#00ffc0" stroke-width="3.6"/><polyline points="1,21.4 2,18.8 3,16.8 4,15.7 5,15.5 6,16.3 7,17.9 8,20.3 9,23.2 10,26.5 11,29.8 12,33.0 13,35.7 14,37.8 15,39.1 16,39.5 17,38.9 18,37.5 19,35.2 20,32.4 21,29.2 22,25.8 23,22.6 24,19.8 25,17.5 26,16.1 27,15.5 28,15.9 29,17.2 30,19.3 31,22.0 32,25.2 33,28.5 34,31.8 35,34.7 36,37.1 37,38.7 38,39.5 39,39.3 40,38.2 41,36.2 42,33.6 43,30.5 44,27.2 45,23.9 46,20.8 47,18.3 48,16.5 49,15.6 50,15.6 51,16.5 52,18.3 53,20.8 54,23.9 55,27.2 56,30.5 57,33.6 58,36.2 59,38.2" fill="none" stroke="#00e0ff" stroke-width="3.6"/><polyline points="1,18.5 2,15.9 3,13.9 4,12.8 5,12.6 6,13.4 7,15.0 8,17.4 9,20.3 10,23.6 11,26.9 12,30.1 13,32.8 14,34.9 15,36.2 16,36.6 17,36.0 18,34.6 19,32.3 20,29.5 21,26.3 22,22.9 23,19.7 24,16.9 25,14.6 26,13.2 27,12.6 28,13.0 29,14.3 30,16.4 31,19.1 32,22.3 33,25.6 34,28.9 35,31.8 36,34.2 37,35.8 38,36.6 39,36.4 40,35.3 41,33.3 42,30.7 43,27.6 44,24.3 45,21.0 46,17.9 47,15.4 48,13.6 49,12.7 50,12.7 51,13.6 52,15.4 53,17.9 54,21.0 55,24.3 56,27.6 57,30.7 58,33.3 59,35.3" fill="none" stroke="#0060ff" stroke-width="3.6"/><polyline points="1,15.6 2,13.0 3,11.0 4,9.9 5,9.7 6,10.5 7,12.1 8,14.5 9,17.4 10,20.7 11,24.0 12,27.2 13,29.9 14,32.0 15,33.3 16,33.7 17,33.1 18,31.7 19,29.4 20,26.6 21,23.4 22,20.0 23,16.8 24,14.0 25,11.7 26,10.3 27,9.7 28,10.1 29,11.4 30,13.5 31,16.2 32,19.4 33,22.7 34,26.0 35,28.9 36,31.3 37,32.9 38,33.7 39,33.5 40,32.4 41,30.4 42,27.8 43,24.7 44,21.4 45,18.1 46,15.0 47,12.5 48,10.7 49,9.8 50,9.8 51,10.7 52,12.5 53,15.0 54,18.1 55,21.4 56,24.7 57,27.8 58,30.4 59,32.4" fill="none" stroke="#6000ff" stroke-width="3.6"/><polyline points="1,12.7 2,10.1 3,8.1 4,7.0 5,6.8 6,7.6 7,9.2 8,11.6 9,14.5 10,17.8 11,21.1 12,24.3 13,27.0 14,29.1 15,30.4 16,30.8 17,30.2 18,28.8 19,26.5 20,23.7 21,20.5 22,17.1 23,13.9 24,11.1 25,8.8 26,7.4 27,6.8 28,7.2 29,8.5 30,10.6 31,13.3 32,16.5 33,19.8 34,23.1 35,26.0 36,28.4 37,30.0 38,30.8 39,30.6 40,29.5 41,27.5 42,24.9 43,21.8 44,18.5 45,15.2 46,12.1 47,9.6 48,7.8 49,6.9 50,6.9 51,7.8 52,9.6 53,12.1 54,15.2 55,18.5 56,21.8 57,24.9 58,27.5 59,29.5" fill="none" stroke="#c000ff" stroke-width="3.6"/><polyline points="1,9.8 2,7.2 3,5.2 4,4.1 5,3.9 6,4.7 7,6.3 8,8.7 9,11.6 10,14.9 11,18.2 12,21.4 13,24.1 14,26.2 15,27.5 16,27.9 17,27.3 18,25.9 19,23.6 20,20.8 21,17.6 22,14.2 23,11.0 24,8.2 25,5.9 26,4.5 27,3.9 28,4.3 29,5.6 30,7.7 31,10.4 32,13.6 33,16.9 34,20.2 35,23.1 36,25.5 37,27.1 38,27.9 39,27.7 40,26.6 41,24.6 42,22.0 43,18.9 44,15.6 45,12.3 46,9.2 47,6.7 48,4.9 49,4.0 50,4.0 51,4.9 52,6.7 53,9.2 54,12.3 55,15.6 56,18.9 57,22.0 58,24.6 59,26.6" fill="none" stroke="#ff00e0" stroke-width="3.6"/><rect x="1" y="1" width="58" height="58" fill="none" stroke="#ccc" stroke-width="2"/></svg></div>
<div style="left:2726.6px;top:2103.7px;width:317.4px;height:7.0px;background:#ff0000;"></div>
<div style="left:2726.6px;top:2110.7px;width:317.4px;height:2.0px;background:#000;"></div>
<div style="left:3043.0px;top:2102.7px;width:3.0px;height:58.0px;background:#cfcfcf;"></div>
<div style="left:2390.0px;top:2317.4px;width:3.0px;height:58.0px;background:#cfcfcf;"></div>
<div style="left:2390.0px;top:2345.4px;width:658.0px;height:2.5px;background:#cfcfcf;"></div>
<div style="left:2690px;top:2316.4px"><svg width="60" height="60" viewBox="0 0 60 60"><rect width="60" height="60" fill="#000"/><circle cx="37.0" cy="31.1" r="8.5" fill="none" stroke="#d8d000" stroke-width="1.2"/><circle cx="30.8" cy="37.8" r="8.5" fill="none" stroke="#d8d000" stroke-width="1.2"/><circle cx="21.7" cy="37.1" r="8.5" fill="none" stroke="#d8d000" stroke-width="1.2"/><circle cx="16.6" cy="29.6" r="8.5" fill="none" stroke="#d8d000" stroke-width="1.2"/><circle cx="19.3" cy="20.9" r="8.5" fill="none" stroke="#d8d000" stroke-width="1.2"/><circle cx="27.8" cy="17.5" r="8.5" fill="none" stroke="#d8d000" stroke-width="1.2"/><circle cx="35.7" cy="22.1" r="8.5" fill="none" stroke="#d8d000" stroke-width="1.2"/><path d="M30.5 29.9 Q38.5 31.5 35.1 40.6" fill="none" stroke="#10d010" stroke-width="1.8"/><path d="M27.1 32.0 Q29.7 39.7 20.1 41.3" fill="none" stroke="#10d010" stroke-width="1.8"/><path d="M23.6 30.1 Q18.2 36.2 12.0 28.7" fill="none" stroke="#10d010" stroke-width="1.8"/><path d="M23.5 26.1 Q15.5 24.5 18.9 15.4" fill="none" stroke="#10d010" stroke-width="1.8"/><path d="M26.9 24.0 Q24.3 16.3 33.9 14.7" fill="none" stroke="#10d010" stroke-width="1.8"/><path d="M30.4 25.9 Q35.8 19.8 42.0 27.3" fill="none" stroke="#10d010" stroke-width="1.8"/><circle cx="27" cy="28" r="4.5" fill="#d01010"/><rect x="1" y="1" width="58" height="58" fill="none" stroke="#ccc" stroke-width="2"/></svg></div>
<div style="left:2919.8px;top:2318.4px;width:128.2px;height:7.0px;background:#ff0000;"></div>
<div style="left:2919.8px;top:2325.4px;width:128.2px;height:2.5px;background:#000;"></div>
<div style="left:3047.0px;top:2317.4px;width:3.0px;height:58.0px;background:#cfcfcf;"></div>
<div style="left:2324.0px;top:2416.2px;width:169.0px;height:2.5px;background:#cfcfcf;"></div>
<div style="left:2379px;top:2388.2px"><svg width="60" height="60" viewBox="0 0 60 60"><rect width="60" height="60" fill="#000"/><circle cx="37.0" cy="31.1" r="8.5" fill="none" stroke="#d8d000" stroke-width="1.2"/><circle cx="30.8" cy="37.8" r="8.5" fill="none" stroke="#d8d000" stroke-width="1.2"/><circle cx="21.7" cy="37.1" r="8.5" fill="none" stroke="#d8d000" stroke-width="1.2"/><circle cx="16.6" cy="29.6" r="8.5" fill="none" stroke="#d8d000" stroke-width="1.2"/><circle cx="19.3" cy="20.9" r="8.5" fill="none" stroke="#d8d000" stroke-width="1.2"/><circle cx="27.8" cy="17.5" r="8.5" fill="none" stroke="#d8d000" stroke-width="1.2"/><circle cx="35.7" cy="22.1" r="8.5" fill="none" stroke="#d8d000" stroke-width="1.2"/><path d="M30.5 29.9 Q38.5 31.5 35.1 40.6" fill="none" stroke="#10d010" stroke-width="1.8"/><path d="M27.1 32.0 Q29.7 39.7 20.1 41.3" fill="none" stroke="#10d010" stroke-width="1.8"/><path d="M23.6 30.1 Q18.2 36.2 12.0 28.7" fill="none" stroke="#10d010" stroke-width="1.8"/><path d="M23.5 26.1 Q15.5 24.5 18.9 15.4" fill="none" stroke="#10d010" stroke-width="1.8"/><path d="M26.9 24.0 Q24.3 16.3 33.9 14.7" fill="none" stroke="#10d010" stroke-width="1.8"/><path d="M30.4 25.9 Q35.8 19.8 42.0 27.3" fill="none" stroke="#10d010" stroke-width="1.8"/><circle cx="27" cy="28" r="4.5" fill="#d01010"/><rect x="1" y="1" width="58" height="58" fill="none" stroke="#ccc" stroke-width="2"/></svg></div>
<div style="left:2439.0px;top:2389.2px;width:54.5px;height:7.0px;background:#ff0000;"></div>
<div style="left:2439.0px;top:2396.2px;width:54.5px;height:2.5px;background:#000;"></div>
<div style="left:2492.0px;top:2388.2px;width:3.0px;height:58.0px;background:#cfcfcf;"></div>
<div style="left:2493.0px;top:2416.2px;width:413.0px;height:2.5px;background:#cfcfcf;"></div>
<div style="left:2671px;top:2388.2px"><svg width="60" height="60" viewBox="0 0 60 60"><rect width="60" height="60" fill="#000"/><circle cx="37.0" cy="31.1" r="8.5" fill="none" stroke="#d8d000" stroke-width="1.2"/><circle cx="30.8" cy="37.8" r="8.5" fill="none" stroke="#d8d000" stroke-width="1.2"/><circle cx="21.7" cy="37.1" r="8.5" fill="none" stroke="#d8d000" stroke-width="1.2"/><circle cx="16.6" cy="29.6" r="8.5" fill="none" stroke="#d8d000" stroke-width="1.2"/><circle cx="19.3" cy="20.9" r="8.5" fill="none" stroke="#d8d000" stroke-width="1.2"/><circle cx="27.8" cy="17.5" r="8.5" fill="none" stroke="#d8d000" stroke-width="1.2"/><circle cx="35.7" cy="22.1" r="8.5" fill="none" stroke="#d8d000" stroke-width="1.2"/><path d="M30.5 29.9 Q38.5 31.5 35.1 40.6" fill="none" stroke="#10d010" stroke-width="1.8"/><path d="M27.1 32.0 Q29.7 39.7 20.1 41.3" fill="none" stroke="#10d010" stroke-width="1.8"/><path d="M23.6 30.1 Q18.2 36.2 12.0 28.7" fill="none" stroke="#10d010" stroke-width="1.8"/><path d="M23.5 26.1 Q15.5 24.5 18.9 15.4" fill="none" stroke="#10d010" stroke-width="1.8"/><path d="M26.9 24.0 Q24.3 16.3 33.9 14.7" fill="none" stroke="#10d010" stroke-width="1.8"/><path d="M30.4 25.9 Q35.8 19.8 42.0 27.3" fill="none" stroke="#10d010" stroke-width="1.8"/><circle cx="27" cy="28" r="4.5" fill="#d01010"/><rect x="1" y="1" width="58" height="58" fill="none" stroke="#ccc" stroke-width="2"/></svg></div>
<div style="left:2778.6px;top:2389.2px;width:127.8px;height:7.0px;background:#ff0000;"></div>
<div style="left:2778.6px;top:2396.2px;width:127.8px;height:2.5px;background:#000;"></div>
<div style="left:2905.0px;top:2388.2px;width:3.0px;height:58.0px;background:#cfcfcf;"></div>
<div style="left:2324.0px;top:2487.1px;width:169.0px;height:2.5px;background:#cfcfcf;"></div>
<div style="left:2379px;top:2459.1px"><svg width="60" height="60" viewBox="0 0 60 60"><rect width="60" height="60" fill="#000"/><circle cx="37.0" cy="31.1" r="8.5" fill="none" stroke="#d8d000" stroke-width="1.2"/><circle cx="30.8" cy="37.8" r="8.5" fill="none" stroke="#d8d000" stroke-width="1.2"/><circle cx="21.7" cy="37.1" r="8.5" fill="none" stroke="#d8d000" stroke-width="1.2"/><circle cx="16.6" cy="29.6" r="8.5" fill="none" stroke="#d8d000" stroke-width="1.2"/><circle cx="19.3" cy="20.9" r="8.5" fill="none" stroke="#d8d000" stroke-width="1.2"/><circle cx="27.8" cy="17.5" r="8.5" fill="none" stroke="#d8d000" stroke-width="1.2"/><circle cx="35.7" cy="22.1" r="8.5" fill="none" stroke="#d8d000" stroke-width="1.2"/><path d="M30.5 29.9 Q38.5 31.5 35.1 40.6" fill="none" stroke="#10d010" stroke-width="1.8"/><path d="M27.1 32.0 Q29.7 39.7 20.1 41.3" fill="none" stroke="#10d010" stroke-width="1.8"/><path d="M23.6 30.1 Q18.2 36.2 12.0 28.7" fill="none" stroke="#10d010" stroke-width="1.8"/><path d="M23.5 26.1 Q15.5 24.5 18.9 15.4" fill="none" stroke="#10d010" stroke-width="1.8"/><path d="M26.9 24.0 Q24.3 16.3 33.9 14.7" fill="none" stroke="#10d010" stroke-width="1.8"/><path d="M30.4 25.9 Q35.8 19.8 42.0 27.3" fill="none" stroke="#10d010" stroke-width="1.8"/><circle cx="27" cy="28" r="4.5" fill="#d01010"/><rect x="1" y="1" width="58" height="58" fill="none" stroke="#ccc" stroke-width="2"/></svg></div>
<div style="left:2439.0px;top:2460.1px;width:54.5px;height:7.0px;background:#ff0000;"></div>
<div style="left:2439.0px;top:2467.1px;width:54.5px;height:2.5px;background:#000;"></div>
<div style="left:2492.0px;top:2459.1px;width:3.0px;height:58.0px;background:#cfcfcf;"></div>
<div style="left:2324.0px;top:2558.0px;width:169.0px;height:2.5px;background:#cfcfcf;"></div>
<div style="left:2379px;top:2530.0px"><svg width="60" height="60" viewBox="0 0 60 60"><rect width="60" height="60" fill="#000"/><circle cx="37.0" cy="31.1" r="8.5" fill="none" stroke="#d8d000" stroke-width="1.2"/><circle cx="30.8" cy="37.8" r="8.5" fill="none" stroke="#d8d000" stroke-width="1.2"/><circle cx="21.7" cy="37.1" r="8.5" fill="none" stroke="#d8d000" stroke-width="1.2"/><circle cx="16.6" cy="29.6" r="8.5" fill="none" stroke="#d8d000" stroke-width="1.2"/><circle cx="19.3" cy="20.9" r="8.5" fill="none" stroke="#d8d000" stroke-width="1.2"/><circle cx="27.8" cy="17.5" r="8.5" fill="none" stroke="#d8d000" stroke-width="1.2"/><circle cx="35.7" cy="22.1" r="8.5" fill="none" stroke="#d8d000" stroke-width="1.2"/><path d="M30.5 29.9 Q38.5 31.5 35.1 40.6" fill="none" stroke="#10d010" stroke-width="1.8"/><path d="M27.1 32.0 Q29.7 39.7 20.1 41.3" fill="none" stroke="#10d010" stroke-width="1.8"/><path d="M23.6 30.1 Q18.2 36.2 12.0 28.7" fill="none" stroke="#10d010" stroke-width="1.8"/><path d="M23.5 26.1 Q15.5 24.5 18.9 15.4" fill="none" stroke="#10d010" stroke-width="1.8"/><path d="M26.9 24.0 Q24.3 16.3 33.9 14.7" fill="none" stroke="#10d010" stroke-width="1.8"/><path d="M30.4 25.9 Q35.8 19.8 42.0 27.3" fill="none" stroke="#10d010" stroke-width="1.8"/><circle cx="27" cy="28" r="4.5" fill="#d01010"/><rect x="1" y="1" width="58" height="58" fill="none" stroke="#ccc" stroke-width="2"/></svg></div>
<div style="left:2439.0px;top:2531.0px;width:54.5px;height:7.0px;background:#ff0000;"></div>
<div style="left:2439.0px;top:2538.0px;width:54.5px;height:2.5px;background:#000;"></div>
<div style="left:2492.0px;top:2530.0px;width:3.0px;height:58.0px;background:#cfcfcf;"></div>
<div style="left:2764.8px;top:2530.0px;width:35.6px;height:57px;background:linear-gradient(90deg,#ff0a30,#8a00e8)"></div>
<div style="left:2764.8px;top:2530.0px;width:2.5px;height:57.0px;background:#e0c0e0;"></div>
<div style="left:2797.9px;top:2530.0px;width:2.5px;height:57.0px;background:#e0c0e0;"></div>
<div style="left:2764.8px;top:2558.0px;width:35.6px;height:2.0px;background:#e8d0e8;"></div>
<div style="left:2775.6px;top:2552.0px;width:14px;height:14px;border:2.5px solid #f0d8a0;background:#603060;box-sizing:border-box"></div>
<div style="left:2838.5px;top:2530.0px;width:35.9px;height:57px;background:linear-gradient(90deg,#ff0a30,#8a00e8)"></div>
<div style="left:2838.5px;top:2530.0px;width:2.5px;height:57.0px;background:#e0c0e0;"></div>
<div style="left:2871.9px;top:2530.0px;width:2.5px;height:57.0px;background:#e0c0e0;"></div>
<div style="left:2838.5px;top:2558.0px;width:35.9px;height:2.0px;background:#e8d0e8;"></div>
<div style="left:2849.4px;top:2552.0px;width:14px;height:14px;border:2.5px solid #f0d8a0;background:#603060;box-sizing:border-box"></div>
<div style="left:2906.4px;top:2530.0px;width:35.6px;height:57px;background:linear-gradient(90deg,#ff0a30,#8a00e8)"></div>
<div style="left:2906.4px;top:2530.0px;width:2.5px;height:57.0px;background:#e0c0e0;"></div>
<div style="left:2939.5px;top:2530.0px;width:2.5px;height:57.0px;background:#e0c0e0;"></div>
<div style="left:2906.4px;top:2558.0px;width:35.6px;height:2.0px;background:#e8d0e8;"></div>
<div style="left:2917.2px;top:2552.0px;width:14px;height:14px;border:2.5px solid #f0d8a0;background:#603060;box-sizing:border-box"></div>
<div style="left:2944.5px;top:2530.0px;width:35.5px;height:57px;background:linear-gradient(90deg,#ff0a30,#8a00e8)"></div>
<div style="left:2944.5px;top:2530.0px;width:2.5px;height:57.0px;background:#e0c0e0;"></div>
<div style="left:2977.5px;top:2530.0px;width:2.5px;height:57.0px;background:#e0c0e0;"></div>
<div style="left:2944.5px;top:2558.0px;width:35.5px;height:2.0px;background:#e8d0e8;"></div>
<div style="left:2955.2px;top:2552.0px;width:14px;height:14px;border:2.5px solid #f0d8a0;background:#603060;box-sizing:border-box"></div>
<div style="left:3012.4px;top:2530.0px;width:35.6px;height:57px;background:linear-gradient(90deg,#ff0a30,#8a00e8)"></div>
<div style="left:3012.4px;top:2530.0px;width:2.5px;height:57.0px;background:#e0c0e0;"></div>
<div style="left:3045.5px;top:2530.0px;width:2.5px;height:57.0px;background:#e0c0e0;"></div>
<div style="left:3012.4px;top:2558.0px;width:35.6px;height:2.0px;background:#e8d0e8;"></div>
<div style="left:3023.2px;top:2552.0px;width:14px;height:14px;border:2.5px solid #f0d8a0;background:#603060;box-sizing:border-box"></div>
<div style="left:2964.4px;top:2600.9px;width:34.6px;height:57px;background:linear-gradient(90deg,#ff0a30,#8a00e8)"></div>
<div style="left:2964.4px;top:2600.9px;width:2.5px;height:57.0px;background:#e0c0e0;"></div>
<div style="left:2996.5px;top:2600.9px;width:2.5px;height:57.0px;background:#e0c0e0;"></div>
<div style="left:2964.4px;top:2628.9px;width:34.6px;height:2.0px;background:#e8d0e8;"></div>
<div style="left:2974.7px;top:2622.9px;width:14px;height:14px;border:2.5px solid #f0d8a0;background:#603060;box-sizing:border-box"></div>
<div style="left:3000.5px;top:2600.9px;width:35.5px;height:57px;background:linear-gradient(90deg,#ff0a30,#8a00e8)"></div>
<div style="left:3000.5px;top:2600.9px;width:2.5px;height:57.0px;background:#e0c0e0;"></div>
<div style="left:3033.5px;top:2600.9px;width:2.5px;height:57.0px;background:#e0c0e0;"></div>
<div style="left:3000.5px;top:2628.9px;width:35.5px;height:2.0px;background:#e8d0e8;"></div>
<div style="left:3011.2px;top:2622.9px;width:14px;height:14px;border:2.5px solid #f0d8a0;background:#603060;box-sizing:border-box"></div>
<div style="left:2983.6px;top:2671.8px;width:36.0px;height:57px;background:linear-gradient(90deg,#ff0a30,#8a00e8)"></div>
<div style="left:2983.6px;top:2671.8px;width:2.5px;height:57.0px;background:#e0c0e0;"></div>
<div style="left:3017.1px;top:2671.8px;width:2.5px;height:57.0px;background:#e0c0e0;"></div>
<div style="left:2983.6px;top:2699.8px;width:36.0px;height:2.0px;background:#e8d0e8;"></div>
<div style="left:2994.6px;top:2693.8px;width:14px;height:14px;border:2.5px solid #f0d8a0;background:#603060;box-sizing:border-box"></div>
<div style="left:3874.3px;top:2317px;width:63.7px;height:57px;background:linear-gradient(180deg,rgba(0,0,0,.9) 0%,rgba(0,0,0,0) 45%,rgba(0,0,0,0) 55%,rgba(0,0,0,.9) 100%),linear-gradient(90deg,#ff0010 0%,#ff2040 40%,#e0d0ff 100%)"></div>
<div style="left:3939.0px;top:2317px;width:76.0px;height:57px;background:linear-gradient(180deg,rgba(0,0,0,.9) 0%,rgba(0,0,0,0) 45%,rgba(0,0,0,0) 55%,rgba(0,0,0,.9) 100%),linear-gradient(90deg,#ff0010 0%,#ff2040 40%,#e0d0ff 100%)"></div>
<div style="left:4016.0px;top:2317px;width:38.0px;height:57px;background:linear-gradient(180deg,rgba(0,0,0,.9) 0%,rgba(0,0,0,0) 45%,rgba(0,0,0,0) 55%,rgba(0,0,0,.9) 100%),linear-gradient(90deg,#ff0010 0%,#ff2040 40%,#e0d0ff 100%)"></div>
<div style="left:4054.0px;top:2317px;width:17.0px;height:57px;background:linear-gradient(180deg,rgba(0,0,0,.9) 0%,rgba(0,0,0,0) 45%,rgba(0,0,0,0) 55%,rgba(0,0,0,.9) 100%),linear-gradient(90deg,#ff0010 0%,#ff2040 40%,#e0d0ff 100%)"></div>
<div style="left:4109px;top:2317px;width:42px;height:57px;background:linear-gradient(90deg,#ff1030,#f0d0f0)"></div>
<div style="left:3874.0px;top:2345.0px;width:276.0px;height:2.0px;background:#e0e0e0;"></div>
<div style="left:3874.0px;top:2317.0px;width:2.5px;height:57.0px;background:#e0d0e0;"></div>
<div style="left:3937.0px;top:2317.0px;width:2.5px;height:57.0px;background:#e0d0e0;"></div>
<div style="left:4014.0px;top:2317.0px;width:2.5px;height:57.0px;background:#e0d0e0;"></div>
<div style="left:4053.0px;top:2317.0px;width:2.5px;height:57.0px;background:#e0d0e0;"></div>
<div style="left:4108.0px;top:2317.0px;width:2.5px;height:57.0px;background:#e0d0e0;"></div>
<div style="left:4150.0px;top:2317.0px;width:2.5px;height:57.0px;background:#e0d0e0;"></div>
<div style="left:3913.0px;top:2317.0px;width:24.0px;height:7.0px;background:#ff0000;"></div>
<div style="left:3990.0px;top:2317.0px;width:24.0px;height:7.0px;background:#ff0000;"></div>
<div style="left:4029.0px;top:2317.0px;width:24.0px;height:7.0px;background:#ff0000;"></div>
<div style="left:4084.0px;top:2317.0px;width:24.0px;height:7.0px;background:#ff0000;"></div>
<div style="left:4126.0px;top:2317.0px;width:24.0px;height:7.0px;background:#ff0000;"></div>
<div style="left:3901px;top:2339px;width:10px;height:12px;background:linear-gradient(90deg,#8020ff,#e0d0ff);border:1.5px solid #ddd;box-sizing:border-box"></div>
<div style="left:3972px;top:2339px;width:10px;height:12px;background:linear-gradient(90deg,#8020ff,#e0d0ff);border:1.5px solid #ddd;box-sizing:border-box"></div>
<div style="left:4029px;top:2339px;width:10px;height:12px;background:linear-gradient(90deg,#8020ff,#e0d0ff);border:1.5px solid #ddd;box-sizing:border-box"></div>
<div style="left:4075px;top:2339px;width:10px;height:12px;background:linear-gradient(90deg,#8020ff,#e0d0ff);border:1.5px solid #ddd;box-sizing:border-box"></div>
<div style="left:4123px;top:2339px;width:10px;height:12px;background:linear-gradient(90deg,#8020ff,#e0d0ff);border:1.5px solid #ddd;box-sizing:border-box"></div>
<div style="left:2357.8px;top:822.7px;width:2.0px;height:2182.3px;background:rgba(0,255,0,0.5);"></div>
<div style="left:2425.4px;top:822.7px;width:2.0px;height:2182.3px;background:rgba(0,255,0,0.5);"></div>
<div style="left:2493.0px;top:822.7px;width:2.0px;height:2182.3px;background:rgba(0,255,0,0.5);"></div>
<div style="left:2560.4px;top:822.7px;width:2.0px;height:2182.3px;background:rgba(0,255,0,0.5);"></div>
<div style="left:2631.0px;top:822.7px;width:2.0px;height:2182.3px;background:rgba(0,255,0,0.5);"></div>
<div style="left:2699.0px;top:822.7px;width:2.0px;height:2182.3px;background:rgba(0,255,0,0.5);"></div>
<div style="left:2770.0px;top:822.7px;width:2.0px;height:2182.3px;background:rgba(0,255,0,0.5);"></div>
<div style="left:2841.0px;top:822.7px;width:2.0px;height:2182.3px;background:rgba(0,255,0,0.5);"></div>
<div style="left:2911.7px;top:822.7px;width:2.0px;height:2182.3px;background:rgba(0,255,0,0.5);"></div>
<div style="left:2979.8px;top:822.7px;width:2.0px;height:2182.3px;background:rgba(0,255,0,0.5);"></div>
<div style="left:3050.6px;top:822.7px;width:2.0px;height:2182.3px;background:rgba(0,255,0,0.5);"></div>
<div style="left:3118.7px;top:822.7px;width:2.0px;height:2182.3px;background:rgba(0,255,0,0.5);"></div>
<div style="left:3185.7px;top:822.7px;width:2.0px;height:2182.3px;background:rgba(0,255,0,0.5);"></div>
<div style="left:3253.5px;top:822.7px;width:2.0px;height:2182.3px;background:rgba(0,255,0,0.5);"></div>
<div style="left:3321.0px;top:822.7px;width:2.0px;height:2182.3px;background:rgba(0,255,0,0.5);"></div>
<div style="left:3388.7px;top:822.7px;width:2.0px;height:2182.3px;background:rgba(0,255,0,0.5);"></div>
<div style="left:3460.0px;top:822.7px;width:2.0px;height:2182.3px;background:rgba(0,255,0,0.5);"></div>
<div style="left:3527.6px;top:822.7px;width:2.0px;height:2182.3px;background:rgba(0,255,0,0.5);"></div>
<div style="left:3595.5px;top:822.7px;width:2.0px;height:2182.3px;background:rgba(0,255,0,0.5);"></div>
<div style="left:3666.0px;top:822.7px;width:2.0px;height:2182.3px;background:rgba(0,255,0,0.5);"></div>
<div style="left:3733.5px;top:822.7px;width:2.0px;height:2182.3px;background:rgba(0,255,0,0.5);"></div>
<div style="left:3805.0px;top:822.7px;width:2.0px;height:2182.3px;background:rgba(0,255,0,0.5);"></div>
<div style="left:3872.4px;top:822.7px;width:2.0px;height:2182.3px;background:rgba(0,255,0,0.5);"></div>
<div style="left:3940.0px;top:822.7px;width:2.0px;height:2182.3px;background:rgba(0,255,0,0.5);"></div>
<div style="left:4010.8px;top:822.7px;width:2.0px;height:2182.3px;background:rgba(0,255,0,0.5);"></div>
<div style="left:4081.7px;top:822.7px;width:2.0px;height:2182.3px;background:rgba(0,255,0,0.5);"></div>
<div style="left:4149.7px;top:822.7px;width:2.0px;height:2182.3px;background:rgba(0,255,0,0.5);"></div>
<div style="left:2993.0px;top:610.0px;width:3.0px;height:2395.0px;background:rgba(230,30,30,0.8);"></div>
</div>
<div class="t" style="left:3881.7px;top:3030.0px;font-size:23.6px;line-height:23.6px;color:#ffffff;font-weight:700;">Screenshot by Xnapper.com</div>
</body></html>
